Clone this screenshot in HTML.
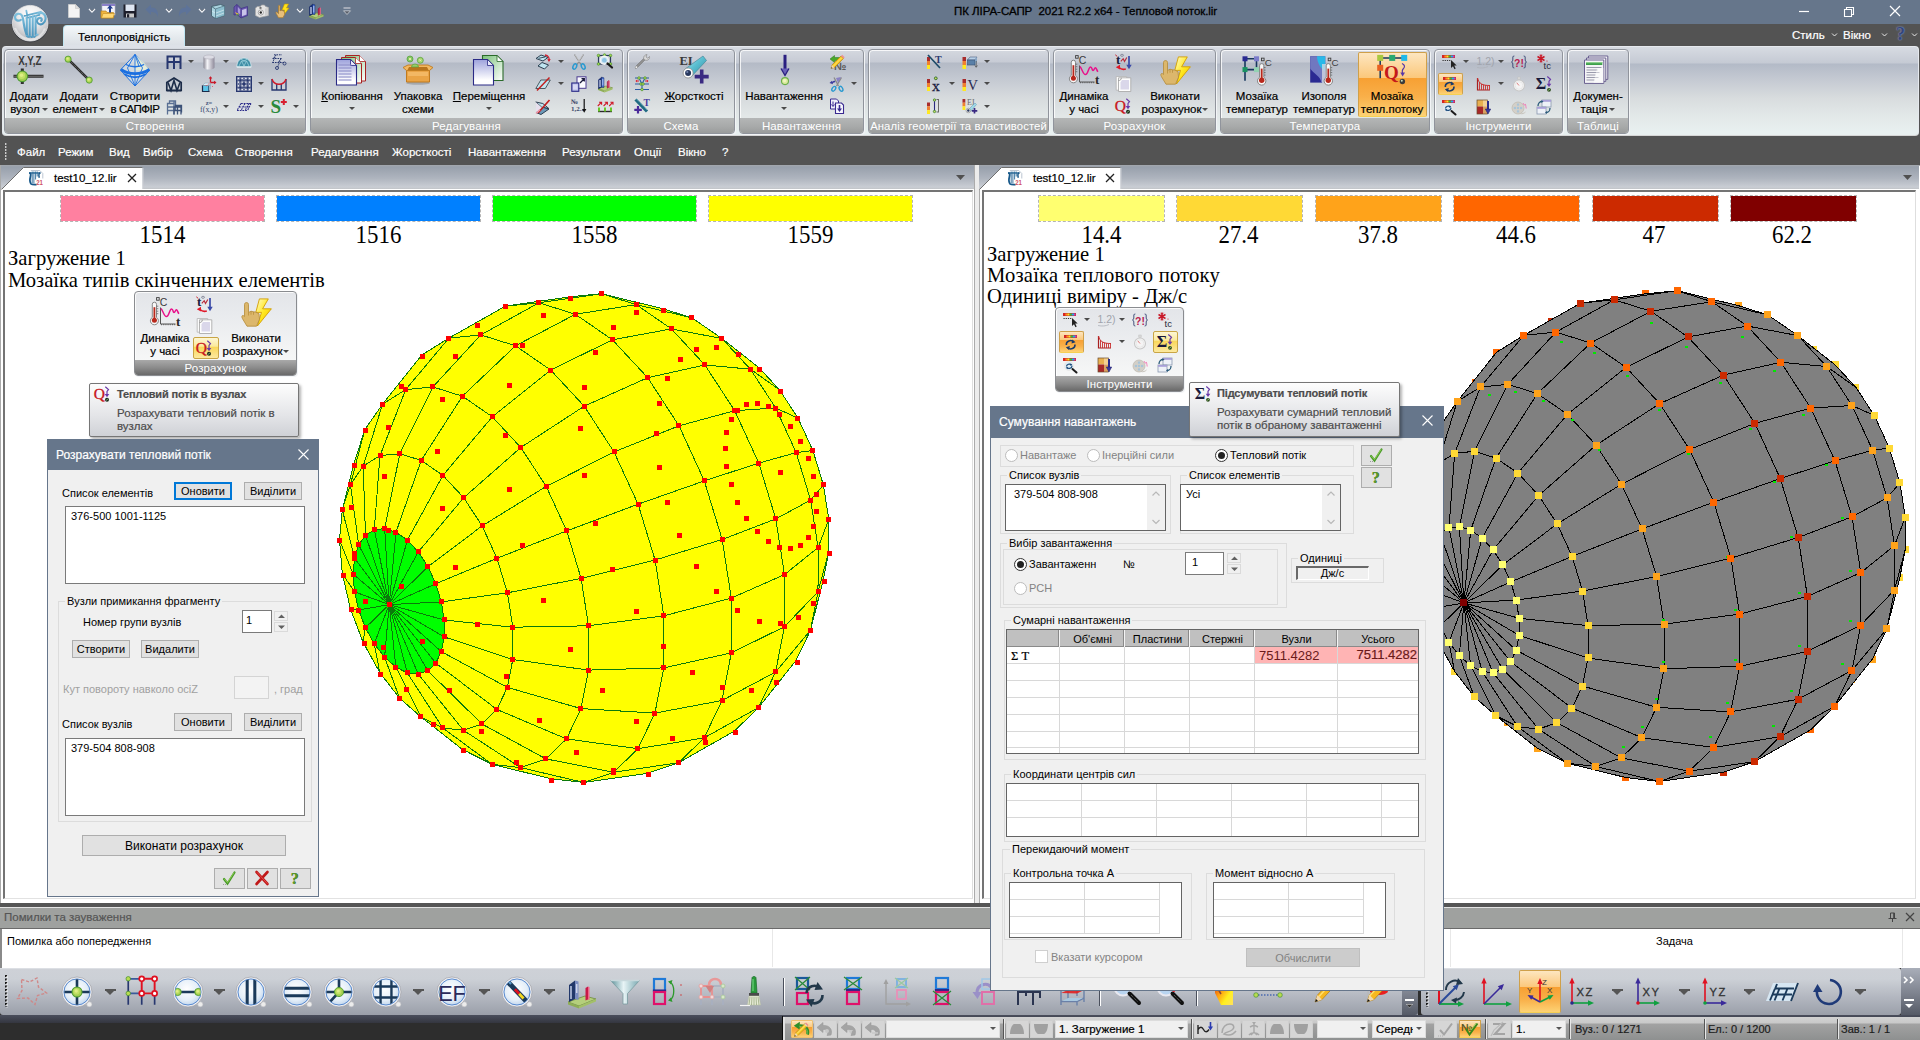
<!DOCTYPE html>
<html lang="uk">
<head>
<meta charset="utf-8">
<title>ПК ЛІРА-САПР 2021 R2.2 x64 - Тепловой поток.lir</title>
<style>
*{box-sizing:border-box;margin:0;padding:0}
html,body{width:1920px;height:1040px;overflow:hidden;background:#535353}
body{position:relative;-webkit-text-stroke:.2px currentColor;font-family:"Liberation Sans",sans-serif;font-size:12px;color:#000;line-height:1}
.abs{position:absolute}
svg{position:absolute;overflow:visible}
.t{position:absolute;white-space:nowrap}
/* ---------- title bar ---------- */
#titlebar{position:absolute;left:0;top:0;width:1920px;height:24px;background:#66768b}
#title{position:absolute;left:0;width:1920px;top:5px;text-align:center;font-size:12.5px;color:#000;padding-left:252px;letter-spacing:-.1px}
/* ---------- ribbon ---------- */
#rtab{position:absolute;left:63px;top:25px;width:122px;height:22px;border-radius:4px 4px 0 0;background:linear-gradient(#f4f8fa,#e3e8ec 60%,#d9dde4);border:1px solid #bfe6f2;border-bottom:none;text-align:center;font-size:12.5px;padding-top:5px}
#ribbon{position:absolute;left:2px;top:46px;width:1917px;height:90px;border-radius:4px;background:linear-gradient(#d7dbe2 0px,#c5cad4 16px,#b3bac7 17px,#c4c9d2 32px,#d8dcde 51px,#e3e9e9 70px,#e8f0f0 85px);border:1px solid #e6e9ee;border-bottom-color:#d6d6d6}
.grp{position:absolute;top:49px;height:85px;border-radius:4px;border:1px solid #90949c;box-shadow:1px 1px 0 #f2f4f6, inset 1px 1px 0 rgba(255,255,255,.8);background:linear-gradient(#d4d8df 0px,#c7cbd5 12px,#b4bac6 13px,#c3c8d1 28px,#d6dadd 47px,#e2e7e7 66px)}
.grp .lbl{position:absolute;left:0;right:0;bottom:0;height:15px;border-radius:0 0 3px 3px;background:linear-gradient(#b4b6b6,#a8aaaa 55%,#9a9c9c);color:#fff;font-size:12px;text-align:center;line-height:16px;-webkit-text-stroke:0;letter-spacing:.1px}
.rb{position:absolute;font-size:12.5px;text-align:center;line-height:13px;white-space:nowrap;letter-spacing:-.15px}
.dd{position:absolute;width:0;height:0;border-left:3.5px solid transparent;border-right:3.5px solid transparent;border-top:4px solid #555}
/* ---------- menu bar ---------- */
#menubar{position:absolute;left:0;top:137px;width:1920px;height:28px;background:#535353}
#menubar span{position:absolute;top:10px;color:#fff;font-size:12px;white-space:nowrap}
/* ---------- doc tabs ---------- */
.strip{position:absolute;top:165px;height:24px;background:linear-gradient(#a4a8ae 0,#98a0ac 2px,#aeb4be 55%,#c9cdd4 22px,#c2c4c8 24px)}
.dtab{position:absolute;top:168px;height:22px;background:#fff}
/* ---------- dialogs ---------- */
.dlg{position:absolute;background:#f0f0f0;border:1px solid #66768b}
.dlg .cap{position:absolute;left:0;top:0;right:0;background:#66768b;color:#fff;font-size:12px}
.gb{position:absolute;border:1px solid #dcdcdc}
.gb>i{position:absolute;top:-6px;font-style:normal;background:#f0f0f0;padding:0 2px;white-space:nowrap;font-size:11px}
.btn{position:absolute;background:#e1e1e1;border:1px solid #adadad;font-size:11px;text-align:center;white-space:nowrap}
.edit{position:absolute;background:#fff;border:1px solid #7a7a7a;font-size:11px}
.s11{font-size:11px;-webkit-text-stroke:0}
.gb>i,.btn,.edit{-webkit-text-stroke:0}
.tip{position:absolute;border:1px solid #767676;border-radius:2px;background:linear-gradient(#fdfdfd,#e4e5e8 60%,#cfd1d6);box-shadow:2px 2px 3px rgba(0,0,0,.3)}
</style>
</head>
<body>
<!-- ================= TITLE BAR ================= -->
<div id="titlebar"></div>
<div class="t" style="left:954px;top:6px;font-size:11.5px;color:#000;letter-spacing:-.05px;-webkit-text-stroke:.3px #000">ПК ЛІРА-САПР&nbsp; 2021 R2.2 x64 - Тепловой поток.lir</div>
<!-- window buttons -->
<svg style="left:1790px;top:0" width="130" height="23" viewBox="0 0 130 23">
 <path d="M9 11.5h10" stroke="#fff" stroke-width="1.2" fill="none"/>
 <path d="M54.5 9.5h7v7h-7z M56.5 9.5v-2h7v7h-2" stroke="#fff" stroke-width="1.1" fill="none"/>
 <path d="M100 6l10 10M110 6l-10 10" stroke="#fff" stroke-width="1.2" fill="none"/>
</svg>
<i class="ic" style="left:74px;top:11px"><svg width="16" height="16" viewBox="0 0 16 16"><path d="M2.5 1.500h7l4 4v9h-11z" fill="#f4f4f4" stroke="#d0d0d0" stroke-width=".8"/><path d="M9.500 1.500v4h4z" fill="#dcdcdc" stroke="#c4c4c4" stroke-width=".6"/></svg></i><i class="ic" style="left:108px;top:11px"><svg width="16" height="16" viewBox="0 0 16 16"><rect x="2" y="1" width="13" height="11" fill="#f2f2f8" stroke="#b8b8c8" stroke-width=".6"/><rect x="2" y="1" width="13" height="2" fill="#8a80c8"/><path d="M1 8h5l1 1.500h6.500v5.500h-12.500z" fill="#f2b740" stroke="#b8821c" stroke-width=".7"/><path d="M1.500 15l1.500-4.500h11.500l-1.500 4.500z" fill="#ffd873" stroke="#c08c22" stroke-width=".6"/><path d="M9 9.500v-4h-2l3-3.500l3 3.500h-2v4z" fill="#1f3c8c"/></svg></i><i class="ic" style="left:130px;top:11px"><svg width="16" height="16" viewBox="0 0 16 16"><path d="M1.500 1.500h13v13h-13z" fill="#1d1f2b"/><rect x="3.500" y="1.500" width="9" height="6.500" fill="#dfe6f2"/><rect x="4" y="10.500" width="8" height="4" fill="#c9c9c9"/><rect x="5" y="11.200" width="2.200" height="3.300" fill="#1d1f2b"/></svg></i><i class="ic" style="left:152px;top:11px"><svg width="16" height="16" viewBox="0 0 16 16"><path d="M1.500 6.500l5.500-5v3c5 0 7.500 3 7 9.500c-1-3.500-3-5-7-5v3z" fill="#5a72a0" opacity=".7"/></svg></i><i class="ic" style="left:185px;top:11px"><svg width="16" height="16" viewBox="0 0 16 16"><path d="M14.500 6.500l-5.500-5v3c-5 0-7.500 3-7 9.500c1-3.500 3-5 7-5v3z" fill="#5a72a0" opacity=".7"/></svg></i><i class="ic" style="left:218px;top:11px"><svg width="16" height="16" viewBox="0 0 16 16"><path d="M1.500 3.500l9-2l4 1.500v9.500l-9 3l-4-2.500z" fill="#a9d3e0" stroke="#3f5a68" stroke-width=".8"/><path d="M1.500 3.500l4 2.500l9-3M5.500 6v9.500" stroke="#3f5a68" stroke-width=".8" fill="none"/><path d="M5.500 6l9-3v9.500l-9 3z" fill="#7fb4c6" opacity=".7"/><path d="M2 8l3 2M6 10l8-3M6 13l8-3" stroke="#e6f4f8" stroke-width=".6"/></svg></i><i class="ic" style="left:241px;top:11px"><svg width="16" height="16" viewBox="0 0 16 16"><path d="M1 4l3-2.500l4 4l6.500-2v9l-6.500 2.500l-4-3.500l-3 .5z" fill="#6a58b0" stroke="#3c2e84" stroke-width=".7"/><path d="M8 5.500v9.500M4 1.500v10" stroke="#3c2e84" stroke-width=".7"/><path d="M9 7l4.500-1.400v6l-4.500 1.700z" fill="#c8c4e8"/><path d="M2 9l2 3l2-1z" fill="#f2c830"/><path d="M3.500 10.500l2.500 1.500l-1 .8z" fill="#2ea02e"/><path d="M4.800 4l2.400 2.400v5l-2.400-2.200z" fill="#a89ad8"/></svg></i><i class="ic" style="left:262px;top:11px"><svg width="16" height="16" viewBox="0 0 16 16"><path d="M1.500 5l2-1.500h3l1-1.500h3l1 1.500l3 1v8l-9 2l-4-2z" fill="#e4e4e4" stroke="#a8a8a8" stroke-width=".7"/><circle cx="6.800" cy="9.500" r="2.600" fill="#f6f6f6" stroke="#8a8a8a" stroke-width=".7"/><circle cx="6.800" cy="9.500" r="1.200" fill="#222"/><rect x="5.500" y="4.200" width="2" height="1.500" fill="#555"/><path d="M11 5.500l3-.5v7l-3 1z" fill="#cfcfcf"/></svg></i><i class="ic" style="left:283px;top:11px"><svg width="16" height="16" viewBox="0 0 16 16"><path d="M9.500 1h4l-2 4h2.500l-6 8l1.500-6h-2.500z" fill="#ffe11a" stroke="#c79a00" stroke-width=".6"/><path d="M3.500 3c0-1 1.500-1 1.500 0v5l1-.8l1 .3l1 .2l1.500 1v3l-1.500 3h-4.500l-2.500-4.500c-.5-1 .5-1.500 1.200-.8l1.300 1.300z" fill="#e8bf7a" stroke="#a8782c" stroke-width=".7"/></svg></i><i class="ic" style="left:316px;top:11px"><svg width="16" height="16" viewBox="0 0 16 16"><path d="M1 12.300l8-2.300l6.500 1.800l-8 3z" fill="#b5cf7c" stroke="#6e8c3c" stroke-width=".6"/><path d="M1 12.300v1.700l6.500 2.500v-1.700z" fill="#8fae55"/><path d="M7.500 14.800v1.700l8-3v-1.700z" fill="#a3c068"/><path d="M1.500 3.800l3.200-2.600v10l-3.200 1.600z" fill="#18307e" stroke="#10205a" stroke-width=".5"/><path d="M4.700 1.200l2.200 .6v9.800l-2.200-.4z" fill="#4a74dc" stroke="#10205a" stroke-width=".5"/><path d="M3 4v7" stroke="#fff" stroke-width="1"/><path d="M5.800 3v6.500" stroke="#cfe0ff" stroke-width=".8"/><path d="M10.200 5.800l1.500-1.300v7l-1.500 .8z" fill="#c81848" stroke="#8a1030" stroke-width=".4"/><path d="M11.700 4.500l1.100 .3v7l-1.100-.3z" fill="#f06488"/></svg></i><svg style="left:87.5px;top:8px" width="8" height="6" viewBox="0 0 8 6"><path d="M1 1l3 3l3-3" stroke="#eef0f4" stroke-width="1.300" fill="none"/><path d="M2.300 1.200l1.700 1.700l1.700-1.700" stroke="#555" stroke-width=".5" fill="none"/></svg><svg style="left:164.5px;top:8px" width="8" height="6" viewBox="0 0 8 6"><path d="M1 1l3 3l3-3" stroke="#eef0f4" stroke-width="1.300" fill="none"/><path d="M2.300 1.200l1.700 1.700l1.700-1.700" stroke="#555" stroke-width=".5" fill="none"/></svg><svg style="left:197.5px;top:8px" width="8" height="6" viewBox="0 0 8 6"><path d="M1 1l3 3l3-3" stroke="#eef0f4" stroke-width="1.300" fill="none"/><path d="M2.300 1.200l1.700 1.700l1.700-1.700" stroke="#555" stroke-width=".5" fill="none"/></svg><svg style="left:296px;top:8px" width="8" height="6" viewBox="0 0 8 6"><path d="M1 1l3 3l3-3" stroke="#eef0f4" stroke-width="1.300" fill="none"/><path d="M2.300 1.200l1.700 1.700l1.700-1.700" stroke="#555" stroke-width=".5" fill="none"/></svg><div class="abs" style="left:341px;top:6px;width:12px;height:10px"><svg width="12" height="10" viewBox="0 0 12 10"><path d="M2.500 2h7" stroke="#c4c8d0" stroke-width="1.300"/><path d="M2.500 4.800h7l-3.500 3.700z" fill="#5a5f6a" stroke="#c4c8d0" stroke-width=".9"/></svg></div>
<!-- app logo -->
<svg style="left:11px;top:4px" width="39" height="39" viewBox="0 0 39 39"><defs><radialGradient id="lg1" cx="50%" cy="28%" r="80%"><stop offset="0" stop-color="#ffffff"/><stop offset=".4" stop-color="#ececee"/><stop offset=".78" stop-color="#bfc0c3"/><stop offset="1" stop-color="#f0f0f0"/></radialGradient><linearGradient id="lg2" x1="0" y1="0" x2="0" y2="1"><stop offset="0" stop-color="#7ec0de"/><stop offset="1" stop-color="#4a94bc"/></linearGradient></defs><circle cx="19.300" cy="19.800" r="18.600" fill="#2c3038" opacity=".55"/><circle cx="19.200" cy="19.200" r="17.800" fill="url(#lg1)" stroke="#e8e8ea" stroke-width=".8"/><path d="M4 24c2 6 8 11 15 11.500s13-5 15-11" stroke="#fff" stroke-width="2.200" fill="none" opacity=".45"/><g fill="none" stroke="url(#lg2)" stroke-linecap="round" stroke-linejoin="round"><path d="M9.800 15.800c-2.200 1.800-5.800 .6-5.800-2.600c0-3.800 5-4.600 7-1.500c1.200 2 1.200 4.500 1.800 8c.8 5 2 9.500 3.700 12.300" stroke-width="2.200"/><path d="M15.300 6.500l1 5.500M13.500 11.800l16.500-4M15.500 14l13-3.200" stroke-width="1.700"/><path d="M15.800 14v17.500M18.700 13.200v19.300M21.700 12.500v19.800M24.600 12v18.700" stroke-width="2.100"/><path d="M27.500 9.400c4-1.600 7.400 1 7.100 5.400c-.3 4.200-4.500 6.900-7.400 4.700c-2.400-1.800-1.100-5.400 1.600-5.600c2-.1 2.700 2 1.400 3" stroke-width="2.100"/><path d="M27 13v16.500" stroke-width="1.800"/><path d="M15.500 31.800l2 1.200l1.500-.8l1.500 1l1.500-.8l1.500 .6l1.500-1.800l1.800-.8" stroke-width="1.600"/></g></svg>
<!-- right-side style/window -->
<div class="t" style="left:1792px;top:30px;font-size:11.5px;color:#fff">Стиль</div>
<div class="t" style="left:1843px;top:30px;font-size:11.5px;color:#fff">Вікно</div>
<svg style="left:1830px;top:31px" width="90" height="10" viewBox="0 0 90 10"><path d="M2 2.5l2.5 2.5l2.5-2.5M52 2.5l2.5 2.5l2.5-2.5M82 2.5l2.5 2.5l2.5-2.5" stroke="#e8e8e8" stroke-width="1" fill="none"/></svg>
<div class="t" style="left:1896px;top:25px;font-size:18px;font-weight:bold;color:#34467a;font-family:'Liberation Serif',serif;text-shadow:0 0 1px #9fb0e0,0 0 2px #7f90c0">?</div>
<!-- ribbon tab -->
<div id="rtab"><span style="font-size:11.5px;letter-spacing:-.02px">Теплопровідність</span></div>
<div id="ribbon"></div>
<div class="abs" style="left:64px;top:45px;width:120px;height:3px;background:#dde1e8"></div>
<!-- ================= RIBBON GROUPS ================= -->
<style>
.rb{position:absolute;top:90px;width:90px;margin-left:-45px;font-size:11.5px;line-height:12.5px;text-align:center;white-space:nowrap;letter-spacing:-.02px}
.rb u{text-decoration:underline;text-underline-offset:1px}
.da{display:inline-block;width:0;height:0;border-left:3px solid transparent;border-right:3px solid transparent;border-top:3.5px solid #4a4a4a;vertical-align:middle;margin-left:2px;position:relative;top:0px}
.db{position:absolute;width:0;height:0;border-left:3px solid transparent;border-right:3px solid transparent;border-top:3.5px solid #4a4a4a;margin-left:-3px}
.ic,.IC,.sic{font-style:normal}
.ic{position:absolute;display:block;width:16px;height:16px;margin:-8px 0 0 -8px}
.ic svg{left:0;top:0}
.IC{position:absolute;display:block;width:32px;height:32px;margin:-16px 0 0 -16px}
.IC svg{left:0;top:0}
.hl{position:absolute;border:1px solid #cfa04a;border-bottom-color:#f6cf52;border-radius:2px;background:linear-gradient(#fde6c0,#fbc87c 39%,#f7a033 40%,#f9b04a 70%,#fdd274 100%)}
.hl2{position:absolute;border:1px solid #c9a545;border-radius:2px;background:linear-gradient(#fdf6d4,#fbe99c 42%,#f9d658 44%,#fce9a0 100%)}
.fonly{display:none}
.flt .fonly{display:block}
.flt .grp{background:linear-gradient(#e3e5e9 0,#e9ebee 24px,#f1f2f3 50px,#f6f7f7 68px);border-color:#8a8c90}
.flt .grp .lbl{background:linear-gradient(#a9a9a9,#8c8c8c 50%,#696969)}
</style>




















<div class="grp" style="left:4px;width:302px"><div class="lbl"><span style="font-size:11.5px">Створення</span></div></div>
<i class="IC" style="left:29px;top:69px"><svg width="32" height="32" viewBox="0 0 32 32"><text transform="translate(16.800 11.500) scale(0.8 1)" text-anchor="middle" font-family="Liberation Sans" font-weight="bold" font-size="12.2" fill="#3a3a3a">X,Y,Z</text><path d="M.5 23.300h30M9.300 15.500v15.500" stroke="#2e2e2e" stroke-width="3"/><path d="M1 23.300h29" stroke="#8a8a8a" stroke-width=".7"/><circle cx="9.3" cy="23.3" r="5.3" fill="#a4cf52" stroke="#4d9c30" stroke-width="1.06"/><circle cx="8.77" cy="22.66" r="3.29" fill="#c8e468" opacity=".85"/><circle cx="8.51" cy="22.24" r="1.75" fill="#e2f08a" opacity=".9"/></svg></i>
<div class="rb" style="left:29px">Додати<br>вузол<b class="da"></b></div>
<i class="IC" style="left:79px;top:69px"><svg width="32" height="32" viewBox="0 0 32 32"><path d="M5.100 6.200l21.100 20.900" stroke="#2b2b2b" stroke-width="2.600"/><path d="M5.100 6.200l21.100 20.900" stroke="#9a9a9a" stroke-width=".7" stroke-dasharray="1 1"/><circle cx="5.1" cy="6.2" r="3.1" fill="#a4cf52" stroke="#4d9c30" stroke-width="0.80"/><circle cx="4.79" cy="5.83" r="1.92" fill="#c8e468" opacity=".85"/><circle cx="4.63" cy="5.58" r="1.02" fill="#e2f08a" opacity=".9"/><circle cx="26.2" cy="27.1" r="3.1" fill="#a4cf52" stroke="#4d9c30" stroke-width="0.80"/><circle cx="25.89" cy="26.73" r="1.92" fill="#c8e468" opacity=".85"/><circle cx="25.73" cy="26.48" r="1.02" fill="#e2f08a" opacity=".9"/></svg></i>
<div class="rb" style="left:79px">Додати<br>елемент<b class="da"></b></div>
<i class="IC" style="left:135px;top:69px"><svg width="32" height="34" viewBox="0 0 32 34"><path d="M16 1.500l14.800 15.500l-14.800 16l-14.600-16z" fill="#e4ecf0" fill-opacity=".55" stroke="#1b6fe0" stroke-width="1"/><path d="M16 1.500l9 8l5.800 7.500l-14.800 .5z" fill="#e8f0d8" fill-opacity=".8"/><path d="M16 1.500v31.500M16 1.500l-7.500 13.500l7.500 18M16 1.500l7.500 13.500l-7.500 18M16 1.500l4 12" stroke="#1b6fe0" stroke-width=".9" fill="none"/><path d="M7 11.500c5 3 13 3 18 0" stroke="#1b6fe0" stroke-width="1.300" fill="none"/><path d="M2 16.500c8 5.500 20 5.500 28.300 0" stroke="#1b6fe0" stroke-width="2.800" fill="none"/><path d="M5 21c7 4 15 4 22 0" stroke="#1b6fe0" stroke-width="2" fill="none"/></svg></i>
<div class="rb" style="left:135px">Створити<br><span style="letter-spacing:-.5px">в САПФІР</span></div>
<i class="ic" style="left:174px;top:62px"><svg width="16" height="16" viewBox="0 0 16 16"><path d="M1.500 15v-12.500h13v12.500M8 2.500v12.500M1.500 8h13" stroke="#27376f" stroke-width="2" fill="none"/></svg></i><b class="db" style="left:191px;top:60px"></b>
<i class="ic" style="left:174px;top:84px"><svg width="16" height="16" viewBox="0 0 16 16"><path d="M.8 14.500v-8l7.200-4.500l7.200 4.500v8z" fill="none" stroke="#1c2c48" stroke-width="1.700"/><path d="M2 6.500l3 8l3-10l3 10l3-8" fill="none" stroke="#1c2c48" stroke-width="1.600"/><path d="M.8 14.500h14.400" stroke="#1c2c48" stroke-width="1.800"/></svg></i>
<i class="ic" style="left:174px;top:107px"><svg width="16" height="16" viewBox="0 0 16 16"><path d="M1.500 15.500v-11h6.500v11M1.500 8h6.500M1.500 11.500h6.500M3.500 4.500v-2.500h6v9.500M8 2v3" stroke="#5a7094" stroke-width="1.300" fill="none"/><path d="M8 15.500v-7.500h7v7.500M8 11.500h7M11.500 8v7.500M9.500 8v-1.500h6v7" stroke="#3c5278" stroke-width="1.300" fill="none"/></svg></i>
<i class="ic" style="left:209px;top:62px"><svg width="16" height="16" viewBox="0 0 16 16"><defs><linearGradient id="cyl" x1="0" y1="0" x2="1" y2="0"><stop offset="0" stop-color="#8a8894"/><stop offset=".35" stop-color="#f4f4f8"/><stop offset="1" stop-color="#8e8a9a"/></linearGradient></defs><path d="M2.500 3v10.500a5.500 2 0 0 0 11 0v-10.500z" fill="url(#cyl)"/><ellipse cx="8" cy="3" rx="5.500" ry="2" fill="#dcdce4" stroke="#aaa8b4" stroke-width=".5"/></svg></i><b class="db" style="left:226px;top:60px"></b>
<i class="ic" style="left:209px;top:84px"><svg width="16" height="16" viewBox="0 0 16 16"><path d="M1.500 9.500h6.500v6h-6.500z" fill="#5cc4e8" stroke="#1a2a4a" stroke-width="1.200"/><path d="M1.500 9.500l2.500-2.500h6l-2 2.500z" fill="#d8eef8" stroke="#8898a8" stroke-width=".5"/><path d="M8 9.500l2-2.500v5.500l-2 3z" fill="#a0b8c8"/><path d="M9.500 6.500v-5.500M9.500 6.500h5" stroke="#c81828" stroke-width="1.300"/><path d="M7.700 2.500l1.800-2.300l1.800 2.300zM13 4.700l2.500 1.800l-2.500 1.800z" fill="#c81828"/><path d="M9.500 6.500l-5 4M11 11l1.500-1.500" stroke="#e04858" stroke-width=".9" stroke-dasharray="1.200 1"/></svg></i><b class="db" style="left:226px;top:82px"></b>
<i class="ic" style="left:209px;top:106px"><svg width="16" height="16" viewBox="0 0 16 16"><text x="8" y="6.500" text-anchor="middle" font-family="Liberation Serif" font-weight="bold" font-size="6.500" fill="#4a5a80">z=</text><text transform="translate(8 13.500) scale(0.88 1)" text-anchor="middle" font-family="Liberation Serif" font-size="9" fill="#3a4a70">f(x,y)</text></svg></i><b class="db" style="left:226px;top:105px"></b>
<i class="ic" style="left:244px;top:62px"><svg width="16" height="16" viewBox="0 0 16 16"><path d="M.8 13c0-12 14.400-12 14.400 0z" fill="#3f8ea6" stroke="#d8e8ee" stroke-width=".8"/><path d="M3 12l2.500-5l2.500 5l2.500-5l2.500 5M5.500 7h5M4 4.500l4 2.500l4-2.500" stroke="#a8d8e4" stroke-width=".7" fill="none"/><path d="M.8 13h14.400" stroke="#e8f0f4" stroke-width="1.200"/></svg></i>
<i class="ic" style="left:244px;top:84px"><svg width="16" height="16" viewBox="0 0 16 16"><rect x=".5" y=".5" width="15" height="15" fill="#dfe2ea" stroke="#27376f" stroke-width="1"/><path d="M.5 4.300h15M.5 8h15M.5 11.700h15M4.300 .5v15M8 .5v15M11.700 .5v15" stroke="#27376f" stroke-width=".9"/><circle cx="2.4" cy="2.4" r="1.300" fill="#e8eaf0" stroke="#27376f" stroke-width=".7"/><circle cx="2.4" cy="6.15" r="1.300" fill="#e8eaf0" stroke="#27376f" stroke-width=".7"/><circle cx="2.4" cy="9.85" r="1.300" fill="#e8eaf0" stroke="#27376f" stroke-width=".7"/><circle cx="2.4" cy="13.6" r="1.300" fill="#e8eaf0" stroke="#27376f" stroke-width=".7"/><circle cx="6.15" cy="2.4" r="1.300" fill="#e8eaf0" stroke="#27376f" stroke-width=".7"/><circle cx="6.15" cy="6.15" r="1.300" fill="#e8eaf0" stroke="#27376f" stroke-width=".7"/><circle cx="6.15" cy="9.85" r="1.300" fill="#e8eaf0" stroke="#27376f" stroke-width=".7"/><circle cx="6.15" cy="13.6" r="1.300" fill="#e8eaf0" stroke="#27376f" stroke-width=".7"/><circle cx="9.85" cy="2.4" r="1.300" fill="#e8eaf0" stroke="#27376f" stroke-width=".7"/><circle cx="9.85" cy="6.15" r="1.300" fill="#e8eaf0" stroke="#27376f" stroke-width=".7"/><circle cx="9.85" cy="9.85" r="1.300" fill="#e8eaf0" stroke="#27376f" stroke-width=".7"/><circle cx="9.85" cy="13.6" r="1.300" fill="#e8eaf0" stroke="#27376f" stroke-width=".7"/><circle cx="13.6" cy="2.4" r="1.300" fill="#e8eaf0" stroke="#27376f" stroke-width=".7"/><circle cx="13.6" cy="6.15" r="1.300" fill="#e8eaf0" stroke="#27376f" stroke-width=".7"/><circle cx="13.6" cy="9.85" r="1.300" fill="#e8eaf0" stroke="#27376f" stroke-width=".7"/><circle cx="13.6" cy="13.6" r="1.300" fill="#e8eaf0" stroke="#27376f" stroke-width=".7"/><circle cx="8" cy="8" r="1.400" fill="#27376f"/><circle cx="4.300" cy="11.700" r="1.100" fill="#27376f"/><circle cx="11.700" cy="4.300" r="1.100" fill="#27376f"/><circle cx="11.700" cy="11.700" r="1.100" fill="#27376f"/><circle cx="4.300" cy="4.300" r="1.100" fill="#27376f"/></svg></i><b class="db" style="left:261px;top:82px"></b>
<i class="ic" style="left:244px;top:106px"><svg width="16" height="16" viewBox="0 0 16 16"><path d="M5 5.500h10M3 9h10.500M1 12.500h10.500M5 5.500l-4 7M9 5.500l-4 7M13 5.500l-4 7M15 5.500l-3.500 7" stroke="#2a2a8a" stroke-width="1.100" stroke-dasharray="1.800 .9" fill="none"/></svg></i><b class="db" style="left:261px;top:105px"></b>
<i class="ic" style="left:279px;top:62px"><svg width="16" height="16" viewBox="0 0 16 16"><path d="M3 .8h8M1.500 4.500h9M1.500 8.500h12M5 .8l-3.500 8M10 4.500l-3.500 9" stroke="#27376f" stroke-width="1" stroke-dasharray="1.600 .9" fill="none"/><circle cx="13.500" cy="9.500" r="1.500" fill="none" stroke="#27376f" stroke-width=".9"/><circle cx="6" cy="14" r="1.500" fill="none" stroke="#27376f" stroke-width=".9"/><path d="M4 2.800l-1.500 1M9 6.500l-1.500 1" stroke="#27376f" stroke-width="1"/></svg></i>
<i class="ic" style="left:279px;top:84px"><svg width="16" height="16" viewBox="0 0 16 16"><path d="M1 3v11h14v-11M5.700 8v6M10.300 8v6" stroke="#27376f" stroke-width="1.300" fill="none"/><path d="M1 3c2 7 12 7 14 0" stroke="#d01828" stroke-width="1.400" fill="none"/></svg></i>
<i class="ic" style="left:279px;top:106px"><svg width="16" height="16" viewBox="0 0 16 16"><text x="-.5" y="15" font-family="Liberation Serif" font-weight="bold" font-size="19" fill="#2a8a3a">S</text><path d="M12.800 1v6M9.800 4h6" stroke="#d82030" stroke-width="2"/></svg></i><b class="db" style="left:296px;top:105px"></b>

<div class="grp" style="left:310px;width:313px"><div class="lbl"><span style="font-size:11.5px">Редагування</span></div></div>
<i class="IC" style="left:352px;top:70px"><svg width="32" height="32" viewBox="0 0 32 32"><defs><linearGradient id="pgG" x1="0" y1="0" x2="1" y2="1"><stop offset="0" stop-color="#7ac27a"/><stop offset="1" stop-color="#fff"/></linearGradient><linearGradient id="pgB" x1="0" y1="0" x2="0" y2="1"><stop offset="0" stop-color="#9da2dc"/><stop offset=".8" stop-color="#fff"/></linearGradient></defs><path d="M9.500 1.500h14l6 6v19.500h-20z" fill="url(#pgG)" stroke="#a82222" stroke-width="1"/><path d="M23.500 1.500v6h6" fill="#fff" stroke="#a82222" stroke-width=".8"/><path d="M5.500 3.500h14l6 6v19.500h-20z" fill="url(#pgG)" stroke="#a82222" stroke-width="1"/><path d="M19.500 3.500v6h6" fill="#fff" stroke="#a82222" stroke-width=".8"/><path d="M.5 5.500h14l6 6v19.500h-20z" fill="url(#pgB)" stroke="#2a2a86" stroke-width="1.100"/><path d="M14.500 5.500v6h6z" fill="#e8e8f8" stroke="#2a2a86" stroke-width=".8"/><path d="M2.500 11h13" stroke="#8d8fc8" stroke-width="1.100"/><path d="M2.500 14h13" stroke="#8d8fc8" stroke-width="1.100"/><path d="M2.500 17h13" stroke="#8d8fc8" stroke-width="1.100"/><path d="M2.500 20h13" stroke="#8d8fc8" stroke-width="1.100"/><path d="M2.500 23h13" stroke="#8d8fc8" stroke-width="1.100"/><path d="M2.500 26h13" stroke="#8d8fc8" stroke-width="1.100"/></svg></i>
<div class="rb" style="left:352px"><u>К</u>опіювання</div><b class="db" style="left:352px;top:107px"></b>
<i class="IC" style="left:418px;top:70px"><svg width="32" height="32" viewBox="0 0 32 32"><ellipse cx="16" cy="29" rx="12" ry="1.800" fill="#000" opacity=".18"/><path d="M4.500 16.500h23v11.500h-23z" fill="#eaa446" stroke="#c07a1e" stroke-width="1"/><path d="M6 18h20v4h-20z" fill="#f6c070" opacity=".7"/><path d="M4.500 16.500l-3.500-3l5-2.500h20l5 2.500l-3.500 3z" fill="#f3b860" stroke="#c07a1e" stroke-width=".9"/><path d="M7 13h18l1.500 3h-21z" fill="#b8741c"/><circle cx="8" cy="5" r="3" fill="#86c866" stroke="#5aa23e" stroke-width=".8"/><circle cx="18.300" cy="6.300" r="3" fill="#a4d470" stroke="#5aa23e" stroke-width=".8"/><path d="M9.500 13a3.500 3 0 0 1 7 0z" fill="#96cc6a" stroke="#5aa23e" stroke-width=".7"/><path d="M7 4l2 2M9 4l-2 2M17.300 5.300l2 2M19.300 5.300l-2 2" stroke="#e6f0a0" stroke-width=".9"/></svg></i>
<div class="rb" style="left:418px">Упаковка<br>схеми</div>
<i class="IC" style="left:489px;top:70px"><svg width="32" height="32" viewBox="0 0 32 32"><path d="M9.500 1.500h14.500l6 6v19h-20.500z" fill="url(#pgG)" stroke="#2a6a2a" stroke-width="1.100"/><path d="M24 1.500v6h6z" fill="#fff" stroke="#2a6a2a" stroke-width=".8"/><path d="M.5 5.500h14l6 6v19.500h-20z" fill="url(#pgB)" stroke="#2a2a86" stroke-width="1.100"/><path d="M14.500 5.500v6h6z" fill="#e8e8f8" stroke="#2a2a86" stroke-width=".8"/></svg></i>
<div class="rb" style="left:489px"><u>П</u>ереміщення</div><b class="db" style="left:489px;top:107px"></b>
<i class="ic" style="left:543px;top:62px"><svg width="16" height="16" viewBox="0 0 16 16"><path d="M1 4.500l5-3.500l7 2.500l-5 3.500z" fill="#bfe4f0" stroke="#2c3e50" stroke-width="1"/><path d="M3 12l4-3.500l6.500 2.500l-4 4z" fill="#bfe4f0" stroke="#2c3e50" stroke-width="1"/><path d="M3.500 4.300l6.500-1.300" stroke="#2c3e50" stroke-width=".9"/><path d="M10 1c3.500 .5 4.500 3 4 5.500" stroke="#d02030" stroke-width="1.300" fill="none"/><path d="M12.200 5.200l1.800 2.800l1.700-3z" fill="#d02030"/></svg></i><b class="db" style="left:561px;top:60px"></b>
<i class="ic" style="left:543px;top:84px"><svg width="16" height="16" viewBox="0 0 16 16"><path d="M.8 12.500l5-8.500h9.500l-5 8.500z" fill="#bfe4f0" stroke="#4a5a62" stroke-width="1"/><path d="M2 14.500l12.500-13" stroke="#c42020" stroke-width="1.500"/></svg></i><b class="db" style="left:561px;top:82px"></b>
<i class="ic" style="left:543px;top:107px"><svg width="16" height="16" viewBox="0 0 16 16"><path d="M.8 3l7 1.500l6 5l-7-1.200z" fill="#bfe4f0" stroke="#2c3e50" stroke-width="1"/><path d="M1 13.500l5 2l8-5.500l-5.500-1.500z" fill="#6a9ab8" stroke="#2c3e50" stroke-width="1"/><path d="M.8 3v10.500l6-5z" fill="#e8e0f0" opacity=".8"/><path d="M3 14l11.500-13" stroke="#c42020" stroke-width="1.700"/><path d="M1 14.500l4-4" stroke="#f0a0b0" stroke-width="1.600"/></svg></i>
<i class="ic" style="left:579px;top:62px"><svg width="16" height="16" viewBox="0 0 16 16"><path d="M3.500 .5l6.500 10M12.500 .5l-6.500 10" stroke="#8a8a8a" stroke-width="1.300"/><path d="M4 .8l5 7.500M12 .8l-5 7.500" stroke="#e8e8e8" stroke-width=".5"/><ellipse cx="3.800" cy="12.500" rx="1.700" ry="2.800" transform="rotate(25 3.800 12.500)" fill="none" stroke="#2a9ad0" stroke-width="1.500"/><ellipse cx="12.200" cy="12.500" rx="1.700" ry="2.800" transform="rotate(-25 12.200 12.500)" fill="none" stroke="#2a9ad0" stroke-width="1.500"/></svg></i>
<i class="ic" style="left:579px;top:84px"><svg width="16" height="16" viewBox="0 0 16 16"><rect x="6" y=".8" width="9" height="11.500" fill="#fbfbff" stroke="#4a3a90" stroke-width="1"/><path d="M9 7l4-4M10.500 2.700h2.800v2.800" stroke="#1a1a3a" stroke-width="1.300" fill="none"/><rect x=".8" y="7" width="7" height="8.300" fill="#b8bce8" stroke="#2a2a86" stroke-width="1.100"/><rect x="2" y="8.500" width="4.500" height="5" fill="#d8daf4"/></svg></i>
<i class="ic" style="left:579px;top:106px"><svg width="16" height="16" viewBox="0 0 16 16"><text x="0" y="6" font-family="Liberation Serif" font-weight="bold" font-size="7" fill="#3a4668">№</text><text x="0" y="12.500" font-family="Liberation Serif" font-weight="bold" font-size="7" fill="#3a4668">1,2..</text><path d="M13.200 1v12" stroke="#111" stroke-width="1.200"/><path d="M11 11l2.200 3.800l2.200-3.800z" fill="#111"/></svg></i>
<i class="ic" style="left:605px;top:62px"><svg width="16" height="16" viewBox="0 0 16 16"><rect x="1.500" y="1.500" width="12" height="8.500" fill="none" stroke="#2a3a5a" stroke-width="1.200"/><circle cx="1.5" cy="1.5" r="1.300" fill="#a8d850" stroke="#3a8a2a" stroke-width=".6"/><circle cx="7.5" cy="1" r="1.300" fill="#a8d850" stroke="#3a8a2a" stroke-width=".6"/><circle cx="13.5" cy="1.5" r="1.300" fill="#a8d850" stroke="#3a8a2a" stroke-width=".6"/><circle cx="1.5" cy="10" r="1.300" fill="#a8d850" stroke="#3a8a2a" stroke-width=".6"/><circle cx="13.5" cy="10" r="1.300" fill="#a8d850" stroke="#3a8a2a" stroke-width=".6"/><circle cx="7.300" cy="6.300" r="4" fill="#cfe6f4" stroke="#f4f4f4" stroke-width="1.400"/><circle cx="7.300" cy="6.300" r="2.300" fill="#8ec4e4"/><path d="M10.500 9.500l4.500 4" stroke="#1a1a1a" stroke-width="2.200" stroke-linecap="round"/></svg></i>
<i class="ic" style="left:605px;top:84px"><svg width="16" height="16" viewBox="0 0 16 16"><path d="M1 12.300l8-2.300l6.500 1.800l-8 3z" fill="#b5cf7c" stroke="#6e8c3c" stroke-width=".6"/><path d="M1 12.300v1.700l6.500 2.500v-1.700z" fill="#8fae55"/><path d="M7.500 14.800v1.700l8-3v-1.700z" fill="#a3c068"/><path d="M1.500 3.800l3.200-2.600v10l-3.200 1.600z" fill="#18307e" stroke="#10205a" stroke-width=".5"/><path d="M4.700 1.200l2.200 .6v9.800l-2.200-.4z" fill="#4a74dc" stroke="#10205a" stroke-width=".5"/><path d="M3 4v7" stroke="#fff" stroke-width="1"/><path d="M5.800 3v6.500" stroke="#cfe0ff" stroke-width=".8"/><path d="M10.200 5.800l1.500-1.300v7l-1.500 .8z" fill="#c81848" stroke="#8a1030" stroke-width=".4"/><path d="M11.700 4.500l1.100 .3v7l-1.100-.3z" fill="#f06488"/></svg></i>
<i class="ic" style="left:605px;top:106px"><svg width="16" height="16" viewBox="0 0 16 16"><path d="M1 13.500h14" stroke="#2a2a2a" stroke-width="1.400"/><rect x="1" y="9.500" width="2" height="4" fill="#6ac82a"/><rect x="7" y="9.500" width="2" height="4" fill="#6ac82a"/><rect x="13" y="9.500" width="2" height="4" fill="#6ac82a"/><path d="M0.8 8l3.300-3.300M2.0 4.200h2.600v2.600" stroke="#d01828" stroke-width="1.100" fill="none"/><path d="M6.6 8l3.300-3.300M7.8 4.200h2.600v2.600" stroke="#d01828" stroke-width="1.100" fill="none"/><path d="M12.2 8l3.300-3.300M13.399999999999999 4.200h2.600v2.600" stroke="#d01828" stroke-width="1.100" fill="none"/></svg></i>

<div class="grp" style="left:627px;width:108px"><div class="lbl"><span style="font-size:11.5px">Схема</span></div></div>
<i class="ic" style="left:642px;top:62px"><svg width="16" height="16" viewBox="0 0 16 16"><path d="M2 13.500l8.500-8.500" stroke="#6a6a6a" stroke-width="2.300" stroke-linecap="round"/><path d="M2.500 13l8-8" stroke="#c8c8c8" stroke-width=".8"/><circle cx="2.300" cy="13.300" r="1" fill="#eee"/><path d="M10 5.500c-1-2 0-4.500 3-5l-1 2.500l1.800 1.200l1.700-1.700c.5 3-2.500 5-5.500 3z" fill="#d8d8d8" stroke="#8a8a8a" stroke-width=".7"/></svg></i>
<i class="ic" style="left:642px;top:84px"><svg width="16" height="16" viewBox="0 0 16 16"><path d="M1 2h14M1 8h14M1 13.500h14M5 2l3 6l3-6M8 8v5.500" stroke="#2a5aa8" stroke-width="1.100" fill="none"/><circle cx="5" cy="2" r="1.3" fill="#b8dc50" stroke="#3a8a2a" stroke-width=".6"/><circle cx="11" cy="2" r="1.3" fill="#b8dc50" stroke="#3a8a2a" stroke-width=".6"/><circle cx="7" cy="8" r="1.3" fill="#b8dc50" stroke="#3a8a2a" stroke-width=".6"/><circle cx="9" cy="8" r="1.3" fill="#b8dc50" stroke="#3a8a2a" stroke-width=".6"/><circle cx="8" cy="13.5" r="1.3" fill="#b8dc50" stroke="#3a8a2a" stroke-width=".6"/><path d="M1.500 5l2-1.800v3.600zM5 5l-2-1.800v3.600zM11 5l2-1.800v3.600zM14.500 5l-2-1.800v3.600z" fill="#e01020"/></svg></i>
<i class="ic" style="left:642px;top:106px"><svg width="16" height="16" viewBox="0 0 16 16"><path d="M1.500 1.500l11.500 12" stroke="#1e6a82" stroke-width="3"/><path d="M2.500 1l11 11.500" stroke="#9ad0e0" stroke-width=".8" stroke-dasharray=".8 1"/><path d="M4 8v7.500M.3 11.800h7.500" stroke="#4a2a9a" stroke-width="2.200"/><text x="9.500" y="8" font-family="Liberation Serif" font-weight="bold" font-size="9.500" fill="#4a3aa0">T</text></svg></i>
<i class="IC" style="left:695px;top:71px"><svg width="32" height="32" viewBox="0 0 32 32"><defs><linearGradient id="tube" x1="0" y1="0" x2="1" y2="1"><stop offset="0" stop-color="#d8f2f6"/><stop offset=".45" stop-color="#5cc0d2"/><stop offset="1" stop-color="#2a8aa0"/></linearGradient></defs><text x="0.500" y="10.200" font-family="Liberation Serif" font-weight="bold" font-size="12.500" fill="#3a3a3a">EI</text><path d="M5.500 14.500l18.500-13.500l3.500 4.500l-15.500 16.500z" fill="url(#tube)" stroke="#3a7f92" stroke-width=".6"/><circle cx="9.100" cy="18" r="5" fill="#fff" stroke="#8a8a8a" stroke-width=".8"/><circle cx="9.100" cy="18" r="3" fill="#28385e"/><circle cx="8.300" cy="17" r="1.100" fill="#7486b0"/><path d="M22.700 14.500v14M15.700 21.600h14" stroke="#3a2a82" stroke-width="3.600"/></svg></i>
<div class="rb" style="left:694px"><u>Ж</u>орсткості</div>

<div class="grp" style="left:739px;width:125px"><div class="lbl"><span style="font-size:11.5px">Навантаження</span></div></div>
<i class="IC" style="left:785px;top:70px"><svg width="32" height="32" viewBox="0 0 32 32"><path d="M16 .8v17" stroke="#2a1f80" stroke-width="3"/><path d="M12 14.500l4 7l4-7" stroke="#2a1f80" stroke-width="1.300" fill="#6a60b8"/><circle cx="16" cy="27.100" r="3.500" fill="#dcea9e" stroke="#6aae4a" stroke-width="1.100"/><circle cx="15.600" cy="26.600" r="1.600" fill="#eef6c0"/></svg></i>
<div class="rb" style="left:784px">Навантаження</div><b class="db" style="left:784px;top:107px"></b>
<i class="ic" style="left:837px;top:62px"><svg width="16" height="16" viewBox="0 0 16 16"><text x="5" y="15.500" font-family="Liberation Sans" font-size="11" fill="#5a5a5a" font-weight="bold">№</text><path d="M1 5l4.500-3.500v2h6v3h-6v2z" fill="#4aa82a" stroke="#2a7a1a" stroke-width=".5"/><path d="M2 14.500l1-3.500l9-9l2.500 2.500l-9 9z" fill="#f8c820" stroke="#a87a10" stroke-width=".6"/><path d="M12 2l1.200-1.200l2.500 2.500l-1.200 1.200z" fill="#f09090"/><path d="M2 14.500l1-3.500l2.500 2.500z" fill="#f4d8b0"/><path d="M2 14.500l.5-1.500l1 1z" fill="#333"/><path d="M4.500 12l8-8" stroke="#fff0a0" stroke-width=".7"/></svg></i>
<i class="ic" style="left:837px;top:84px"><svg width="16" height="16" viewBox="0 0 16 16"><path d="M5 1.500l4.500 8.500M12.500 1.500l-5 8.500" stroke="#8a8a8a" stroke-width="1.300"/><path d="M7 2l5-1l-3 6z" fill="#7a70c0" opacity=".8"/><ellipse cx="4.800" cy="12.800" rx="1.600" ry="2.600" transform="rotate(35 4.800 12.800)" fill="none" stroke="#2a9ad0" stroke-width="1.400"/><ellipse cx="12" cy="12.800" rx="1.600" ry="2.600" transform="rotate(-30 12 12.800)" fill="none" stroke="#2a9ad0" stroke-width="1.400"/><path d="M5.500 4.500l-2.500 1.200v-1l-2.500 2.200l3.500 1.300l-.3-1.200l2.800-1z" fill="#3a3aa0"/></svg></i><b class="db" style="left:854px;top:82px"></b>
<i class="ic" style="left:837px;top:106px"><svg width="16" height="16" viewBox="0 0 16 16"><path d="M1.500 1h6l2 2v8h-8z" fill="#f0f0fa" stroke="#3a2a90" stroke-width="1"/><path d="M6.500 5h6l2 2v8.500h-8z" fill="#f8f8ff" stroke="#3a2a90" stroke-width="1.100"/><path d="M10.500 7v5" stroke="#3a2a90" stroke-width="1.600"/><path d="M8 10.500l2.500 3.500l2.500-3.500z" fill="#3a2a90"/><path d="M4 3.500v4M2.500 6.500l1.500 2l1.500-2" stroke="#3a2a90" stroke-width="1" fill="none"/></svg></i>

<div class="grp" style="left:868px;width:181px"><div class="lbl"><span style="font-size:11.3px">Аналіз геометрії та властивостей</span></div></div>
<i class="ic" style="left:934px;top:62px"><svg width="16" height="16" viewBox="0 0 16 16"><rect x="1" y="3" width="3" height="4.00" fill="#a82c2c"/><rect x="1" y="7.00" width="3" height="4.00" fill="#f08030"/><rect x="1" y="11.00" width="3" height="4.00" fill="#ffe820"/><path d="M2 1l12 13" stroke="#1c4a68" stroke-width="1.700"/><text x="9" y="8.500" font-family="Liberation Serif" font-weight="bold" font-size="10" fill="#2a3a70">T</text></svg></i>
<i class="ic" style="left:934px;top:84px"><svg width="16" height="16" viewBox="0 0 16 16"><rect x="1" y="3" width="3" height="4.00" fill="#a82c2c"/><rect x="1" y="7.00" width="3" height="4.00" fill="#f08030"/><rect x="1" y="11.00" width="3" height="4.00" fill="#ffe820"/><text x="6" y="15" font-family="Liberation Serif" font-size="15.500" fill="#1a1a40" stroke="#1a1a40" stroke-width=".3">x</text><circle cx="9.800" cy="2.300" r="1.400" fill="#c8dc60" stroke="#2a6a2a" stroke-width=".9"/></svg></i><b class="db" style="left:952px;top:82px"></b>
<i class="ic" style="left:934px;top:106px"><svg width="16" height="16" viewBox="0 0 16 16"><rect x="1" y="4.5" width="3" height="3.83" fill="#a82c2c"/><rect x="1" y="8.33" width="3" height="3.83" fill="#f08030"/><rect x="1" y="12.17" width="3" height="3.83" fill="#ffe820"/><path d="M8.500 2v11" stroke="#2a2a80" stroke-width="1.100"/><path d="M12.500 1.500v12.500M10.500 1.500h2.500M10.500 14h2.500" stroke="#6a6a6a" stroke-width="1" fill="none"/><circle cx="8.500" cy="2" r="1.200" fill="#c8dc60" stroke="#2a7a2a" stroke-width=".7"/><circle cx="8.500" cy="13.500" r="1.200" fill="#c8dc60" stroke="#2a7a2a" stroke-width=".7"/></svg></i>
<i class="ic" style="left:970px;top:62px"><svg width="16" height="16" viewBox="0 0 16 16"><rect x="0.5" y="3" width="3.5" height="4.00" fill="#a82c2c"/><rect x="0.5" y="7.00" width="3.5" height="4.00" fill="#f08030"/><rect x="0.5" y="11.00" width="3.5" height="4.00" fill="#ffe820"/><path d="M5.500 6l2.500-3h7l-2 3z" fill="#b8d0e8" stroke="#4a6080" stroke-width=".6"/><rect x="5.500" y="6" width="7.500" height="5" fill="#5a80a8" stroke="#3a5070" stroke-width=".6"/><path d="M13 6l2-3v5l-2 3z" fill="#88a8c8"/><path d="M14.200 7v6M13 11.500l1.200 1.800l1.200-1.800" stroke="#555" stroke-width=".8" fill="none"/></svg></i><b class="db" style="left:987px;top:60px"></b>
<i class="ic" style="left:970px;top:84px"><svg width="16" height="16" viewBox="0 0 16 16"><rect x="0.5" y="3" width="3.5" height="4.00" fill="#a82c2c"/><rect x="0.5" y="7.00" width="3.5" height="4.00" fill="#f08030"/><rect x="0.5" y="11.00" width="3.5" height="4.00" fill="#ffe820"/><text x="5.500" y="14" font-family="Liberation Serif" font-size="14.500" fill="#2a2a50">V</text></svg></i><b class="db" style="left:987px;top:82px"></b>
<i class="ic" style="left:970px;top:106px"><svg width="16" height="16" viewBox="0 0 16 16"><rect x="0.5" y="1" width="2.8" height="3.67" fill="#a82c2c"/><rect x="0.5" y="4.67" width="2.8" height="3.67" fill="#f08030"/><rect x="0.5" y="8.33" width="2.8" height="3.67" fill="#ffe820"/><text x="5" y="7" font-family="Liberation Serif" font-size="8" fill="#6a6a6a">EI</text><path d="M6 12l7-7l1.500 1.500l-6 7z" fill="#a0d8e8" stroke="#5a9ab0" stroke-width=".5"/><circle cx="6.300" cy="12.500" r="2.300" fill="#e8e8e8" stroke="#8a8a8a" stroke-width=".6"/><circle cx="6.300" cy="12.500" r="1.200" fill="#28385e"/><path d="M12.500 10v5.500M9.800 12.800h5.500" stroke="#3a2a82" stroke-width="1.700"/></svg></i><b class="db" style="left:987px;top:105px"></b>

<div class="grp" style="left:1053px;width:163px"><div class="lbl"><span style="font-size:11.5px">Розрахунок</span></div></div>
<i class="IC" style="left:1084px;top:70px"><svg width="32" height="32" viewBox="0 0 32 32"><path d="M3.3000000000000003 8.3a2.1 2.1 0 0 1 4.2 0v13.1a4.0 4.0 0 1 1 -4.2 0z" fill="#f8f8f8" stroke="#7a7a7a" stroke-width=".9"/><circle cx="5.4" cy="24.2" r="2.5" fill="#b8281c"/><rect x="4.5" y="11.2" width="1.800" height="12.0" fill="#b8281c"/><path d="M7.7 10.2h1.600M7.7 12.7h1.600M7.7 15.2h1.600M7.7 17.7h1.600" stroke="#555" stroke-width=".7"/><text x="10.8" y="9.8" font-family="Liberation Sans" font-size="10.5" fill="#3c3c3c">C</text><rect x="7.6" y="1.61" width="2.600" height="2.600" fill="none" stroke="#3c3c3c" stroke-width=".9"/><path d="M11.500 11.500v16.500h15" stroke="#555" stroke-width="1" fill="none"/><path d="M12 28.700h15" stroke="#555" stroke-width="1" stroke-dasharray="1 1.200"/><path d="M12 12.500c2 2 3 8 5.500 8s3-7.500 5-7.500s1.200 3.500 2.500 3.500s1.300-2.800 2.400-2.800s1.200 2.800 2.600 4" stroke="#e8108a" stroke-width="1.500" fill="none"/><text x="27" y="29.500" font-family="Liberation Serif" font-weight="bold" font-size="13" fill="#2a2a2a">t</text></svg></i>
<div class="rb" style="left:1084px">Динаміка<br>у часі</div>
<i class="ic" style="left:1123px;top:62px"><svg width="16" height="16" viewBox="0 0 16 16"><text x="1" y="9.700" font-family="Liberation Serif" font-weight="bold" font-size="13" fill="#1c2340">t</text><ellipse cx="7" cy="1.300" rx="1.500" ry="1" fill="none" stroke="#7a7e90" stroke-width=".8"/><path d="M.3 .8l1.800 1.500" stroke="#c82030" stroke-width="1"/><path d="M5.800 7.300l2.400-2.600l1.300 2.800l2.300-4" stroke="#b83040" stroke-width="1.200" fill="none"/><path d="M14 2v10" stroke="#3a4aa8" stroke-width="1.700"/><path d="M11.300 10.800l2.700 4.400l2.700-4.400z" fill="#3a4aa8"/><path d="M10.800 15c-2.500 .8-5 .2-6.800-1.500" stroke="#e01828" stroke-width="1.600" fill="none"/><path d="M.8 13.300l4.200-2.600v4.800z" fill="#e01828"/></svg></i>
<i class="ic" style="left:1123px;top:84px"><svg width="16" height="16" viewBox="0 0 16 16"><path d="M1.200 .5h10.500v13.700h-10.500z" fill="#fbfbfb" stroke="#b4b4b4" stroke-width=".8"/><path d="M3.500 1.800h12.300v13.700h-12.300z" fill="#fdfdfd" stroke="#ababab" stroke-width=".9"/><path d="M3.500 4.500c2 0 2.800-1 2.800-2.700" fill="none" stroke="#8a8a8a" stroke-width=".8"/><path d="M7 4h7v9.500h-8.500v-7z" fill="#d4d0e6" opacity=".85"/></svg></i>
<div class="hl2 fonly" style="left:1112px;top:95px;width:26px;height:22px"></div>
<i class="ic" style="left:1123px;top:106px"><svg width="16" height="16" viewBox="0 0 16 16"><text x="-.3" y="12.600" font-family="Liberation Serif" font-size="15.500" fill="#c8181c" stroke="#c8181c" stroke-width=".35">Q</text><path d="M11.300 .7l3.200 2.800l-1.500 2v3" stroke="#6a3aa8" stroke-width="1.200" fill="none"/><path d="M10.700 8l2.300 3.200l2.300-3.200z" fill="#6a3aa8"/><circle cx="13" cy="13.800" r="2" fill="#1a2a1a"/><path d="M12.200 14.300l1.600-1.200" stroke="#9ad890" stroke-width=".9"/></svg></i>
<i class="IC" style="left:1175px;top:69px"><svg width="32" height="32" viewBox="0 0 32 32"><defs><linearGradient id="bolt" x1="0" y1="0" x2="1" y2="1"><stop offset="0" stop-color="#fffbd0"/><stop offset=".5" stop-color="#ffe81e"/><stop offset="1" stop-color="#f0b800"/></linearGradient></defs><path d="M19.400 3.900h8.900l-5.700 9.900h8.800l-14 17.200l4.100-13.600h-5.700z" fill="url(#bolt)" stroke="#d29e00" stroke-width=".9"/><path d="M4.500 9.500c0-2.600 4-2.600 4 0v8l2.500-1.300l2.500.6l2.300.3l3.200 1.600l.5 5.500l-3 7h-9.500l-4.500-7.500c-1.600-2.800.2-4 1.500-2.700l.5 .5z" fill="#dcb76c" stroke="#b48a38" stroke-width=".8"/><path d="M8.500 17.500v3M11 16.200v3.500M13.500 16.800v3" stroke="#b48a38" stroke-width=".7"/></svg></i>
<div class="rb" style="left:1175px">Виконати<br>розрахунок<b class="da" style="margin-left:1px"></b></div>

<div class="grp" style="left:1220px;width:210px"><div class="lbl"><span style="font-size:11.5px">Температура</span></div></div>
<i class="IC" style="left:1257px;top:70px"><svg width="32" height="32" viewBox="0 0 32 32"><path d="M4 4.800v22M4 4.800h11.500v10.800h-11.500" stroke="#17375e" stroke-width="1.600" fill="none"/><rect x="1.5" y="2.3" width="5" height="5" fill="#2a2a92"/><rect x="13.0" y="2.3" width="5" height="5" fill="#7c7cca"/><rect x="1.5" y="13.1" width="5" height="5" fill="#1a9262"/><rect x="13.0" y="13.1" width="5" height="5" fill="#92d2b2"/><path d="M18.599999999999998 11.7a2.1 2.1 0 0 1 4.2 0v11.600000000000003a4.2 4.2 0 1 1 -4.2 0z" fill="#f8f8f8" stroke="#7a7a7a" stroke-width=".9"/><circle cx="20.7" cy="26.3" r="2.7" fill="#b8281c"/><rect x="19.8" y="14.6" width="1.800" height="10.700000000000003" fill="#b8281c"/><path d="M23.0 13.6h1.600M23.0 16.1h1.600M23.0 18.6h1.600M23.0 21.1h1.600" stroke="#555" stroke-width=".7"/><text x="23.7" y="11.8" font-family="Liberation Sans" font-size="9.8" fill="#3c3c3c">C</text><rect x="20.5" y="4.16" width="2.600" height="2.600" fill="none" stroke="#3c3c3c" stroke-width=".9"/></svg></i>
<div class="rb" style="left:1257px">Мозаїка<br>температур</div>
<i class="IC" style="left:1324px;top:70px"><svg width="32" height="32" viewBox="0 0 32 32"><rect x="2.200" y="2.300" width="15" height="26.300" fill="#2a2a92"/><path d="M2.200 2.300h15v26.300h-4c0-6-8-9-11-14z" fill="#7078c0"/><path d="M9 2.300h8.200v15c-4-2-8-8-8.200-15z" fill="#28b8e8"/><rect x="14" y="10" width="4" height="19" fill="#d8dce4" opacity=".75"/><path d="M18.2 11.7a2.1 2.1 0 0 1 4.2 0v11.600000000000003a4.2 4.2 0 1 1 -4.2 0z" fill="#f8f8f8" stroke="#7a7a7a" stroke-width=".9"/><circle cx="20.3" cy="26.3" r="2.7" fill="#b8281c"/><rect x="19.400000000000002" y="14.6" width="1.800" height="10.700000000000003" fill="#b8281c"/><path d="M22.6 13.6h1.600M22.6 16.1h1.600M22.6 18.6h1.600M22.6 21.1h1.600" stroke="#555" stroke-width=".7"/><text x="23.4" y="11.8" font-family="Liberation Sans" font-size="9.8" fill="#3c3c3c">C</text><rect x="20.2" y="4.16" width="2.600" height="2.600" fill="none" stroke="#3c3c3c" stroke-width=".9"/></svg></i>
<div class="rb" style="left:1324px">Изополя<br>температур</div>
<div class="hl" style="left:1358px;top:52px;width:69px;height:65px"></div>
<i class="IC" style="left:1392px;top:70px"><svg width="32" height="32" viewBox="0 0 32 32"><path d="M4.200 3.900h24M4.200 3.900v20.300" stroke="#17375e" stroke-width="1.500" fill="none"/><rect x="1.2000000000000002" y="0.8999999999999999" width="6" height="6" fill="#a8c840"/><rect x="13.2" y="0.8999999999999999" width="6" height="6" fill="#2aa870"/><rect x="25.2" y="0.8999999999999999" width="6" height="6" fill="#20b8e8"/><rect x="1.2000000000000002" y="10.8" width="6" height="6" fill="#e86020"/><text x="8" y="25.200" font-family="Liberation Serif" font-weight="bold" font-size="19" fill="#c41a1a">Q</text><path d="M26 9.500c3 1.500 3 3.500 1.500 5s-1.500 3.500 -.5 5.500" stroke="#5838a8" stroke-width="1.200" fill="none"/><path d="M24.300 18.500l2.300 4l2.400-4z" fill="#5838a8"/><circle cx="26.400" cy="27.500" r="2.700" fill="#3c3c3c"/><circle cx="25.800" cy="26.800" r="1" fill="#c8e0c0"/></svg></i>
<div class="rb" style="left:1392px">Мозаїка<br>тепл.потоку</div>

<div class="grp" style="left:1434px;width:129px"><div class="lbl"><span style="font-size:11.5px">Інструменти</span></div></div>
<i class="ic" style="left:1449px;top:62px"><svg width="16" height="16" viewBox="0 0 16 16"><rect x="1" y="1" width="13" height="3" fill="#c82a2a"/><rect x="3.200" y="1.500" width="2.200" height="2" fill="#ff9020"/><rect x="5.400" y="1.500" width="2.200" height="2" fill="#ffe820"/><rect x="7.600" y="1.500" width="2.200" height="2" fill="#30c830"/><rect x="9.800" y="1.500" width="2.200" height="2" fill="#20a8f0"/><rect x="12" y="1.500" width="1.500" height="2" fill="#c040c0"/><rect x="1.500" y="1.500" width="1.700" height="2" fill="#e02020"/><path d="M1.500 6.500h8" stroke="#333" stroke-width="1.100" stroke-dasharray="1.200 1"/><path d="M10 6v8l2-1.800l1.500 3l1.200-.6l-1.500-3h2.500z" fill="#222"/></svg></i><b class="db" style="left:1466px;top:60px"></b>
<div class="hl" style="left:1438px;top:73px;width:25px;height:22px"></div>
<i class="ic" style="left:1450px;top:84px"><svg width="16" height="16" viewBox="0 0 16 16"><rect x="1" y="1" width="13" height="3" fill="#c82a2a"/><rect x="3.200" y="1.500" width="2.200" height="2" fill="#ff9020"/><rect x="5.400" y="1.500" width="2.200" height="2" fill="#ffe820"/><rect x="7.600" y="1.500" width="2.200" height="2" fill="#30c830"/><rect x="9.800" y="1.500" width="2.200" height="2" fill="#20a8f0"/><rect x="12" y="1.500" width="1.500" height="2" fill="#c040c0"/><rect x="1.500" y="1.500" width="1.700" height="2" fill="#e02020"/><path d="M3.300 11a4.300 4 0 0 1 7.500-3" stroke="#1a3a6a" stroke-width="1.500" fill="none"/><path d="M9.300 5.500l3.200 2.800l-4 1.200z" fill="#1a3a6a"/><path d="M12 10.500a4.300 4 0 0 1-7.500 3" stroke="#1a3a6a" stroke-width="1.500" fill="none"/><path d="M6 16l-3.200-2.800l4-1.200z" fill="#1a3a6a"/></svg></i>
<i class="ic" style="left:1449px;top:107px"><svg width="16" height="16" viewBox="0 0 16 16"><rect x="1" y="1" width="13" height="3" fill="#c82a2a"/><rect x="3.200" y="1.500" width="2.200" height="2" fill="#ff9020"/><rect x="5.400" y="1.500" width="2.200" height="2" fill="#ffe820"/><rect x="7.600" y="1.500" width="2.200" height="2" fill="#30c830"/><rect x="9.800" y="1.500" width="2.200" height="2" fill="#20a8f0"/><rect x="12" y="1.500" width="1.500" height="2" fill="#c040c0"/><rect x="1.500" y="1.500" width="1.700" height="2" fill="#e02020"/><circle cx="7" cy="9" r="4.300" fill="#d8ecf8" fill-opacity=".8" stroke="#e8e8e8" stroke-width="1.200"/><path d="M4.500 9.500a3 2.500 0 0 1 5-1.800M10 9a3 2.500 0 0 1-5 1.800" stroke="#1a4a7a" stroke-width="1.200" fill="none"/><path d="M8.800 6.500l1.800 1.800l-2.400.4zM5.500 12.200l-1.800-1.800l2.400-.4z" fill="#1a4a7a"/><path d="M10.500 12l4 3.500" stroke="#1a1a1a" stroke-width="2" stroke-linecap="round"/></svg></i>
<i class="ic" style="left:1484px;top:62px"><svg width="16" height="16" viewBox="0 0 16 16"><text x=".5" y="11" font-family="Liberation Sans" font-size="10.500" fill="#a0a4ac">1.2)</text><path d="M1 13.500c4 1 8 .5 11-1" stroke="#aeb2ba" stroke-width=".8" fill="none"/></svg></i><b class="db" style="left:1501px;top:60px"></b>
<i class="ic" style="left:1484px;top:84px"><svg width="16" height="16" viewBox="0 0 16 16"><path d="M1.500 2v12h12.500" stroke="#a82020" stroke-width="1.200" fill="none"/><path d="M1.500 2c1.500 6 5 7.500 12.500 7.500" stroke="#c83030" stroke-width="1" fill="none"/><path d="M3.5 6.2V14" stroke="#c83030" stroke-width=".9"/><path d="M5.5 7.8V14" stroke="#c83030" stroke-width=".9"/><path d="M7.5 8.6V14" stroke="#c83030" stroke-width=".9"/><path d="M9.5 9.1V14" stroke="#c83030" stroke-width=".9"/><path d="M11.5 9.4V14" stroke="#c83030" stroke-width=".9"/><path d="M13.5 9.5V14" stroke="#c83030" stroke-width=".9"/></svg></i><b class="db" style="left:1501px;top:82px"></b>
<i class="ic" style="left:1484px;top:107px"><svg width="16" height="16" viewBox="0 0 16 16"><rect x="1" y="1" width="6" height="6.500" fill="#e8b050"/><rect x="7" y="1" width="4.500" height="6.500" fill="#f4d090"/><rect x="1" y="7.500" width="6" height="7.500" fill="#a82828"/><rect x="7" y="7.500" width="4.500" height="7.500" fill="#d8a060"/><rect x="1" y="1" width="10.500" height="14" fill="none" stroke="#6a4a2a" stroke-width=".7"/><path d="M12 2v9" stroke="#2a2a8a" stroke-width="2"/><path d="M9.300 10l2.700 5l2.700-5z" fill="#3a3a9a" stroke="#1a1a6a" stroke-width=".5"/></svg></i>
<i class="ic" style="left:1519px;top:62px"><svg width="16" height="16" viewBox="0 0 16 16"><text transform="translate(8 12.500) scale(0.9 1)" text-anchor="middle" font-family="Liberation Sans" font-weight="bold" font-size="11.500" fill="#b82050">?!</text><path d="M3.300 2c-1.500 0-1.500 1-1.500 2.500s0 3-1.200 3.500c1.200 .5 1.200 2 1.200 3.500s0 2.500 1.500 2.500M12.700 2c1.500 0 1.500 1 1.500 2.500s0 3 1.200 3.500c-1.200 .5-1.200 2-1.200 3.500s0 2.500-1.500 2.500" stroke="#2a3a6a" stroke-width="1" fill="none"/></svg></i>
<i class="ic" style="left:1519px;top:84px"><svg width="16" height="16" viewBox="0 0 16 16"><circle cx="8" cy="9.500" r="5.500" fill="#f4f4f4" stroke="#c8c8c8" stroke-width="1.100"/><path d="M8 9.500l-2.500-3" stroke="#e08080" stroke-width="1"/><rect x="6.800" y="1" width="2.400" height="2.500" fill="#d8d8d8" stroke="#c0c0c0" stroke-width=".5"/><circle cx="8" cy="9.500" r="3.800" fill="none" stroke="#e4e4e4" stroke-width=".8"/></svg></i>
<i class="ic" style="left:1519px;top:107px"><svg width="16" height="16" viewBox="0 0 16 16"><circle cx="7" cy="9" r="6" fill="#d4d0c8" stroke="#c0bcb4" stroke-width=".8"/><rect x="5.9" y="4.5" width="2.200" height="2.200" fill="#a8c4d8"/><rect x="2.8" y="7.9" width="2.200" height="2.200" fill="#a8c4d8"/><rect x="9" y="7.9" width="2.200" height="2.200" fill="#a8c4d8"/><rect x="5.9" y="7.9" width="2.200" height="2.200" fill="#a8c4d8"/><rect x="5.9" y="11.3" width="2.200" height="2.200" fill="#a8c4d8"/><path d="M12 4c1 2 1.500 3 2 1.500s.8 1.500 1.200 4" stroke="#f070b0" stroke-width=".9" fill="none"/><path d="M9 14.500c2 .5 4 0 5.500-1.500" stroke="#c8c4bc" stroke-width="1" fill="none"/></svg></i>
<i class="ic" style="left:1544px;top:62px"><svg width="16" height="16" viewBox="0 0 16 16"><path d="M5 .5v8M1.500 2.500l7 4M8.500 2.500l-7 4" stroke="#c81828" stroke-width="1.500"/><path d="M3.500 .8l1.500 1.500l1.500-1.500M3.500 8.200l1.500-1.500l1.500 1.500" stroke="#c81828" stroke-width=".9" fill="none"/><text x="7.500" y="15" font-family="Liberation Sans" font-size="9.500" fill="#2a2a3a">tc</text><circle cx="11" cy="7" r=".6" fill="#c81828"/></svg></i>
<div class="hl2 fonly" style="left:1532px;top:73px;width:25px;height:22px"></div>
<i class="ic" style="left:1544px;top:84px"><svg width="16" height="16" viewBox="0 0 16 16"><text x="-.3" y="12.800" font-family="Liberation Serif" font-weight="bold" font-size="16" fill="#1a1a3a">Σ</text><path d="M11.300 .5l3.200 2.800l-1.500 2v3" stroke="#6a3aa8" stroke-width="1.200" fill="none"/><path d="M10.700 7.800l2.300 3.200l2.300-3.200z" fill="#6a3aa8"/><circle cx="13" cy="13.800" r="1.900" fill="#2a4a1a"/><path d="M12.300 14.300l1.500-1.100" stroke="#a8e090" stroke-width=".9"/></svg></i>
<i class="ic" style="left:1544px;top:107px"><svg width="16" height="16" viewBox="0 0 16 16"><rect x="6" y="1" width="9" height="7" fill="#eef2f8" stroke="#8a98b0" stroke-width=".8"/><rect x="6" y="1" width="9" height="1.800" fill="#a8a0d8"/><rect x="1" y="8" width="9" height="7" fill="#eef2f8" stroke="#8a98b0" stroke-width=".8"/><rect x="1" y="8" width="9" height="1.800" fill="#a8a0d8"/><path d="M2 7c0-3 2-4.500 4-4.500" stroke="#2a5a7a" stroke-width="1.300" fill="none"/><path d="M5.500 1l2 1.500l-2 1.500z" fill="#2a5a7a"/><path d="M14 9c0 3-2 4.500-3.500 4.500" stroke="#2a5a7a" stroke-width="1.300" fill="none"/><path d="M11 12l-2 1.500l2 1.500z" fill="#2a5a7a"/></svg></i>

<div class="grp" style="left:1567px;width:62px"><div class="lbl"><span style="font-size:11.5px">Таблиці</span></div></div>
<i class="IC" style="left:1595px;top:70px"><svg width="32" height="32" viewBox="0 0 32 32"><path d="M9.5 2h19.300v23.400h-19.300z" fill="#f4f4f6" stroke="#6a6090" stroke-width="1"/><path d="M7.5 4h19.300v23.400h-19.300z" fill="#f4f4f6" stroke="#6a6090" stroke-width="1"/><path d="M5.5 6h19.300v23.400h-19.300z" fill="#f4f4f6" stroke="#6a6090" stroke-width="1"/><rect x="7" y="8" width="16.300" height="3" fill="#3da04a"/><rect x="7" y="8" width="16.300" height="1.200" fill="#8ed08e"/><path d="M7.500 13.5h15" stroke="#9a9aac" stroke-width="1"/><path d="M7.500 16h11" stroke="#9a9aac" stroke-width="1"/><path d="M7.500 18.5h13" stroke="#9a9aac" stroke-width="1"/><path d="M7.500 21h9" stroke="#9a9aac" stroke-width="1"/><path d="M7.500 23.5h12" stroke="#9a9aac" stroke-width="1"/><path d="M7.500 26h8" stroke="#9a9aac" stroke-width="1"/><path d="M18 14l6.500 0v15h-10z" fill="#fff" opacity=".45"/></svg></i>
<div class="rb" style="left:1598px">Докумен-<br>тація<b class="da"></b></div>

<!-- ================= MENU BAR ================= -->
<div id="menubar">
<svg style="left:4px;top:6px" width="4" height="19" viewBox="0 0 4 19"><path d="M1 1h2M1 4h2M1 7h2M1 10h2M1 13h2M1 16h2" stroke="#f4f4f4" stroke-width="1.6" stroke-dasharray="1.4 .6"/></svg>
<span style="left:17px;font-size:11.5px">Файл</span>
<span style="left:58px;font-size:11.5px">Режим</span>
<span style="left:109px;font-size:11.5px">Вид</span>
<span style="left:143px;font-size:11.5px">Вибір</span>
<span style="left:188px;font-size:11.5px">Схема</span>
<span style="left:235px;font-size:11.5px">Створення</span>
<span style="left:311px;font-size:11.5px">Редагування</span>
<span style="left:392px;font-size:11.5px">Жорсткості</span>
<span style="left:468px;font-size:11.5px">Навантаження</span>
<span style="left:562px;font-size:11.5px">Результати</span>
<span style="left:634px;font-size:11.5px">Опції</span>
<span style="left:678px;font-size:11.5px">Вікно</span>
<span style="left:722px;font-size:11.5px">?</span>
</div>
<!-- ================= WORK AREA ================= -->
<div class="abs" style="left:0;top:165px;width:1920px;height:742px;background:#fff"></div>
<div class="abs" style="left:0;top:165px;width:1920px;height:1px;background:#a8abb0"></div>
<div class="abs" style="left:0;top:165px;width:1px;height:738px;background:#aaa"></div>
<!-- left tab strip -->
<div class="strip" style="left:1px;width:974px"></div>
<svg style="left:1px;top:166px" width="145" height="24" viewBox="0 0 145 24"><path d="M0.5 23.5L22.5 1.5H141.5V23.5z" fill="#fff"/><path d="M0.5 23.5L22.5 1.5H141.5" stroke="#6f6f6f" stroke-width="1" fill="none"/><path d="M142 2V23" stroke="#c9ccd2" stroke-width="1"/></svg>
<i class="ic" style="left:36px;top:178px"><svg width="16" height="16" viewBox="0 0 16 16"><path d="M2.800 .5h9l3 3v5" stroke="#b4c0cc" stroke-width=".9" fill="none"/><path d="M1.200 2.800c1.500 .3 1.800 1.500 1.300 3.500c-1 4-.8 6 .5 7.500c1 1 3 1 5.500 .8" stroke="#17588a" stroke-width="1.800" fill="none"/><path d="M1 3h11.500" stroke="#17588a" stroke-width="1.300"/><path d="M4.200 1.500v12M5.900 1.500v12M7.600 1.500v8M9.200 1.500v5" stroke="#2a6a98" stroke-width=".9"/><path d="M12.300 2.800c-1.800 .5-1.800 2-1 5" stroke="#17588a" stroke-width="1.500" fill="none"/><text transform="translate(8.200 14.600) scale(0.85 1)" font-family="Liberation Sans" font-weight="bold" font-size="7.200" fill="#d05262">21</text></svg></i>
<div class="t" style="left:54px;top:173px;font-size:11.5px">test10_12.lir</div>
<svg style="left:127px;top:173px" width="10" height="10" viewBox="0 0 10 10"><path d="M1 1l8 8M9 1l-8 8" stroke="#222" stroke-width="1.3"/></svg>
<svg style="left:956px;top:175px" width="10" height="6" viewBox="0 0 10 6"><path d="M0 0h9l-4.5 5z" fill="#505050"/></svg>
<!-- splitter -->
<div class="abs" style="left:974px;top:165px;width:6px;height:738px;background:#ececec;border-left:1px solid #ababab;border-right:1px solid #ababab"></div>
<!-- right tab strip -->
<div class="strip" style="left:979px;width:940px"></div>
<svg style="left:979px;top:166px" width="145" height="24" viewBox="0 0 145 24"><path d="M0.5 23.5L22.5 1.5H141.5V23.5z" fill="#fff"/><path d="M0.5 23.5L22.5 1.5H141.5" stroke="#6f6f6f" stroke-width="1" fill="none"/><path d="M142 2V23" stroke="#c9ccd2" stroke-width="1"/></svg>
<i class="ic" style="left:1015px;top:178px"><svg width="16" height="16" viewBox="0 0 16 16"><path d="M2.800 .5h9l3 3v5" stroke="#b4c0cc" stroke-width=".9" fill="none"/><path d="M1.200 2.800c1.500 .3 1.800 1.500 1.300 3.500c-1 4-.8 6 .5 7.500c1 1 3 1 5.500 .8" stroke="#17588a" stroke-width="1.800" fill="none"/><path d="M1 3h11.500" stroke="#17588a" stroke-width="1.300"/><path d="M4.200 1.500v12M5.900 1.500v12M7.600 1.500v8M9.200 1.500v5" stroke="#2a6a98" stroke-width=".9"/><path d="M12.300 2.800c-1.800 .5-1.800 2-1 5" stroke="#17588a" stroke-width="1.500" fill="none"/><text transform="translate(8.200 14.600) scale(0.85 1)" font-family="Liberation Sans" font-weight="bold" font-size="7.200" fill="#d05262">21</text></svg></i>
<div class="t" style="left:1033px;top:173px;font-size:11.5px">test10_12.lir</div>
<svg style="left:1105px;top:173px" width="10" height="10" viewBox="0 0 10 10"><path d="M1 1l8 8M9 1l-8 8" stroke="#222" stroke-width="1.3"/></svg>
<svg style="left:1903px;top:175px" width="10" height="6" viewBox="0 0 10 6"><path d="M0 0h9l-4.5 5z" fill="#505050"/></svg>
<!-- viewport frames -->
<div class="abs" id="vpL" style="left:3px;top:190px;width:970px;height:709px;border:2px solid #747474;border-right:1px solid #dedede;border-bottom:1px solid #e2e2e2;background:#fff;overflow:hidden">
<svg style="left:-5px;top:-192px" width="975" height="905" viewBox="0 0 975 905" shape-rendering="crispEdges"><path fill="#ffff00" stroke="#0b7a0b" stroke-width="1" stroke-linejoin="round" d="M542.1 598.6L611.9 567.9L594.3 521.5L521.4 544.1zM521.4 544.1L594.3 521.5L583.3 473.7L508.5 487.9zM611.9 567.9L679 534.3L666.2 500.6L594.3 521.5zM594.3 521.5L666.2 500.6L658.2 465.8L583.3 473.7zM569.3 648L635 609.9L611.9 567.9L542.1 598.6zM635 609.9L695.8 564.8L679 534.3L611.9 567.9zM508.5 487.9L583.3 473.7L579.6 427.5L504.1 433.5zM583.3 473.7L658.2 465.8L655.5 432.2L579.6 427.5zM476.5 623.4L542.1 598.6L521.4 544.1L454.7 566zM454.7 566L521.4 544.1L508.5 487.9L441.1 506.9zM662.1 645L715.5 590.3L695.8 564.8L635 609.9zM601.2 689.2L662.1 645L635 609.9L569.3 648zM505.1 675.3L569.3 648L542.1 598.6L476.5 623.4zM679 534.3L736.8 501L730.1 483.3L666.2 500.6zM666.2 500.6L730.1 483.3L725.9 465L658.2 465.8zM695.8 564.8L745.7 517.1L736.8 501L679 534.3zM579.6 427.5L655.5 432.2L658.3 401.9L583.4 385.7zM441.1 506.9L508.5 487.9L504.1 433.5L436.5 449.8zM658.2 465.8L725.9 465L724.5 447.4L655.5 432.2zM504.1 433.5L579.6 427.5L583.4 385.7L508.6 384.4zM715.5 590.3L756 530.5L745.7 517.1L695.8 564.8zM691.6 670.9L736.9 609.1L715.5 590.3L662.1 645zM538.6 718.7L601.2 689.2L569.3 648L505.1 675.3zM655.5 432.2L724.5 447.4L725.9 431.4L658.3 401.9zM635.8 719.7L691.6 670.9L662.1 645L601.2 689.2zM736.9 609.1L767.3 540.3L756 530.5L715.5 590.3zM421.4 639.8L476.5 623.4L454.7 566L400.7 585.3zM583.4 385.7L658.3 401.9L666.3 376.7L594.4 351.1zM400.7 585.3L454.7 566L441.1 506.9L387.8 529zM436.5 449.8L504.1 433.5L508.6 384.4L441.2 398.2zM658.3 401.9L725.9 431.4L730.2 418.2L666.3 376.7zM736.8 501L779.8 471.4L730.1 483.3zM448.6 689.2L505.1 675.3L476.5 623.4L421.4 639.8zM730.1 483.3L779.8 471.4L725.9 465zM745.7 517.1L779.8 471.4L736.8 501zM725.9 465L779.8 471.4L724.5 447.4zM508.6 384.4L583.4 385.7L594.4 351.1L521.6 343.7zM756 530.5L779.8 471.4L745.7 517.1zM721.6 686L758.7 620L736.9 609.1L691.6 670.9zM758.7 620L778.7 546.1L767.3 540.3L736.9 609.1zM724.5 447.4L779.8 471.4L725.9 431.4zM387.8 529L441.1 506.9L436.5 449.8L383.4 474.7zM575 750.7L635.8 719.7L601.2 689.2L538.6 718.7zM767.3 540.3L779.8 471.4L756 530.5zM725.9 431.4L779.8 471.4L730.2 418.2zM666.3 376.7L730.2 418.2L736.9 408.5L679.1 358.3zM480.5 730.4L538.6 718.7L505.1 675.3L448.6 689.2zM778.7 546.1L779.8 471.4L767.3 540.3zM671 737.4L721.6 686L691.6 670.9L635.8 719.7zM594.4 351.1L666.3 376.7L679.1 358.3L612.1 325.7zM730.2 418.2L779.8 471.4L736.9 408.5zM779.4 622.4L789.6 547.4L778.7 546.1L758.7 620zM789.6 547.4L779.8 471.4L778.7 546.1zM441.2 398.2L508.6 384.4L521.6 343.7L454.9 355.4zM383.4 474.7L436.5 449.8L441.2 398.2L387.9 425.6zM736.9 408.5L779.8 471.4L745.8 403zM750.1 689.3L779.4 622.4L758.7 620L721.6 686zM799.3 544.1L779.8 471.4L789.6 547.4zM679.1 358.3L736.9 408.5L745.8 403L696 347.8zM521.6 343.7L594.4 351.1L612.1 325.7L542.4 313.9zM745.8 403L779.8 471.4L756.1 401.9zM382.4 646.2L421.4 639.8L400.7 585.3L364.7 599.8zM364.7 599.8L400.7 585.3L387.8 529L353.7 552zM807.2 536.4L779.8 471.4L799.3 544.1zM612 769.3L671 737.4L635.8 719.7L575 750.7zM515.1 760.9L575 750.7L538.6 718.7L480.5 730.4zM797.8 616.2L799.3 544.1L789.6 547.4L779.4 622.4zM756.1 401.9L779.8 471.4L767.4 405.5zM405.5 688.3L448.6 689.2L421.4 639.8L382.4 646.2zM612.1 325.7L679.1 358.3L696 347.8L635.3 311.2zM812.7 524.8L779.8 471.4L807.2 536.4zM696 347.8L745.8 403L756.1 401.9L715.7 345.8zM704.6 741.3L750.1 689.3L721.6 686L671 737.4zM353.7 552L387.8 529L383.4 474.7L350 505.8zM767.4 405.5L779.8 471.4L778.8 413.4zM815.6 510.1L779.8 471.4L812.7 524.8zM387.9 425.6L441.2 398.2L454.9 355.4L400.9 384.9zM778.8 413.4L779.8 471.4L789.7 425.1zM454.9 355.4L521.6 343.7L542.4 313.9L476.8 324zM812.8 601.6L807.2 536.4L799.3 544.1L797.8 616.2zM432.6 723.3L480.5 730.4L448.6 689.2L405.5 688.3zM775.5 680.6L797.8 616.2L779.4 622.4L750.1 689.3zM815.6 493.2L779.8 471.4L815.6 510.1zM789.7 425.1L779.8 471.4L799.4 439.9zM812.7 475.1L779.8 471.4L815.6 493.2zM799.4 439.9L779.8 471.4L807.2 457zM807.2 457L779.8 471.4L812.7 475.1zM715.7 345.8L756.1 401.9L767.4 405.5L737.1 352.6zM542.4 313.9L612.1 325.7L635.3 311.2L569.6 296.9zM350 505.8L383.4 474.7L387.9 425.6L353.8 464.1zM550.4 778.6L612 769.3L575 750.7L515.1 760.9zM635.3 311.2L696 347.8L715.7 345.8L662.4 308.6zM823.3 579.6L812.7 524.8L807.2 536.4L812.8 601.6zM647.3 773.4L704.6 741.3L671 737.4L612 769.3zM462.1 749.2L515.1 760.9L480.5 730.4L432.6 723.3zM737.1 352.6L767.4 405.5L778.8 413.4L758.9 367.6zM734.4 731.1L775.5 680.6L750.1 689.3L704.6 741.3zM796 660.5L812.8 601.6L797.8 616.2L775.5 680.6zM828.8 551.6L815.6 510.1L812.7 524.8L823.3 579.6zM400.9 384.9L454.9 355.4L476.8 324L421.7 355.1zM363 642.1L382.4 646.2L364.7 599.8L350.3 608.4zM350.3 608.4L364.7 599.8L353.7 552L342.3 573.7zM353.8 464.1L387.9 425.6L400.9 384.9L364.9 429.4zM758.9 367.6L778.8 413.4L789.7 425.1L779.6 389.9zM476.8 324L542.4 313.9L569.6 296.9L505.4 306.1zM379.8 672.6L405.5 688.3L382.4 646.2L363 642.1zM662.4 308.6L715.7 345.8L737.1 352.6L691.9 317.8zM828.8 519.4L815.6 493.2L815.6 510.1L828.8 551.6zM342.3 573.7L353.7 552L350 505.8L339.5 540.1zM569.6 296.9L635.3 311.2L662.4 308.6L601.5 293.7zM779.6 389.9L789.7 425.1L799.4 439.9L798 418.1zM583.9 782.5L647.3 773.4L612 769.3L550.4 778.6zM823.4 485L812.7 475.1L815.6 493.2L828.8 519.4zM399.5 698.1L432.6 723.3L405.5 688.3L379.8 672.6zM492 764.3L550.4 778.6L515.1 760.9L462.1 749.2zM798 418.1L799.4 439.9L807.2 457L812.9 450.5zM812.9 450.5L807.2 457L812.7 475.1L823.4 485zM810.5 630.3L823.3 579.6L812.8 601.6L796 660.5zM678.7 762.7L734.4 731.1L704.6 741.3L647.3 773.4zM339.5 540.1L350 505.8L353.8 464.1L342.3 509.7zM758.6 707.5L796 660.5L775.5 680.6L734.4 731.1zM691.9 317.8L737.1 352.6L758.9 367.6L721.9 338.5zM364.9 429.4L400.9 384.9L421.7 355.1L382.6 404.1zM421 716.9L462.1 749.2L432.6 723.3L399.5 698.1zM421.7 355.1L476.8 324L505.4 306.1L448.9 338.1z"/><path fill="#ffff00" stroke="#0b7a0b" stroke-width="1" stroke-linejoin="round" d="M505.4 306.1L569.6 296.9L601.5 293.7L538.9 302.8zM818 591.8L828.8 551.6L823.3 579.6L810.5 630.3zM601.5 293.7L662.4 308.6L691.9 317.8L636.2 304.6zM342.3 509.7L353.8 464.1L364.9 429.4L350.4 484.6zM520.6 767.6L583.9 782.5L550.4 778.6L492 764.3zM721.9 338.5L758.9 367.6L779.6 389.9L750.4 369.2zM613.7 772.3L678.7 762.7L647.3 773.4L583.9 782.5zM442.7 727.9L492 764.3L462.1 749.2L421 716.9zM365.4 627.8L363 642.1L350.3 608.4L358.7 610zM358.7 610L350.3 608.4L342.3 573.7L354.5 591.8zM775.6 672L810.5 630.3L796 660.5L758.6 707.5zM818.1 547.5L828.8 519.4L828.8 551.6L818 591.8zM374.2 643.8L379.8 672.6L363 642.1L365.4 627.8zM704.1 737.9L758.6 707.5L734.4 731.1L678.7 762.7zM354.5 591.8L342.3 573.7L339.5 540.1L353.1 574.1zM382.6 404.1L421.7 355.1L448.9 338.1L405.7 389.6zM750.4 369.2L779.6 389.9L798 418.1L775.7 408zM384.6 657.2L399.5 698.1L379.8 672.6L374.2 643.8zM350.4 484.6L364.9 429.4L382.6 404.1L363.2 466.1zM810.6 500.1L823.4 485L828.8 519.4L818.1 547.5zM448.9 338.1L505.4 306.1L538.9 302.8L480.8 334.9zM353.1 574.1L339.5 540.1L342.3 509.7L354.5 558.2zM636.2 304.6L691.9 317.8L721.9 338.5L671.4 328.9zM775.7 408L798 418.1L812.9 450.5L796.2 452.6zM796.2 452.6L812.9 450.5L823.4 485L810.6 500.1zM538.9 302.8L601.5 293.7L636.2 304.6L575.4 314.3zM395.9 667.1L421 716.9L399.5 698.1L384.6 657.2zM463.5 730.3L520.6 767.6L492 764.3L442.7 727.9zM545.9 758.9L613.7 772.3L583.9 782.5L520.6 767.6zM354.5 558.2L342.3 509.7L350.4 484.6L358.7 544.9zM784.4 626.7L818 591.8L810.5 630.3L775.6 672zM637.9 748.7L704.1 737.9L678.7 762.7L613.7 772.3zM407.3 672.9L442.7 727.9L421 716.9L395.9 667.1zM363.2 466.1L382.6 404.1L405.7 389.6L380 455.6zM722 700.5L775.6 672L758.6 707.5L704.1 737.9zM671.4 328.9L721.9 338.5L750.4 369.2L704.9 365zM405.7 389.6L448.9 338.1L480.8 334.9L432.9 386.9zM358.7 544.9L350.4 484.6L363.2 466.1L365.5 535.3zM481.9 724L545.9 758.9L520.6 767.6L463.5 730.3zM784.5 574.6L818.1 547.5L818 591.8L784.4 626.7zM418.2 674.1L463.5 730.3L442.7 727.9L407.3 672.9zM480.8 334.9L538.9 302.8L575.4 314.3L515.5 345.8zM575.4 314.3L636.2 304.6L671.4 328.9L612.4 339.8zM704.9 365L750.4 369.2L775.7 408L734.7 410.7zM566.5 738.9L637.9 748.7L613.7 772.3L545.9 758.9zM365.5 535.3L363.2 466.1L380 455.6L374.3 529.7zM380 455.6L405.7 389.6L432.9 386.9L399.8 453.7zM775.8 518.9L810.6 500.1L818.1 547.5L784.5 574.6zM427.9 670.8L481.9 724L463.5 730.3L418.2 674.1zM731.3 652.9L784.4 626.7L775.6 672L722 700.5zM654.9 713.1L722 700.5L704.1 737.9L637.9 748.7zM734.7 410.7L775.7 408L796.2 452.6L758.8 463.1zM758.8 463.1L796.2 452.6L810.6 500.1L775.8 518.9zM432.9 386.9L480.8 334.9L515.5 345.8L462.4 396.2zM374.3 529.7L380 455.6L399.8 453.7L384.7 528.7zM496.8 709.4L566.5 738.9L545.9 758.9L481.9 724zM612.4 339.8L671.4 328.9L704.9 365L647.7 377.7zM515.5 345.8L575.4 314.3L612.4 339.8L550.7 370.1zM435.8 663.1L496.8 709.4L481.9 724L427.9 670.8zM399.8 453.7L432.9 386.9L462.4 396.2L421.2 460.4zM581 708.6L654.9 713.1L637.9 748.7L566.5 738.9zM731.3 598.1L784.5 574.6L784.4 626.7L731.3 652.9zM384.7 528.7L399.8 453.7L421.2 460.4L396 532.2zM663.8 667.9L731.3 652.9L722 700.5L654.9 713.1zM647.7 377.7L704.9 365L734.7 410.7L679 425.8zM441.3 651.6L507.4 687.4L496.8 709.4L435.8 663.1zM507.4 687.4L581 708.6L566.5 738.9L496.8 709.4zM462.4 396.2L515.5 345.8L550.7 370.1L492.3 416.8zM722.2 539.5L775.8 518.9L784.5 574.6L731.3 598.1zM396 532.2L421.2 460.4L442.9 475.4L407.4 540.1zM550.7 370.1L612.4 339.8L647.7 377.7L584.2 406.2zM679 425.8L734.7 410.7L758.8 463.1L704.3 480.9zM421.2 460.4L462.4 396.2L492.3 416.8L442.9 475.4zM704.3 480.9L758.8 463.1L775.8 518.9L722.2 539.5zM444.2 636.9L512.8 659.5L507.4 687.4L441.3 651.6zM588.5 670.1L663.8 667.9L654.9 713.1L581 708.6zM407.4 540.1L442.9 475.4L463.7 497.7L418.3 551.9zM663.8 615.8L731.3 598.1L731.3 652.9L663.8 667.9zM512.8 659.5L588.5 670.1L581 708.6L507.4 687.4zM444.2 620L512.8 627.2L512.8 659.5L444.2 636.9zM492.3 416.8L550.7 370.1L584.2 406.2L520.8 447.5zM418.3 551.9L463.7 497.7L482.1 525.9L428 566.7zM584.2 406.2L647.7 377.7L679 425.8L614 451.9zM442.9 475.4L492.3 416.8L520.8 447.5L463.7 497.7zM441.3 601.9L507.4 592.8L512.8 627.2L444.2 620zM428 566.7L482.1 525.9L497 558.3L435.8 583.7zM435.8 583.7L497 558.3L507.4 592.8L441.3 601.9zM655.1 560L722.2 539.5L731.3 598.1L663.8 615.8zM588.5 625.8L663.8 615.8L663.8 667.9L588.5 670.1zM512.8 627.2L588.5 625.8L588.5 670.1L512.8 659.5zM614 451.9L679 425.8L704.3 480.9L638.1 504.2zM638.1 504.2L704.3 480.9L722.2 539.5L655.1 560zM463.7 497.7L520.8 447.5L546.2 486.4L482.1 525.9zM520.8 447.5L584.2 406.2L614 451.9L546.2 486.4zM507.4 592.8L581.1 578.4L588.5 625.8L512.8 627.2zM581.1 578.4L655.1 560L663.8 615.8L588.5 625.8zM482.1 525.9L546.2 486.4L566.7 530.9L497 558.3zM497 558.3L566.7 530.9L581.1 578.4L507.4 592.8zM546.2 486.4L614 451.9L638.1 504.2L566.7 530.9zM566.7 530.9L638.1 504.2L655.1 560L581.1 578.4z"/><path fill="#00ff00" stroke="#0b7a0b" stroke-width="1" stroke-linejoin="round" d="M389.2 604.6L365.4 627.8L358.7 610zM389.2 604.6L358.7 610L354.5 591.8zM389.2 604.6L374.2 643.8L365.4 627.8zM389.2 604.6L354.5 591.8L353.1 574.1zM389.2 604.6L384.6 657.2L374.2 643.8zM389.2 604.6L353.1 574.1L354.5 558.2zM389.2 604.6L395.9 667.1L384.6 657.2zM389.2 604.6L354.5 558.2L358.7 544.9zM389.2 604.6L407.3 672.9L395.9 667.1zM389.2 604.6L358.7 544.9L365.5 535.3zM389.2 604.6L418.2 674.1L407.3 672.9zM389.2 604.6L365.5 535.3L374.3 529.7zM389.2 604.6L427.9 670.8L418.2 674.1zM389.2 604.6L374.3 529.7L384.7 528.7zM389.2 604.6L435.8 663.1L427.9 670.8zM389.2 604.6L384.7 528.7L396 532.2zM389.2 604.6L441.3 651.6L435.8 663.1zM389.2 604.6L396 532.2L407.4 540.1zM389.2 604.6L444.2 636.9L441.3 651.6zM389.2 604.6L407.4 540.1L418.3 551.9zM389.2 604.6L444.2 620L444.2 636.9zM389.2 604.6L418.3 551.9L428 566.7zM389.2 604.6L441.3 601.9L444.2 620zM389.2 604.6L428 566.7L435.8 583.7zM389.2 604.6L435.8 583.7L441.3 601.9z"/><path fill="#ff0000" d="M387 602h5v5h-5zM372 527h5v5h-5zM382 526h5v5h-5zM393 530h5v5h-5zM405 538h5v5h-5zM416 549h5v5h-5zM425 564h5v5h-5zM433 581h5v5h-5zM439 599h5v5h-5zM442 617h5v5h-5zM442 634h5v5h-5zM439 649h5v5h-5zM433 661h5v5h-5zM425 668h5v5h-5zM416 672h5v5h-5zM405 670h5v5h-5zM393 665h5v5h-5zM382 655h5v5h-5zM372 641h5v5h-5zM363 625h5v5h-5zM356 608h5v5h-5zM352 589h5v5h-5zM351 572h5v5h-5zM352 556h5v5h-5zM356 542h5v5h-5zM363 533h5v5h-5zM378 453h5v5h-5zM397 451h5v5h-5zM419 458h5v5h-5zM440 473h5v5h-5zM461 495h5v5h-5zM480 523h5v5h-5zM494 556h5v5h-5zM505 590h5v5h-5zM510 625h5v5h-5zM510 657h5v5h-5zM505 685h5v5h-5zM494 707h5v5h-5zM479 721h5v5h-5zM461 728h5v5h-5zM440 725h5v5h-5zM418 714h5v5h-5zM397 696h5v5h-5zM378 672h5v5h-5zM362 641h5v5h-5zM349 607h5v5h-5zM341 573h5v5h-5zM337 538h5v5h-5zM340 507h5v5h-5zM348 482h5v5h-5zM361 464h5v5h-5zM403 387h5v5h-5zM430 384h5v5h-5zM460 394h5v5h-5zM490 414h5v5h-5zM518 445h5v5h-5zM544 484h5v5h-5zM564 528h5v5h-5zM579 576h5v5h-5zM586 623h5v5h-5zM586 668h5v5h-5zM578 706h5v5h-5zM564 736h5v5h-5zM543 756h5v5h-5zM518 765h5v5h-5zM490 762h5v5h-5zM461 748h5v5h-5zM431 722h5v5h-5zM404 687h5v5h-5zM381 645h5v5h-5zM363 599h5v5h-5zM352 551h5v5h-5zM349 505h5v5h-5zM352 463h5v5h-5zM363 428h5v5h-5zM380 402h5v5h-5zM446 336h5v5h-5zM478 332h5v5h-5zM513 343h5v5h-5zM548 368h5v5h-5zM582 404h5v5h-5zM612 449h5v5h-5zM636 502h5v5h-5zM653 558h5v5h-5zM661 613h5v5h-5zM661 665h5v5h-5zM652 711h5v5h-5zM635 746h5v5h-5zM611 770h5v5h-5zM581 780h5v5h-5zM549 778h5v5h-5zM514 760h5v5h-5zM479 729h5v5h-5zM447 688h5v5h-5zM420 639h5v5h-5zM399 584h5v5h-5zM386 528h5v5h-5zM382 474h5v5h-5zM386 425h5v5h-5zM399 384h5v5h-5zM420 354h5v5h-5zM503 304h5v5h-5zM536 300h5v5h-5zM573 312h5v5h-5zM610 337h5v5h-5zM645 375h5v5h-5zM676 423h5v5h-5zM702 478h5v5h-5zM720 537h5v5h-5zM729 596h5v5h-5zM729 650h5v5h-5zM720 698h5v5h-5zM702 735h5v5h-5zM676 760h5v5h-5zM646 772h5v5h-5zM611 768h5v5h-5zM574 750h5v5h-5zM537 718h5v5h-5zM504 674h5v5h-5zM475 622h5v5h-5zM453 565h5v5h-5zM440 506h5v5h-5zM435 449h5v5h-5zM440 397h5v5h-5zM453 354h5v5h-5zM475 323h5v5h-5zM568 296h5v5h-5zM599 291h5v5h-5zM634 302h5v5h-5zM669 326h5v5h-5zM702 362h5v5h-5zM732 408h5v5h-5zM756 461h5v5h-5zM773 516h5v5h-5zM782 572h5v5h-5zM782 624h5v5h-5zM773 669h5v5h-5zM756 705h5v5h-5zM733 730h5v5h-5zM703 740h5v5h-5zM670 736h5v5h-5zM634 719h5v5h-5zM600 688h5v5h-5zM568 647h5v5h-5zM541 598h5v5h-5zM520 543h5v5h-5zM507 487h5v5h-5zM503 433h5v5h-5zM507 383h5v5h-5zM520 343h5v5h-5zM541 313h5v5h-5zM634 310h5v5h-5zM661 308h5v5h-5zM689 315h5v5h-5zM719 336h5v5h-5zM748 367h5v5h-5zM773 406h5v5h-5zM794 450h5v5h-5zM808 498h5v5h-5zM816 545h5v5h-5zM816 589h5v5h-5zM808 628h5v5h-5zM795 660h5v5h-5zM774 680h5v5h-5zM749 688h5v5h-5zM720 685h5v5h-5zM690 670h5v5h-5zM661 644h5v5h-5zM634 609h5v5h-5zM610 567h5v5h-5zM593 521h5v5h-5zM582 473h5v5h-5zM578 426h5v5h-5zM582 385h5v5h-5zM593 350h5v5h-5zM611 325h5v5h-5zM694 347h5v5h-5zM714 345h5v5h-5zM736 352h5v5h-5zM757 367h5v5h-5zM778 389h5v5h-5zM795 416h5v5h-5zM810 448h5v5h-5zM821 482h5v5h-5zM826 517h5v5h-5zM827 551h5v5h-5zM822 579h5v5h-5zM811 601h5v5h-5zM796 615h5v5h-5zM778 621h5v5h-5zM757 619h5v5h-5zM735 608h5v5h-5zM714 589h5v5h-5zM694 564h5v5h-5zM677 533h5v5h-5zM665 500h5v5h-5zM657 465h5v5h-5zM654 431h5v5h-5zM657 401h5v5h-5zM665 376h5v5h-5zM678 357h5v5h-5zM744 402h5v5h-5zM755 401h5v5h-5zM766 404h5v5h-5zM777 412h5v5h-5zM788 424h5v5h-5zM798 439h5v5h-5zM806 456h5v5h-5zM811 474h5v5h-5zM814 492h5v5h-5zM814 509h5v5h-5zM811 524h5v5h-5zM806 535h5v5h-5zM798 543h5v5h-5zM788 546h5v5h-5zM777 545h5v5h-5zM766 539h5v5h-5zM755 529h5v5h-5zM744 516h5v5h-5zM735 500h5v5h-5zM729 482h5v5h-5zM724 464h5v5h-5zM723 446h5v5h-5zM724 430h5v5h-5zM729 417h5v5h-5zM735 408h5v5h-5zM778 470h5v5h-5z"/></svg>
</div>
<div class="abs" id="vpR" style="left:982px;top:190px;width:934px;height:709px;border:2px solid #747474;border-right:1px solid #dedede;border-bottom:1px solid #e2e2e2;background:#fff;overflow:hidden">
<svg style="left:-984px;top:-192px" width="1920" height="905" viewBox="0 0 1920 905" shape-rendering="crispEdges"><path fill="#ffd935" d="M1451 668h7v7h-7zM1434 637h7v7h-7zM1421 603h7v7h-7zM1413 568h7v7h-7zM1788 340h7v7h-7zM1810 346h7v7h-7zM1832 361h7v7h-7zM1852 384h7v7h-7zM1902 546h7v7h-7zM1896 574h7v7h-7zM1886 596h7v7h-7z"/><path fill="#ffa31a" d="M1534 745h7v7h-7zM1504 719h7v7h-7zM1477 683h7v7h-7zM1425 547h7v7h-7zM1421 500h7v7h-7zM1425 458h7v7h-7zM1436 423h7v7h-7zM1707 305h7v7h-7zM1735 302h7v7h-7zM1869 656h7v7h-7zM1848 676h7v7h-7z"/><path fill="#ff6600" d="M1622 774h7v7h-7zM1587 756h7v7h-7zM1472 379h7v7h-7zM1493 349h7v7h-7zM1642 290h7v7h-7zM1807 726h7v7h-7zM1777 737h7v7h-7z"/><path fill="#cc2a00" d="M1720 769h7v7h-7zM1684 765h7v7h-7zM1548 318h7v7h-7z"/><path fill="#ffff70" d="M1852 407h7v7h-7zM1863 419h7v7h-7zM1872 434h7v7h-7zM1880 451h7v7h-7zM1886 469h7v7h-7zM1889 488h7v7h-7zM1889 505h7v7h-7z"/><path fill="#808080" stroke="#000" stroke-width="1" stroke-linejoin="round" d="M1617.5 596.8L1687.5 566L1669.8 519.4L1596.7 542.1zM1596.7 542.1L1669.8 519.4L1658.8 471.4L1583.7 485.7zM1687.5 566L1754.9 532.2L1742 498.4L1669.8 519.4zM1669.8 519.4L1742 498.4L1734 463.5L1658.8 471.4zM1644.7 646.5L1710.7 608.2L1687.5 566L1617.5 596.8zM1710.7 608.2L1771.7 562.9L1754.9 532.2L1687.5 566zM1583.7 485.7L1658.8 471.4L1655 425L1579.3 431.1zM1658.8 471.4L1734 463.5L1731.3 429.8L1655 425zM1551.6 621.7L1617.5 596.8L1596.7 542.1L1529.7 564.1zM1529.7 564.1L1596.7 542.1L1583.7 485.7L1516 504.8zM1738 643.4L1791.5 588.5L1771.7 562.9L1710.7 608.2zM1676.8 687.9L1738 643.4L1710.7 608.2L1644.7 646.5zM1580.2 673.9L1644.7 646.5L1617.5 596.8L1551.6 621.7zM1754.9 532.2L1813 498.8L1806.2 481.1L1742 498.4zM1742 498.4L1806.2 481.1L1802 462.7L1734 463.5zM1771.7 562.9L1821.8 515L1813 498.8L1754.9 532.2zM1655 425L1731.3 429.8L1734.1 399.4L1658.9 383.1zM1516 504.8L1583.7 485.7L1579.3 431.1L1511.4 447.4zM1734 463.5L1802 462.7L1800.6 445L1731.3 429.8zM1579.3 431.1L1655 425L1658.9 383.1L1583.8 381.8zM1791.5 588.5L1832.2 528.4L1821.8 515L1771.7 562.9zM1767.5 669.4L1813 607.4L1791.5 588.5L1738 643.4zM1613.9 717.4L1676.8 687.9L1644.7 646.5L1580.2 673.9zM1731.3 429.8L1800.6 445L1802 429L1734.1 399.4zM1711.5 718.4L1767.5 669.4L1738 643.4L1676.8 687.9zM1813 607.4L1843.5 538.3L1832.2 528.4L1791.5 588.5zM1496.3 638.2L1551.6 621.7L1529.7 564.1L1475.5 583.4zM1658.9 383.1L1734.1 399.4L1742.1 374.1L1670 348.3zM1475.5 583.4L1529.7 564.1L1516 504.8L1462.5 527zM1511.4 447.4L1579.3 431.1L1583.8 381.8L1516.1 395.6zM1734.1 399.4L1802 429L1806.3 415.7L1742.1 374.1zM1813 498.8L1856.1 469.1L1806.2 481.1zM1523.5 687.8L1580.2 673.9L1551.6 621.7L1496.3 638.2zM1806.2 481.1L1856.1 469.1L1802 462.7zM1821.8 515L1856.1 469.1L1813 498.8zM1802 462.7L1856.1 469.1L1800.6 445zM1583.8 381.8L1658.9 383.1L1670 348.3L1596.8 340.9zM1832.2 528.4L1856.1 469.1L1821.8 515zM1797.6 684.6L1834.9 618.4L1813 607.4L1767.5 669.4zM1834.9 618.4L1855 544.1L1843.5 538.3L1813 607.4zM1800.6 445L1856.1 469.1L1802 429zM1462.5 527L1516 504.8L1511.4 447.4L1458.1 472.4zM1650.5 749.5L1711.5 718.4L1676.8 687.9L1613.9 717.4zM1843.5 538.3L1856.1 469.1L1832.2 528.4zM1802 429L1856.1 469.1L1806.3 415.7zM1742.1 374.1L1806.3 415.7L1813 406L1755 355.6zM1555.6 729.2L1613.9 717.4L1580.2 673.9L1523.5 687.8zM1855 544.1L1856.1 469.1L1843.5 538.3zM1746.9 736.2L1797.6 684.6L1767.5 669.4L1711.5 718.4zM1670 348.3L1742.1 374.1L1755 355.6L1687.7 322.9zM1806.3 415.7L1856.1 469.1L1813 406zM1855.7 620.8L1866 545.4L1855 544.1L1834.9 618.4zM1866 545.4L1856.1 469.1L1855 544.1zM1516.1 395.6L1583.8 381.8L1596.8 340.9L1529.9 352.6zM1458.1 472.4L1511.4 447.4L1516.1 395.6L1462.6 423.2zM1813 406L1856.1 469.1L1821.9 400.4zM1826.3 687.9L1855.7 620.8L1834.9 618.4L1797.6 684.6zM1875.7 542.1L1856.1 469.1L1866 545.4zM1755 355.6L1813 406L1821.9 400.4L1771.9 345zM1596.8 340.9L1670 348.3L1687.7 322.9L1617.7 311zM1821.9 400.4L1856.1 469.1L1832.3 399.4zM1457 644.7L1496.3 638.2L1475.5 583.4L1439.4 598.1zM1439.4 598.1L1475.5 583.4L1462.5 527L1428.3 550.1zM1883.6 534.4L1856.1 469.1L1875.7 542.1zM1687.7 768.2L1746.9 736.2L1711.5 718.4L1650.5 749.5zM1590.4 759.8L1650.5 749.5L1613.9 717.4L1555.6 729.2zM1874.2 614.5L1875.7 542.1L1866 545.4L1855.7 620.8zM1832.3 399.4L1856.1 469.1L1843.6 402.9zM1480.2 686.9L1523.5 687.8L1496.3 638.2L1457 644.7zM1687.7 322.9L1755 355.6L1771.9 345L1711 308.3zM1889.1 522.8L1856.1 469.1L1883.6 534.4zM1771.9 345L1821.9 400.4L1832.3 399.4L1791.7 343.1zM1780.6 740.1L1826.3 687.9L1797.6 684.6L1746.9 736.2zM1428.3 550.1L1462.5 527L1458.1 472.4L1424.6 503.7zM1843.6 402.9L1856.1 469.1L1855.1 410.9zM1892 508L1856.1 469.1L1889.1 522.8zM1462.6 423.2L1516.1 395.6L1529.9 352.6L1475.7 382.3zM1855.1 410.9L1856.1 469.1L1866.1 422.6zM1529.9 352.6L1596.8 340.9L1617.7 311L1551.8 321.2zM1889.2 599.8L1883.6 534.4L1875.7 542.1L1874.2 614.5zM1507.5 722.1L1555.6 729.2L1523.5 687.8L1480.2 686.9zM1851.7 679.2L1874.2 614.5L1855.7 620.8L1826.3 687.9zM1892 491L1856.1 469.1L1892 508zM1866.1 422.6L1856.1 469.1L1875.8 437.5zM1889.2 472.8L1856.1 469.1L1892 491zM1875.8 437.5L1856.1 469.1L1883.6 454.6zM1883.6 454.6L1856.1 469.1L1889.2 472.8zM1791.7 343.1L1832.3 399.4L1843.6 402.9L1813.2 349.8zM1617.7 311L1687.7 322.9L1711 308.3L1645 293.9zM1424.6 503.7L1458.1 472.4L1462.6 423.2L1428.4 461.8zM1625.7 777.5L1687.7 768.2L1650.5 749.5L1590.4 759.8zM1711 308.3L1771.9 345L1791.7 343.1L1738.2 305.6zM1899.8 577.8L1889.1 522.8L1883.6 534.4L1889.2 599.8zM1723.1 772.3L1780.6 740.1L1746.9 736.2L1687.7 768.2zM1537.1 748.1L1590.4 759.8L1555.6 729.2L1507.5 722.1zM1813.2 349.8L1843.6 402.9L1855.1 410.9L1835.1 364.9zM1810.5 729.9L1851.7 679.2L1826.3 687.9L1780.6 740.1zM1872.4 659L1889.2 599.8L1874.2 614.5L1851.7 679.2zM1905.2 549.7L1892 508L1889.1 522.8L1899.8 577.8zM1475.7 382.3L1529.9 352.6L1551.8 321.2L1496.5 352.3zM1437.6 640.5L1457 644.7L1439.4 598.1L1424.8 606.7zM1424.8 606.7L1439.4 598.1L1428.3 550.1L1416.8 571.8zM1428.4 461.8L1462.6 423.2L1475.7 382.3L1439.5 427zM1835.1 364.9L1855.1 410.9L1866.1 422.6L1855.9 387.3zM1551.8 321.2L1617.7 311L1645 293.9L1580.5 303.2zM1454.5 671.2L1480.2 686.9L1457 644.7L1437.6 640.5zM1738.2 305.6L1791.7 343.1L1813.2 349.8L1767.8 314.9zM1905.3 517.3L1892 491L1892 508L1905.2 549.7zM1416.8 571.8L1428.3 550.1L1424.6 503.7L1414.1 538.1zM1645 293.9L1711 308.3L1738.2 305.6L1677.1 290.7zM1855.9 387.3L1866.1 422.6L1875.8 437.5L1874.4 415.6zM1659.4 781.5L1723.1 772.3L1687.7 768.2L1625.7 777.5zM1899.9 482.8L1889.2 472.8L1892 491L1905.3 517.3zM1474.3 696.8L1507.5 722.1L1480.2 686.9L1454.5 671.2zM1567.1 763.2L1625.7 777.5L1590.4 759.8L1537.1 748.1zM1874.4 415.6L1875.8 437.5L1883.6 454.6L1889.3 448.1zM1889.3 448.1L1883.6 454.6L1889.2 472.8L1899.9 482.8zM1886.9 628.7L1899.8 577.8L1889.2 599.8L1872.4 659zM1754.6 761.6L1810.5 729.9L1780.6 740.1L1723.1 772.3zM1414.1 538.1L1424.6 503.7L1428.4 461.8L1416.8 507.6zM1834.8 706.2L1872.4 659L1851.7 679.2L1810.5 729.9zM1767.8 314.9L1813.2 349.8L1835.1 364.9L1797.9 335.6zM1439.5 427L1475.7 382.3L1496.5 352.3L1457.2 401.5zM1495.8 715.6L1537.1 748.1L1507.5 722.1L1474.3 696.8zM1496.5 352.3L1551.8 321.2L1580.5 303.2L1523.8 335.3z"/><path fill="#808080" stroke="#000" stroke-width="1" stroke-linejoin="round" d="M1580.5 303.2L1645 293.9L1677.1 290.7L1614.3 299.8zM1894.5 590L1905.2 549.7L1899.8 577.8L1886.9 628.7zM1677.1 290.7L1738.2 305.6L1767.8 314.9L1711.9 301.7zM1416.8 507.6L1428.4 461.8L1439.5 427L1424.9 482.3zM1595.8 766.5L1659.4 781.5L1625.7 777.5L1567.1 763.2zM1797.9 335.6L1835.1 364.9L1855.9 387.3L1826.6 366.5zM1689.3 771.2L1754.6 761.6L1723.1 772.3L1659.4 781.5zM1517.6 726.6L1567.1 763.2L1537.1 748.1L1495.8 715.6zM1440 626.1L1437.6 640.5L1424.8 606.7L1433.3 608.3zM1433.3 608.3L1424.8 606.7L1416.8 571.8L1429 590zM1851.9 670.5L1886.9 628.7L1872.4 659L1834.8 706.2zM1894.5 545.5L1905.3 517.3L1905.2 549.7L1894.5 590zM1448.9 642.2L1454.5 671.2L1437.6 640.5L1440 626.1zM1780.1 736.7L1834.8 706.2L1810.5 729.9L1754.6 761.6zM1429 590L1416.8 571.8L1414.1 538.1L1427.6 572.3zM1457.2 401.5L1496.5 352.3L1523.8 335.3L1480.5 387zM1826.6 366.5L1855.9 387.3L1874.4 415.6L1852 405.5zM1459.3 655.7L1474.3 696.8L1454.5 671.2L1448.9 642.2zM1424.9 482.3L1439.5 427L1457.2 401.5L1437.8 463.9zM1887.1 497.9L1899.9 482.8L1905.3 517.3L1894.5 545.5zM1523.8 335.3L1580.5 303.2L1614.3 299.8L1555.9 332.1zM1427.6 572.3L1414.1 538.1L1416.8 507.6L1429.1 556.3zM1711.9 301.7L1767.8 314.9L1797.9 335.6L1747.2 326zM1852 405.5L1874.4 415.6L1889.3 448.1L1872.6 450.2zM1872.6 450.2L1889.3 448.1L1899.9 482.8L1887.1 497.9zM1614.3 299.8L1677.1 290.7L1711.9 301.7L1650.9 311.3zM1470.6 665.6L1495.8 715.6L1474.3 696.8L1459.3 655.7zM1538.5 729.1L1595.8 766.5L1567.1 763.2L1517.6 726.6zM1621.3 757.9L1689.3 771.2L1659.4 781.5L1595.8 766.5zM1429.1 556.3L1416.8 507.6L1424.9 482.3L1433.3 543zM1860.8 625.1L1894.5 590L1886.9 628.7L1851.9 670.5zM1713.6 747.5L1780.1 736.7L1754.6 761.6L1689.3 771.2zM1482.1 671.4L1517.6 726.6L1495.8 715.6L1470.6 665.6zM1437.8 463.9L1457.2 401.5L1480.5 387L1454.7 453.3zM1798.1 699.2L1851.9 670.5L1834.8 706.2L1780.1 736.7zM1747.2 326L1797.9 335.6L1826.6 366.5L1780.9 362.3zM1480.5 387L1523.8 335.3L1555.9 332.1L1507.8 384.3zM1433.3 543L1424.9 482.3L1437.8 463.9L1440.1 533.2zM1463.9 602.9L1440 626.1L1433.3 608.3zM1463.9 602.9L1433.3 608.3L1429 590zM1463.9 602.9L1448.9 642.2L1440 626.1zM1463.9 602.9L1429 590L1427.6 572.3zM1463.9 602.9L1459.3 655.7L1448.9 642.2zM1557 722.7L1621.3 757.9L1595.8 766.5L1538.5 729.1zM1860.8 572.7L1894.5 545.5L1894.5 590L1860.8 625.1zM1493 672.7L1538.5 729.1L1517.6 726.6L1482.1 671.4zM1555.9 332.1L1614.3 299.8L1650.9 311.3L1590.7 343zM1463.9 602.9L1427.6 572.3L1429.1 556.3zM1650.9 311.3L1711.9 301.7L1747.2 326L1688 337zM1463.9 602.9L1470.6 665.6L1459.3 655.7zM1463.9 602.9L1429.1 556.3L1433.3 543zM1780.9 362.3L1826.6 366.5L1852 405.5L1810.8 408.1zM1641.9 737.7L1713.6 747.5L1689.3 771.2L1621.3 757.9zM1440.1 533.2L1437.8 463.9L1454.7 453.3L1449 527.7zM1463.9 602.9L1482.1 671.4L1470.6 665.6zM1454.7 453.3L1480.5 387L1507.8 384.3L1474.5 451.3zM1852 516.8L1887.1 497.9L1894.5 545.5L1860.8 572.7zM1463.9 602.9L1433.3 543L1440.1 533.2zM1502.8 669.4L1557 722.7L1538.5 729.1L1493 672.7zM1807.4 651.4L1860.8 625.1L1851.9 670.5L1798.1 699.2zM1730.7 711.9L1798.1 699.2L1780.1 736.7L1713.6 747.5zM1463.9 602.9L1493 672.7L1482.1 671.4zM1810.8 408.1L1852 405.5L1872.6 450.2L1835 460.8zM1835 460.8L1872.6 450.2L1887.1 497.9L1852 516.8zM1463.9 602.9L1440.1 533.2L1449 527.7zM1507.8 384.3L1555.9 332.1L1590.7 343L1537.4 393.6zM1449 527.7L1454.7 453.3L1474.5 451.3L1459.4 526.7zM1463.9 602.9L1502.8 669.4L1493 672.7zM1572 708.1L1641.9 737.7L1621.3 757.9L1557 722.7zM1463.9 602.9L1449 527.7L1459.4 526.7zM1688 337L1747.2 326L1780.9 362.3L1723.4 375.1zM1590.7 343L1650.9 311.3L1688 337L1626.1 367.4zM1463.9 602.9L1510.6 661.7L1502.8 669.4zM1510.6 661.7L1572 708.1L1557 722.7L1502.8 669.4zM1463.9 602.9L1459.4 526.7L1470.7 530.2zM1474.5 451.3L1507.8 384.3L1537.4 393.6L1496 458.1zM1656.5 707.3L1730.7 711.9L1713.6 747.5L1641.9 737.7zM1463.9 602.9L1516.2 650.1L1510.6 661.7zM1807.4 596.4L1860.8 572.7L1860.8 625.1L1807.4 651.4zM1459.4 526.7L1474.5 451.3L1496 458.1L1470.7 530.2zM1463.9 602.9L1470.7 530.2L1482.2 538.1zM1463.9 602.9L1519.1 635.3L1516.2 650.1zM1739.6 666.4L1807.4 651.4L1798.1 699.2L1730.7 711.9zM1723.4 375.1L1780.9 362.3L1810.8 408.1L1754.9 423.3zM1463.9 602.9L1482.2 538.1L1493.1 549.9zM1516.2 650.1L1582.5 686L1572 708.1L1510.6 661.7zM1582.5 686L1656.5 707.3L1641.9 737.7L1572 708.1zM1463.9 602.9L1519.1 618.3L1519.1 635.3zM1537.4 393.6L1590.7 343L1626.1 367.4L1567.4 414.3zM1463.9 602.9L1493.1 549.9L1502.8 564.8zM1463.9 602.9L1516.2 600.1L1519.1 618.3zM1463.9 602.9L1502.8 564.8L1510.7 581.9zM1798.2 537.5L1852 516.8L1860.8 572.7L1807.4 596.4zM1463.9 602.9L1510.7 581.9L1516.2 600.1zM1470.7 530.2L1496 458.1L1517.9 473.1L1482.2 538.1zM1626.1 367.4L1688 337L1723.4 375.1L1659.7 403.6zM1754.9 423.3L1810.8 408.1L1835 460.8L1780.3 478.6zM1496 458.1L1537.4 393.6L1567.4 414.3L1517.9 473.1zM1780.3 478.6L1835 460.8L1852 516.8L1798.2 537.5zM1519.1 635.3L1588 658L1582.5 686L1516.2 650.1zM1664 668.7L1739.6 666.4L1730.7 711.9L1656.5 707.3zM1482.2 538.1L1517.9 473.1L1538.7 495.5L1493.1 549.9zM1739.6 614.1L1807.4 596.4L1807.4 651.4L1739.6 666.4zM1588 658L1664 668.7L1656.5 707.3L1582.5 686zM1519.1 618.3L1588 625.6L1588 658L1519.1 635.3zM1567.4 414.3L1626.1 367.4L1659.7 403.6L1596.1 445.1zM1493.1 549.9L1538.7 495.5L1557.1 523.9L1502.8 564.8zM1659.7 403.6L1723.4 375.1L1754.9 423.3L1689.6 449.5zM1517.9 473.1L1567.4 414.3L1596.1 445.1L1538.7 495.5zM1516.2 600.1L1582.6 591L1588 625.6L1519.1 618.3zM1502.8 564.8L1557.1 523.9L1572.1 556.4L1510.7 581.9zM1510.7 581.9L1572.1 556.4L1582.6 591L1516.2 600.1zM1730.9 558.1L1798.2 537.5L1807.4 596.4L1739.6 614.1zM1664 624.2L1739.6 614.1L1739.6 666.4L1664 668.7zM1588 625.6L1664 624.2L1664 668.7L1588 658zM1689.6 449.5L1754.9 423.3L1780.3 478.6L1713.8 502.1zM1713.8 502.1L1780.3 478.6L1798.2 537.5L1730.9 558.1zM1538.7 495.5L1596.1 445.1L1621.5 484.2L1557.1 523.9zM1596.1 445.1L1659.7 403.6L1689.6 449.5L1621.5 484.2zM1582.6 591L1656.6 576.6L1664 624.2L1588 625.6zM1656.6 576.6L1730.9 558.1L1739.6 614.1L1664 624.2zM1557.1 523.9L1621.5 484.2L1642.1 528.9L1572.1 556.4zM1572.1 556.4L1642.1 528.9L1656.6 576.6L1582.6 591zM1621.5 484.2L1689.6 449.5L1713.8 502.1L1642.1 528.9zM1642.1 528.9L1713.8 502.1L1730.9 558.1L1656.6 576.6z"/><path fill="#00e800" d="M1488 394h3v2h-3zM1514 391h3v2h-3zM1542 400h3v2h-3zM1571 419h3v2h-3zM1598 449h3v2h-3zM1622 486h3v2h-3zM1642 528h3v2h-3zM1655 574h3v2h-3zM1662 619h3v2h-3zM1662 661h3v2h-3zM1655 698h3v2h-3zM1641 726h3v2h-3zM1622 746h3v2h-3zM1560 341h3v2h-3zM1593 352h3v2h-3zM1626 375h3v2h-3zM1658 409h3v2h-3zM1687 453h3v2h-3zM1710 503h3v2h-3zM1726 556h3v2h-3zM1734 609h3v2h-3zM1734 659h3v2h-3zM1726 702h3v2h-3zM1709 736h3v2h-3zM1650 322h3v2h-3zM1685 346h3v2h-3zM1719 382h3v2h-3zM1749 428h3v2h-3zM1773 481h3v2h-3zM1790 536h3v2h-3zM1798 592h3v2h-3zM1798 645h3v2h-3zM1790 690h3v2h-3zM1772 725h3v2h-3zM1741 336h3v2h-3zM1773 370h3v2h-3zM1802 414h3v2h-3zM1825 464h3v2h-3zM1841 517h3v2h-3zM1849 570h3v2h-3zM1849 620h3v2h-3zM1841 663h3v2h-3z"/><path fill="#800000" d="M1460 599h7v7h-7z"/><path fill="#ffff70" d="M1445 524h7v7h-7zM1456 523h7v7h-7zM1467 527h7v7h-7zM1479 535h7v7h-7zM1490 546h7v7h-7zM1499 561h7v7h-7zM1507 578h7v7h-7zM1513 597h7v7h-7zM1516 615h7v7h-7zM1516 632h7v7h-7zM1513 647h7v7h-7zM1507 658h7v7h-7zM1499 666h7v7h-7zM1490 669h7v7h-7zM1479 668h7v7h-7zM1467 662h7v7h-7zM1456 652h7v7h-7zM1445 639h7v7h-7zM1437 623h7v7h-7zM1430 605h7v7h-7zM1426 586h7v7h-7zM1424 569h7v7h-7zM1426 553h7v7h-7zM1430 539h7v7h-7zM1437 530h7v7h-7z"/><path fill="#ffd935" d="M1451 450h7v7h-7zM1471 448h7v7h-7zM1493 455h7v7h-7zM1514 470h7v7h-7zM1535 492h7v7h-7zM1554 520h7v7h-7zM1569 553h7v7h-7zM1579 588h7v7h-7zM1585 622h7v7h-7zM1585 654h7v7h-7zM1579 683h7v7h-7zM1568 705h7v7h-7zM1553 719h7v7h-7zM1535 726h7v7h-7zM1514 723h7v7h-7zM1492 712h7v7h-7zM1471 693h7v7h-7zM1411 535h7v7h-7zM1413 504h7v7h-7zM1421 479h7v7h-7zM1434 460h7v7h-7zM1871 412h7v7h-7zM1886 445h7v7h-7zM1896 479h7v7h-7zM1902 514h7v7h-7z"/><path fill="#ffa31a" d="M1477 383h7v7h-7zM1504 381h7v7h-7zM1534 390h7v7h-7zM1564 411h7v7h-7zM1593 442h7v7h-7zM1618 481h7v7h-7zM1639 525h7v7h-7zM1653 573h7v7h-7zM1661 621h7v7h-7zM1660 665h7v7h-7zM1653 704h7v7h-7zM1638 734h7v7h-7zM1618 754h7v7h-7zM1592 763h7v7h-7zM1564 760h7v7h-7zM1454 398h7v7h-7zM1764 311h7v7h-7zM1794 332h7v7h-7zM1823 363h7v7h-7zM1848 402h7v7h-7zM1869 447h7v7h-7zM1884 494h7v7h-7zM1891 542h7v7h-7zM1891 587h7v7h-7zM1883 625h7v7h-7z"/><path fill="#ff6600" d="M1520 332h7v7h-7zM1552 329h7v7h-7zM1587 340h7v7h-7zM1623 364h7v7h-7zM1656 400h7v7h-7zM1686 446h7v7h-7zM1710 499h7v7h-7zM1727 555h7v7h-7zM1736 611h7v7h-7zM1736 663h7v7h-7zM1727 708h7v7h-7zM1710 744h7v7h-7zM1686 768h7v7h-7zM1656 778h7v7h-7zM1674 287h7v7h-7zM1708 298h7v7h-7zM1744 323h7v7h-7zM1777 359h7v7h-7zM1807 405h7v7h-7zM1832 457h7v7h-7zM1849 513h7v7h-7zM1857 569h7v7h-7zM1857 622h7v7h-7zM1848 667h7v7h-7zM1831 703h7v7h-7z"/><path fill="#cc2a00" d="M1577 300h7v7h-7zM1611 296h7v7h-7zM1647 308h7v7h-7zM1685 333h7v7h-7zM1720 372h7v7h-7zM1751 420h7v7h-7zM1777 475h7v7h-7zM1795 534h7v7h-7zM1804 593h7v7h-7zM1804 648h7v7h-7zM1795 696h7v7h-7zM1777 733h7v7h-7zM1751 758h7v7h-7z"/></svg>
</div>
<!-- legends (page coords) -->
<style>
.lg{position:absolute;top:195px;height:27px;border:1px dashed #b4b4b4}
.lg b{display:block;width:100%;height:100%}
.ln{position:absolute;top:222.5px;width:120px;margin-left:-60px;text-align:center;font-family:"Liberation Serif",serif;font-size:22.9px;line-height:24px;transform:scaleY(1.08);transform-origin:50% 20%;-webkit-text-stroke:0}
.vt{position:absolute;font-family:"Liberation Serif",serif;font-size:20.6px;line-height:22px;white-space:nowrap;-webkit-text-stroke:0}
</style>
<div class="lg" style="left:60px;width:205px"><b style="background:#ff80a0"></b></div>
<div class="lg" style="left:276px;width:205px"><b style="background:#0080ff"></b></div>
<div class="lg" style="left:492px;width:205px"><b style="background:#00ff00"></b></div>
<div class="lg" style="left:708px;width:205px"><b style="background:#ffff00"></b></div>
<div class="ln" style="left:162.5px">1514</div>
<div class="ln" style="left:378.5px">1516</div>
<div class="ln" style="left:594.5px">1558</div>
<div class="ln" style="left:810.5px">1559</div>
<div class="vt" style="left:8px;top:247px">Загружение 1</div>
<div class="vt" style="left:8px;top:269px">Мозаїка типів скінченних елементів</div>

<div class="lg" style="left:1037.5px;width:127px"><b style="background:#ffff70"></b></div>
<div class="lg" style="left:1176px;width:127px"><b style="background:#ffd935"></b></div>
<div class="lg" style="left:1314.5px;width:127px"><b style="background:#ffa31a"></b></div>
<div class="lg" style="left:1453px;width:127px"><b style="background:#ff6600"></b></div>
<div class="lg" style="left:1591.5px;width:127px"><b style="background:#cc2a00"></b></div>
<div class="lg" style="left:1730px;width:127px"><b style="background:#800000"></b></div>
<div class="ln" style="left:1101.5px">14.4</div>
<div class="ln" style="left:1238.5px">27.4</div>
<div class="ln" style="left:1378px">37.8</div>
<div class="ln" style="left:1516px">44.6</div>
<div class="ln" style="left:1654px">47</div>
<div class="ln" style="left:1792px">62.2</div>
<div class="vt" style="left:987px;top:243px">Загружение 1</div>
<div class="vt" style="left:987px;top:264px;letter-spacing:.2px">Мозаїка теплового потоку</div>
<div class="vt" style="left:987px;top:285px">Одиниці виміру - Дж/с</div>

<!-- floating ribbon panels inside viewports -->
<div class="abs flt" style="left:-919px;top:242px;width:0;height:0">
<div class="grp" style="left:1053px;width:163px"><div class="lbl"><span style="font-size:11.5px">Розрахунок</span></div></div>
<i class="IC" style="left:1084px;top:70px"><svg width="32" height="32" viewBox="0 0 32 32"><path d="M3.3000000000000003 8.3a2.1 2.1 0 0 1 4.2 0v13.1a4.0 4.0 0 1 1 -4.2 0z" fill="#f8f8f8" stroke="#7a7a7a" stroke-width=".9"/><circle cx="5.4" cy="24.2" r="2.5" fill="#b8281c"/><rect x="4.5" y="11.2" width="1.800" height="12.0" fill="#b8281c"/><path d="M7.7 10.2h1.600M7.7 12.7h1.600M7.7 15.2h1.600M7.7 17.7h1.600" stroke="#555" stroke-width=".7"/><text x="10.8" y="9.8" font-family="Liberation Sans" font-size="10.5" fill="#3c3c3c">C</text><rect x="7.6" y="1.61" width="2.600" height="2.600" fill="none" stroke="#3c3c3c" stroke-width=".9"/><path d="M11.500 11.500v16.500h15" stroke="#555" stroke-width="1" fill="none"/><path d="M12 28.700h15" stroke="#555" stroke-width="1" stroke-dasharray="1 1.200"/><path d="M12 12.500c2 2 3 8 5.500 8s3-7.500 5-7.500s1.200 3.500 2.500 3.500s1.300-2.800 2.400-2.800s1.200 2.800 2.600 4" stroke="#e8108a" stroke-width="1.500" fill="none"/><text x="27" y="29.500" font-family="Liberation Serif" font-weight="bold" font-size="13" fill="#2a2a2a">t</text></svg></i>
<div class="rb" style="left:1084px">Динаміка<br>у часі</div>
<i class="ic" style="left:1123px;top:62px"><svg width="16" height="16" viewBox="0 0 16 16"><text x="1" y="9.700" font-family="Liberation Serif" font-weight="bold" font-size="13" fill="#1c2340">t</text><ellipse cx="7" cy="1.300" rx="1.500" ry="1" fill="none" stroke="#7a7e90" stroke-width=".8"/><path d="M.3 .8l1.800 1.500" stroke="#c82030" stroke-width="1"/><path d="M5.800 7.300l2.400-2.600l1.300 2.800l2.300-4" stroke="#b83040" stroke-width="1.200" fill="none"/><path d="M14 2v10" stroke="#3a4aa8" stroke-width="1.700"/><path d="M11.300 10.800l2.700 4.400l2.700-4.400z" fill="#3a4aa8"/><path d="M10.800 15c-2.500 .8-5 .2-6.800-1.500" stroke="#e01828" stroke-width="1.600" fill="none"/><path d="M.8 13.300l4.200-2.600v4.800z" fill="#e01828"/></svg></i>
<i class="ic" style="left:1123px;top:84px"><svg width="16" height="16" viewBox="0 0 16 16"><path d="M1.200 .5h10.500v13.700h-10.500z" fill="#fbfbfb" stroke="#b4b4b4" stroke-width=".8"/><path d="M3.500 1.800h12.300v13.700h-12.300z" fill="#fdfdfd" stroke="#ababab" stroke-width=".9"/><path d="M3.500 4.500c2 0 2.800-1 2.800-2.700" fill="none" stroke="#8a8a8a" stroke-width=".8"/><path d="M7 4h7v9.500h-8.500v-7z" fill="#d4d0e6" opacity=".85"/></svg></i>
<div class="hl2 fonly" style="left:1112px;top:95px;width:26px;height:22px"></div>
<i class="ic" style="left:1123px;top:106px"><svg width="16" height="16" viewBox="0 0 16 16"><text x="-.3" y="12.600" font-family="Liberation Serif" font-size="15.500" fill="#c8181c" stroke="#c8181c" stroke-width=".35">Q</text><path d="M11.300 .7l3.200 2.800l-1.500 2v3" stroke="#6a3aa8" stroke-width="1.200" fill="none"/><path d="M10.700 8l2.300 3.200l2.300-3.200z" fill="#6a3aa8"/><circle cx="13" cy="13.800" r="2" fill="#1a2a1a"/><path d="M12.200 14.300l1.600-1.200" stroke="#9ad890" stroke-width=".9"/></svg></i>
<i class="IC" style="left:1175px;top:69px"><svg width="32" height="32" viewBox="0 0 32 32"><defs><linearGradient id="bolt" x1="0" y1="0" x2="1" y2="1"><stop offset="0" stop-color="#fffbd0"/><stop offset=".5" stop-color="#ffe81e"/><stop offset="1" stop-color="#f0b800"/></linearGradient></defs><path d="M19.400 3.900h8.900l-5.700 9.900h8.800l-14 17.200l4.100-13.600h-5.700z" fill="url(#bolt)" stroke="#d29e00" stroke-width=".9"/><path d="M4.500 9.500c0-2.600 4-2.600 4 0v8l2.500-1.300l2.500.6l2.300.3l3.200 1.600l.5 5.500l-3 7h-9.500l-4.500-7.500c-1.600-2.800.2-4 1.500-2.700l.5 .5z" fill="#dcb76c" stroke="#b48a38" stroke-width=".8"/><path d="M8.500 17.500v3M11 16.200v3.500M13.500 16.800v3" stroke="#b48a38" stroke-width=".7"/></svg></i>
<div class="rb" style="left:1175px">Виконати<br>розрахунок<b class="da" style="margin-left:1px"></b></div>
</div>
<div class="abs flt" style="left:-379px;top:258px;width:0;height:0">
<div class="grp" style="left:1434px;width:129px"><div class="lbl"><span style="font-size:11.5px">Інструменти</span></div></div>
<i class="ic" style="left:1449px;top:62px"><svg width="16" height="16" viewBox="0 0 16 16"><rect x="1" y="1" width="13" height="3" fill="#c82a2a"/><rect x="3.200" y="1.500" width="2.200" height="2" fill="#ff9020"/><rect x="5.400" y="1.500" width="2.200" height="2" fill="#ffe820"/><rect x="7.600" y="1.500" width="2.200" height="2" fill="#30c830"/><rect x="9.800" y="1.500" width="2.200" height="2" fill="#20a8f0"/><rect x="12" y="1.500" width="1.500" height="2" fill="#c040c0"/><rect x="1.500" y="1.500" width="1.700" height="2" fill="#e02020"/><path d="M1.500 6.500h8" stroke="#333" stroke-width="1.100" stroke-dasharray="1.200 1"/><path d="M10 6v8l2-1.800l1.500 3l1.200-.6l-1.500-3h2.500z" fill="#222"/></svg></i><b class="db" style="left:1466px;top:60px"></b>
<div class="hl" style="left:1438px;top:73px;width:25px;height:22px"></div>
<i class="ic" style="left:1450px;top:84px"><svg width="16" height="16" viewBox="0 0 16 16"><rect x="1" y="1" width="13" height="3" fill="#c82a2a"/><rect x="3.200" y="1.500" width="2.200" height="2" fill="#ff9020"/><rect x="5.400" y="1.500" width="2.200" height="2" fill="#ffe820"/><rect x="7.600" y="1.500" width="2.200" height="2" fill="#30c830"/><rect x="9.800" y="1.500" width="2.200" height="2" fill="#20a8f0"/><rect x="12" y="1.500" width="1.500" height="2" fill="#c040c0"/><rect x="1.500" y="1.500" width="1.700" height="2" fill="#e02020"/><path d="M3.300 11a4.300 4 0 0 1 7.500-3" stroke="#1a3a6a" stroke-width="1.500" fill="none"/><path d="M9.300 5.500l3.200 2.800l-4 1.200z" fill="#1a3a6a"/><path d="M12 10.500a4.300 4 0 0 1-7.500 3" stroke="#1a3a6a" stroke-width="1.500" fill="none"/><path d="M6 16l-3.200-2.800l4-1.200z" fill="#1a3a6a"/></svg></i>
<i class="ic" style="left:1449px;top:107px"><svg width="16" height="16" viewBox="0 0 16 16"><rect x="1" y="1" width="13" height="3" fill="#c82a2a"/><rect x="3.200" y="1.500" width="2.200" height="2" fill="#ff9020"/><rect x="5.400" y="1.500" width="2.200" height="2" fill="#ffe820"/><rect x="7.600" y="1.500" width="2.200" height="2" fill="#30c830"/><rect x="9.800" y="1.500" width="2.200" height="2" fill="#20a8f0"/><rect x="12" y="1.500" width="1.500" height="2" fill="#c040c0"/><rect x="1.500" y="1.500" width="1.700" height="2" fill="#e02020"/><circle cx="7" cy="9" r="4.300" fill="#d8ecf8" fill-opacity=".8" stroke="#e8e8e8" stroke-width="1.200"/><path d="M4.500 9.500a3 2.500 0 0 1 5-1.800M10 9a3 2.500 0 0 1-5 1.800" stroke="#1a4a7a" stroke-width="1.200" fill="none"/><path d="M8.800 6.500l1.800 1.800l-2.400.4zM5.500 12.200l-1.800-1.800l2.400-.4z" fill="#1a4a7a"/><path d="M10.500 12l4 3.500" stroke="#1a1a1a" stroke-width="2" stroke-linecap="round"/></svg></i>
<i class="ic" style="left:1484px;top:62px"><svg width="16" height="16" viewBox="0 0 16 16"><text x=".5" y="11" font-family="Liberation Sans" font-size="10.500" fill="#a0a4ac">1.2)</text><path d="M1 13.500c4 1 8 .5 11-1" stroke="#aeb2ba" stroke-width=".8" fill="none"/></svg></i><b class="db" style="left:1501px;top:60px"></b>
<i class="ic" style="left:1484px;top:84px"><svg width="16" height="16" viewBox="0 0 16 16"><path d="M1.500 2v12h12.500" stroke="#a82020" stroke-width="1.200" fill="none"/><path d="M1.500 2c1.500 6 5 7.500 12.500 7.500" stroke="#c83030" stroke-width="1" fill="none"/><path d="M3.5 6.2V14" stroke="#c83030" stroke-width=".9"/><path d="M5.5 7.8V14" stroke="#c83030" stroke-width=".9"/><path d="M7.5 8.6V14" stroke="#c83030" stroke-width=".9"/><path d="M9.5 9.1V14" stroke="#c83030" stroke-width=".9"/><path d="M11.5 9.4V14" stroke="#c83030" stroke-width=".9"/><path d="M13.5 9.5V14" stroke="#c83030" stroke-width=".9"/></svg></i><b class="db" style="left:1501px;top:82px"></b>
<i class="ic" style="left:1484px;top:107px"><svg width="16" height="16" viewBox="0 0 16 16"><rect x="1" y="1" width="6" height="6.500" fill="#e8b050"/><rect x="7" y="1" width="4.500" height="6.500" fill="#f4d090"/><rect x="1" y="7.500" width="6" height="7.500" fill="#a82828"/><rect x="7" y="7.500" width="4.500" height="7.500" fill="#d8a060"/><rect x="1" y="1" width="10.500" height="14" fill="none" stroke="#6a4a2a" stroke-width=".7"/><path d="M12 2v9" stroke="#2a2a8a" stroke-width="2"/><path d="M9.300 10l2.700 5l2.700-5z" fill="#3a3a9a" stroke="#1a1a6a" stroke-width=".5"/></svg></i>
<i class="ic" style="left:1519px;top:62px"><svg width="16" height="16" viewBox="0 0 16 16"><text transform="translate(8 12.500) scale(0.9 1)" text-anchor="middle" font-family="Liberation Sans" font-weight="bold" font-size="11.500" fill="#b82050">?!</text><path d="M3.300 2c-1.500 0-1.500 1-1.500 2.500s0 3-1.200 3.500c1.200 .5 1.200 2 1.200 3.500s0 2.500 1.500 2.500M12.700 2c1.500 0 1.500 1 1.500 2.500s0 3 1.200 3.500c-1.200 .5-1.200 2-1.200 3.500s0 2.500-1.500 2.500" stroke="#2a3a6a" stroke-width="1" fill="none"/></svg></i>
<i class="ic" style="left:1519px;top:84px"><svg width="16" height="16" viewBox="0 0 16 16"><circle cx="8" cy="9.500" r="5.500" fill="#f4f4f4" stroke="#c8c8c8" stroke-width="1.100"/><path d="M8 9.500l-2.500-3" stroke="#e08080" stroke-width="1"/><rect x="6.800" y="1" width="2.400" height="2.500" fill="#d8d8d8" stroke="#c0c0c0" stroke-width=".5"/><circle cx="8" cy="9.500" r="3.800" fill="none" stroke="#e4e4e4" stroke-width=".8"/></svg></i>
<i class="ic" style="left:1519px;top:107px"><svg width="16" height="16" viewBox="0 0 16 16"><circle cx="7" cy="9" r="6" fill="#d4d0c8" stroke="#c0bcb4" stroke-width=".8"/><rect x="5.9" y="4.5" width="2.200" height="2.200" fill="#a8c4d8"/><rect x="2.8" y="7.9" width="2.200" height="2.200" fill="#a8c4d8"/><rect x="9" y="7.9" width="2.200" height="2.200" fill="#a8c4d8"/><rect x="5.9" y="7.9" width="2.200" height="2.200" fill="#a8c4d8"/><rect x="5.9" y="11.3" width="2.200" height="2.200" fill="#a8c4d8"/><path d="M12 4c1 2 1.500 3 2 1.500s.8 1.500 1.200 4" stroke="#f070b0" stroke-width=".9" fill="none"/><path d="M9 14.500c2 .5 4 0 5.500-1.500" stroke="#c8c4bc" stroke-width="1" fill="none"/></svg></i>
<i class="ic" style="left:1544px;top:62px"><svg width="16" height="16" viewBox="0 0 16 16"><path d="M5 .5v8M1.500 2.500l7 4M8.500 2.500l-7 4" stroke="#c81828" stroke-width="1.500"/><path d="M3.500 .8l1.500 1.500l1.500-1.500M3.500 8.200l1.500-1.500l1.500 1.500" stroke="#c81828" stroke-width=".9" fill="none"/><text x="7.500" y="15" font-family="Liberation Sans" font-size="9.500" fill="#2a2a3a">tc</text><circle cx="11" cy="7" r=".6" fill="#c81828"/></svg></i>
<div class="hl2 fonly" style="left:1532px;top:73px;width:25px;height:22px"></div>
<i class="ic" style="left:1544px;top:84px"><svg width="16" height="16" viewBox="0 0 16 16"><text x="-.3" y="12.800" font-family="Liberation Serif" font-weight="bold" font-size="16" fill="#1a1a3a">Σ</text><path d="M11.300 .5l3.200 2.800l-1.500 2v3" stroke="#6a3aa8" stroke-width="1.200" fill="none"/><path d="M10.700 7.800l2.300 3.200l2.300-3.200z" fill="#6a3aa8"/><circle cx="13" cy="13.800" r="1.900" fill="#2a4a1a"/><path d="M12.300 14.300l1.500-1.100" stroke="#a8e090" stroke-width=".9"/></svg></i>
<i class="ic" style="left:1544px;top:107px"><svg width="16" height="16" viewBox="0 0 16 16"><rect x="6" y="1" width="9" height="7" fill="#eef2f8" stroke="#8a98b0" stroke-width=".8"/><rect x="6" y="1" width="9" height="1.800" fill="#a8a0d8"/><rect x="1" y="8" width="9" height="7" fill="#eef2f8" stroke="#8a98b0" stroke-width=".8"/><rect x="1" y="8" width="9" height="1.800" fill="#a8a0d8"/><path d="M2 7c0-3 2-4.500 4-4.500" stroke="#2a5a7a" stroke-width="1.300" fill="none"/><path d="M5.500 1l2 1.500l-2 1.500z" fill="#2a5a7a"/><path d="M14 9c0 3-2 4.500-3.500 4.500" stroke="#2a5a7a" stroke-width="1.300" fill="none"/><path d="M11 12l-2 1.500l2 1.500z" fill="#2a5a7a"/></svg></i>
</div>
<!-- ================= MESSAGES PANEL ================= -->
<div class="abs" style="left:0;top:903px;width:1920px;height:4px;background:#555"></div>
<div class="abs" style="left:0;top:907px;width:1920px;height:22px;background:#9fa19f;border-top:1px solid #e4e4e4;border-bottom:1px solid #6a6a6a"></div>
<div class="t" style="left:4px;top:912px;font-size:11.5px;color:#555">Помилки та зауваження</div>
<svg style="left:1888px;top:912px" width="28" height="10" viewBox="0 0 28 10"><path d="M2.500 1h4v5.500M2.500 1v5.500M5.700 1v5.500M.5 6.500h8M4.500 7v3" stroke="#444" stroke-width="1" fill="none"/><path d="M18 1l8 8M26 1l-8 8" stroke="#444" stroke-width="1.200"/></svg>
<div class="abs" style="left:0;top:929px;width:1920px;height:39px;background:#fff;border-left:2px solid #8a8a8a"></div>
<div class="abs" style="left:772px;top:929px;width:1px;height:38px;background:#e8e8e8"></div>
<div class="abs" style="left:1450px;top:929px;width:1px;height:38px;background:#e8e8e8"></div>
<div class="abs" style="left:1902px;top:929px;width:1px;height:38px;background:#e8e8e8"></div>
<div class="t s11" style="left:7px;top:936px">Помилка або попередження</div>
<div class="t s11" style="left:1656px;top:936px">Задача</div>
<!-- ================= BOTTOM TOOLBARS ================= -->
<div class="abs" style="left:0;top:968px;width:1920px;height:72px;background:#2d2d2d"></div>
<div class="abs" style="left:0;top:1015px;width:1920px;height:8px;background:linear-gradient(#4a4e5c,#343640)"></div>
<style>
.tb{position:absolute;top:968px;height:47px;background:linear-gradient(#ced1d7 0,#ccd0d6 10px,#b3b7c0 28px,#999ea8 47px);border-top:1px solid #dcdfe4}
.td{position:absolute;top:991px;width:0;height:0;border-left:4px solid transparent;border-right:4px solid transparent;border-top:4.5px solid #555;margin-left:-4px}
.td:before{content:"";position:absolute;left:-5.5px;top:-6.5px;width:11px;height:2px;background:#555}
.tsep{position:absolute;top:978px;width:1px;height:28px;background:#4a4f5c;box-shadow:1px 0 0 #fff}
</style>
<div class="tb" style="left:0;width:1418px;border-radius:0 0 0 3px"></div>
<svg style="left:4px;top:975px" width="4" height="32" viewBox="0 0 4 32"><path d="M2 0v32" stroke="#1a1a1a" stroke-width="2" stroke-dasharray="2 1.5"/><path d="M3 1v32" stroke="#fff" stroke-width="1" stroke-dasharray="2 1.5"/></svg>
<i class="IC" style="left:32px;top:992px"><svg width="32" height="32" viewBox="0 0 32 32"><path d="M5.500 3.500l8 2.500l7.500-4l1.500 9l8 6l-9 2.500l-2.500 9l-7-6.500l-10.500 .5l4.500-8z" fill="none" stroke="#cf8888" stroke-width="1.400" stroke-dasharray="3 1.800"/></svg></i>
<i class="IC" style="left:77px;top:992px"><svg width="32" height="32" viewBox="1.300 1.300 29.400 29.400"><defs><radialGradient id="lens" cx="45%" cy="40%" r="60%"><stop offset="0" stop-color="#ffffff"/><stop offset=".7" stop-color="#e4eef8"/><stop offset="1" stop-color="#c4d8ee"/></radialGradient></defs><circle cx="27.300" cy="27.300" r="2.300" fill="#ececec" stroke="#c4c4c8" stroke-width=".5"/><circle cx="16" cy="16" r="13.800" fill="#f2f2f4" stroke="#a2a2a8" stroke-width=".7"/><circle cx="16" cy="16" r="12" fill="url(#lens)" stroke="#3f78c8" stroke-width=".8"/><clipPath id="lc"><circle cx="16" cy="16" r="11.600"/></clipPath><g clip-path="url(#lc)"><path d="M16 2v28M2 16h28" stroke="#1b3a5a" stroke-width="2.400"/><circle cx="16" cy="16" r="4.6" fill="#a4cf52" stroke="#4d9c30" stroke-width="0.92"/><circle cx="15.54" cy="15.45" r="2.85" fill="#c8e468" opacity=".85"/><circle cx="15.31" cy="15.08" r="1.52" fill="#e2f08a" opacity=".9"/></g></svg></i><b class="td" style="left:110px"></b>
<i class="IC" style="left:142px;top:992px"><svg width="32" height="32" viewBox="1.500 1.500 28.500 28.500"><path d="M3.500 4v23M15.500 17v10M27 17v10" stroke="#27376f" stroke-width="1.500"/><path d="M3.500 4h12M3.500 17h12" stroke="#3a5a9a" stroke-width="1.500"/><path d="M15.500 4h11.500v13h-11.500z" fill="none" stroke="#e01020" stroke-width="1.700"/><circle cx="3.5" cy="4" r="2" fill="#b8dc50" stroke="#3a8a2a" stroke-width=".6"/><circle cx="3.5" cy="17" r="2" fill="#b8dc50" stroke="#3a8a2a" stroke-width=".6"/><circle cx="15.5" cy="4" r="2.200" fill="#fff" stroke="#e01020" stroke-width="1.500"/><circle cx="27" cy="4" r="2.200" fill="#fff" stroke="#e01020" stroke-width="1.500"/><circle cx="15.5" cy="17" r="2.200" fill="#fff" stroke="#e01020" stroke-width="1.500"/><circle cx="27" cy="17" r="2.200" fill="#fff" stroke="#e01020" stroke-width="1.500"/></svg></i>
<i class="IC" style="left:188px;top:992px"><svg width="32" height="32" viewBox="1.300 1.300 29.400 29.400"><circle cx="27.300" cy="27.300" r="2.300" fill="#ececec" stroke="#c4c4c8" stroke-width=".5"/><circle cx="16" cy="16" r="13.800" fill="#f2f2f4" stroke="#a2a2a8" stroke-width=".7"/><circle cx="16" cy="16" r="12" fill="url(#lens)" stroke="#3f78c8" stroke-width=".8"/><clipPath id="lc"><circle cx="16" cy="16" r="11.600"/></clipPath><g clip-path="url(#lc)"><path d="M6 16h20" stroke="#1b3a5a" stroke-width="2.400"/><circle cx="6.5" cy="16" r="3.3" fill="#a4cf52" stroke="#4d9c30" stroke-width="0.80"/><circle cx="6.17" cy="15.60" r="2.05" fill="#c8e468" opacity=".85"/><circle cx="6.00" cy="15.34" r="1.09" fill="#e2f08a" opacity=".9"/><circle cx="25.5" cy="16" r="3.3" fill="#a4cf52" stroke="#4d9c30" stroke-width="0.80"/><circle cx="25.17" cy="15.60" r="2.05" fill="#c8e468" opacity=".85"/><circle cx="25.00" cy="15.34" r="1.09" fill="#e2f08a" opacity=".9"/></g></svg></i><b class="td" style="left:219px"></b>
<i class="IC" style="left:251px;top:992px"><svg width="32" height="32" viewBox="1.300 1.300 29.400 29.400"><circle cx="27.300" cy="27.300" r="2.300" fill="#ececec" stroke="#c4c4c8" stroke-width=".5"/><circle cx="16" cy="16" r="13.800" fill="#f2f2f4" stroke="#a2a2a8" stroke-width=".7"/><circle cx="16" cy="16" r="12" fill="url(#lens)" stroke="#3f78c8" stroke-width=".8"/><clipPath id="lc"><circle cx="16" cy="16" r="11.600"/></clipPath><g clip-path="url(#lc)"><path d="M12.500 2v28M19.500 2v28" stroke="#1b3a5a" stroke-width="2.800"/></g></svg></i>
<i class="IC" style="left:297px;top:992px"><svg width="32" height="32" viewBox="1.300 1.300 29.400 29.400"><circle cx="27.300" cy="27.300" r="2.300" fill="#ececec" stroke="#c4c4c8" stroke-width=".5"/><circle cx="16" cy="16" r="13.800" fill="#f2f2f4" stroke="#a2a2a8" stroke-width=".7"/><circle cx="16" cy="16" r="12" fill="url(#lens)" stroke="#3f78c8" stroke-width=".8"/><clipPath id="lc"><circle cx="16" cy="16" r="11.600"/></clipPath><g clip-path="url(#lc)"><path d="M2 12.500h28M2 19.500h28" stroke="#1b3a5a" stroke-width="2.800"/></g></svg></i>
<i class="IC" style="left:339px;top:992px"><svg width="32" height="32" viewBox="1.300 1.300 29.400 29.400"><circle cx="27.300" cy="27.300" r="2.300" fill="#ececec" stroke="#c4c4c8" stroke-width=".5"/><circle cx="16" cy="16" r="13.800" fill="#f2f2f4" stroke="#a2a2a8" stroke-width=".7"/><circle cx="16" cy="16" r="12" fill="url(#lens)" stroke="#3f78c8" stroke-width=".8"/><clipPath id="lc"><circle cx="16" cy="16" r="11.600"/></clipPath><g clip-path="url(#lc)"><path d="M16 16v-14M16 16h14M16 16l-10 11M16 16h-13" stroke="#1b3a5a" stroke-width="2.400"/><circle cx="16" cy="16" r="4.2" fill="#a4cf52" stroke="#4d9c30" stroke-width="0.84"/><circle cx="15.58" cy="15.50" r="2.60" fill="#c8e468" opacity=".85"/><circle cx="15.37" cy="15.16" r="1.39" fill="#e2f08a" opacity=".9"/></g></svg></i>
<i class="IC" style="left:386px;top:992px"><svg width="32" height="32" viewBox="1.300 1.300 29.400 29.400"><circle cx="27.300" cy="27.300" r="2.300" fill="#ececec" stroke="#c4c4c8" stroke-width=".5"/><circle cx="16" cy="16" r="13.800" fill="#f2f2f4" stroke="#a2a2a8" stroke-width=".7"/><circle cx="16" cy="16" r="12" fill="url(#lens)" stroke="#3f78c8" stroke-width=".8"/><clipPath id="lc"><circle cx="16" cy="16" r="11.600"/></clipPath><g clip-path="url(#lc)"><path d="M11 2v28M21 2v28M2 11h28M2 21h28" stroke="#1b3a5a" stroke-width="2.200"/></g></svg></i><b class="td" style="left:418px"></b>
<i class="IC" style="left:452px;top:992px"><svg width="32" height="32" viewBox="1.300 1.300 29.400 29.400"><circle cx="27.300" cy="27.300" r="2.300" fill="#ececec" stroke="#c4c4c8" stroke-width=".5"/><circle cx="16" cy="16" r="13.800" fill="#f2f2f4" stroke="#a2a2a8" stroke-width=".7"/><circle cx="16" cy="16" r="12" fill="url(#lens)" stroke="#3f78c8" stroke-width=".8"/><clipPath id="lc"><circle cx="16" cy="16" r="11.600"/></clipPath><g clip-path="url(#lc)"></g><text transform="translate(16 24) scale(0.95 1)" text-anchor="middle" font-family="Liberation Sans" font-size="21" fill="#2a2a5a">EF</text></svg></i><b class="td" style="left:484px"></b>
<i class="IC" style="left:517px;top:992px"><svg width="32" height="32" viewBox="1.300 1.300 29.400 29.400"><circle cx="27.300" cy="27.300" r="2.300" fill="#ececec" stroke="#c4c4c8" stroke-width=".5"/><circle cx="16" cy="16" r="13.800" fill="#f2f2f4" stroke="#a2a2a8" stroke-width=".7"/><circle cx="16" cy="16" r="12" fill="url(#lens)" stroke="#3f78c8" stroke-width=".8"/><clipPath id="lc"><circle cx="16" cy="16" r="11.600"/></clipPath><g clip-path="url(#lc)"><path d="M5 4l20 21" stroke="#1b3a5a" stroke-width="4.500"/><path d="M6.500 4.500l4 4.200" stroke="#5a9ac8" stroke-width="2"/><path d="M14 13.500l4 4.200" stroke="#e01020" stroke-width="2.600"/><path d="M18 17.700l4 4.200" stroke="#f4d820" stroke-width="2.600"/></g></svg></i><b class="td" style="left:549px"></b>
<i class="IC" style="left:582px;top:992px"><svg width="32" height="33" viewBox="0 0 32 33"><path d="M2 26l17-6l11 3l-17 7z" fill="#b5cf7c" stroke="#6e8c3c" stroke-width=".8"/><path d="M2 26v2.500l11 4v-2.500z" fill="#8fae55"/><path d="M13 30v2.500l17-7v-2.500z" fill="#a3c068"/><path d="M3 9l6-4.500v18.500l-6 3z" fill="#22386a"/><path d="M9 4.500l3.500 1v18.500l-3.500-1z" fill="#7a8cc0"/><path d="M5 10v13" stroke="#b8c4e0" stroke-width="1.600"/><path d="M10 8h1.500v9h-1.500z" fill="#cfd6ea"/><path d="M19.500 12l2.500-1.500v13l-2.500 1z" fill="#c81848"/><path d="M22 10.500l1.500 .5v13l-1.500-.5z" fill="#f06488"/></svg></i>
<i class="IC" style="left:625px;top:992px"><svg width="32" height="32" viewBox="0 0 32 32"><defs><linearGradient id="fun" x1="0" y1="0" x2="1" y2="0"><stop offset="0" stop-color="#5a9098"/><stop offset=".45" stop-color="#e8f4f6"/><stop offset="1" stop-color="#78a8b0"/></linearGradient></defs><path d="M1.500 4.500h29l-12 13v10.500h-4.500v-10.500z" fill="url(#fun)" stroke="#7a9aa0" stroke-width=".8"/><path d="M1.500 4.500h29" stroke="#c8d8dc" stroke-width="1.500"/></svg></i>
<i class="IC" style="left:667px;top:992px"><svg width="32" height="32" viewBox="0 0 32 32"><rect x="3" y="3" width="11" height="12" fill="none" stroke="#1f7ad8" stroke-width="2.2"/><path d="M1.900 14.500h13.200" stroke="#2a2a8a" stroke-width="2"/><rect x="3" y="16" width="11" height="12" fill="none" stroke="#e0106a" stroke-width="2.2"/><path d="M19 6c5 3 5 15 0 18" stroke="#2a9a2a" stroke-width="1.300" fill="none"/><path d="M17 5.500l4.500-1.500l-1.500 4.500zM17 24.500l4.500 1.500l-1.500-4.500z" fill="#2a9a2a"/><circle cx="30" cy="9" r=".8" fill="#d04040"/><circle cx="30" cy="19" r=".8" fill="#d04040"/></svg></i>
<i class="IC" style="left:712px;top:992px"><svg width="32" height="32" viewBox="0 0 32 32"><path d="M5 10h11v11h-11z" fill="none" stroke="#e89090" stroke-width="1.800"/><path d="M16 10h11M16 21h11M27 10v19M16 21v8M5 21v8" stroke="#a8b0c0" stroke-width="1.700" fill="none"/><path d="M13 9c0-8 12-8 12 0" stroke="#e89898" stroke-width="2.600" fill="none"/><path d="M9.500 10l4.500 7l4-7z" fill="#d08080"/><circle cx="5" cy="10" r="2" fill="#f4d8d8" stroke="#e0a0a0" stroke-width=".8"/><circle cx="5" cy="21" r="2" fill="#f4d8d8" stroke="#e0a0a0" stroke-width=".8"/><circle cx="16" cy="21" r="2" fill="#f4d8d8" stroke="#e0a0a0" stroke-width=".8"/><circle cx="27" cy="10" r="2" fill="#d8e8c8" stroke="#a8c898" stroke-width=".8"/><circle cx="27" cy="21" r="2" fill="#d8e8c8" stroke="#a8c898" stroke-width=".8"/></svg></i>
<i class="IC" style="left:754px;top:992px"><svg width="32" height="32" viewBox="0 0 32 32"><path d="M14 2c0-2 4-2 4 0l1 15h-6z" fill="#2a9a3a" stroke="#1a6a2a" stroke-width=".7"/><path d="M15 3v12" stroke="#7ad88a" stroke-width="1"/><rect x="11" y="17" width="10" height="3" fill="#4a4a4a"/><path d="M11 20h10l1.500 9h-13z" fill="#e8ecd8" stroke="#b8c0a0" stroke-width=".5"/><path d="M12 21l-1 8M14 21l-.5 8M16 21v8M18 21l.5 8M20 21l1 8" stroke="#98a880" stroke-width=".8"/><path d="M2 29.500h10" stroke="#f4f4f4" stroke-width="1.200"/></svg></i>
<div class="tsep" style="left:783px"></div>
<i class="IC" style="left:810px;top:992px"><svg width="32" height="32" viewBox="0 0 32 32"><rect x="3" y="2" width="11" height="11" fill="none" stroke="#1a5a9a" stroke-width="2.2"/><path d="M1 1l15 13M16 1l-15 13" stroke="#2a8a3a" stroke-width="1.300"/><rect x="3" y="17" width="11" height="11" fill="none" stroke="#e0106a" stroke-width="2.2"/><path d="M12.500 17a8 8 0 0 1 13.500-5" stroke="#22384a" stroke-width="2.600" fill="none"/><path d="M23.500 6l5.500 7.500l-8.500 .5z" fill="#22384a"/><path d="M28.500 19a8 8 0 0 1-13.500 6" stroke="#22384a" stroke-width="2.600" fill="none"/><path d="M17.500 31l-5.500-7.500l8.500-.5z" fill="#22384a"/></svg></i>
<i class="IC" style="left:853px;top:992px"><svg width="32" height="32" viewBox="0 0 32 32"><rect x="10" y="2" width="12" height="11" fill="none" stroke="#1f7ad8" stroke-width="2.2"/><path d="M8.900 14h14.200" stroke="#2a2a8a" stroke-width="2"/><path d="M7 1l18 13M25 1l-18 13" stroke="#2a8a3a" stroke-width="1.300"/><rect x="10" y="16" width="12" height="12" fill="none" stroke="#e0106a" stroke-width="2.2"/></svg></i>
<i class="IC" style="left:898px;top:992px"><svg width="32" height="32" viewBox="0 0 32 32"><path d="M4 5v23h23" stroke="#a0a0a0" stroke-width="1.400" fill="none"/><path d="M1.500 8l2.500-5l2.500 5zM24 25.500l5 2.500l-5 2.500z" fill="#a0a0a0"/><rect x="15" y="3" width="9" height="8" fill="none" stroke="#7ab0e0" stroke-width="1.8"/><path d="M13 2l13 10M26 2l-13 10" stroke="#9ac8a0" stroke-width="1.300"/><rect x="15" y="14" width="9" height="9" fill="none" stroke="#e890b8" stroke-width="1.8"/></svg></i>
<i class="IC" style="left:942px;top:992px"><svg width="32" height="32" viewBox="0 0 32 32"><rect x="10" y="2" width="12" height="11" fill="none" stroke="#1f7ad8" stroke-width="2.2"/><path d="M8.900 14h14.200" stroke="#2a2a8a" stroke-width="2"/><rect x="10" y="16" width="12" height="12" fill="none" stroke="#e0106a" stroke-width="2.2"/><path d="M7 15l18 14M25 15l-18 14" stroke="#2a8a3a" stroke-width="1.300"/></svg></i>
<i class="IC" style="left:986px;top:992px"><svg width="32" height="32" viewBox="0 0 32 32"><path d="M7 17c0-9 10-11 14-6" stroke="#9a90c8" stroke-width="3" fill="none"/><path d="M2.500 16l5 7l4-7z" fill="#9a90c8"/><rect x="12" y="16" width="12" height="12" fill="none" stroke="#e070a8" stroke-width="2"/><rect x="12" y="3" width="11" height="10" fill="none" stroke="#a0c8e8" stroke-width="1.5"/></svg></i>
<i class="IC" style="left:1030px;top:992px"><svg width="32" height="32" viewBox="0 0 32 32"><path d="M4 29v-17l8-4h14v8M12 8v12M4 16h8M19 8v21M26 12v10M12 16h14" stroke="#2a3450" stroke-width="2" fill="none"/></svg></i>
<i class="IC" style="left:1073px;top:992px"><svg width="32" height="32" viewBox="0 0 32 32"><path d="M4 29v-19l7-3h16v19M11 7v19M27 22l-7 3.500h-16M20 25.500v4M20 10v10" stroke="#6a80a8" stroke-width="1.400" fill="none"/><path d="M4 17l7-3h16l-7 3.500z" fill="#e02020" opacity=".9"/><path d="M5 25l6-3h15l-6 3z" fill="#a8c8e0"/></svg></i>
<div class="tsep" style="left:1099px"></div>
<i class="IC" style="left:1127px;top:992px"><svg width="32" height="32" viewBox="0 0 32 32"><circle cx="12" cy="11" r="8.500" fill="#b8d4f0" stroke="#e8e8f0" stroke-width="2"/><path d="M18.500 17.500l9.500 9.500" stroke="#111" stroke-width="4" stroke-linecap="round"/><path d="M20 19l7 7" stroke="#888" stroke-width=".8" stroke-dasharray="1 1"/></svg></i>
<i class="IC" style="left:1170px;top:992px"><svg width="32" height="32" viewBox="0 0 32 32"><circle cx="12" cy="11" r="8.500" fill="#b8d4f0" stroke="#e8e8f0" stroke-width="2"/><path d="M18.500 17.500l9.500 9.500" stroke="#111" stroke-width="4" stroke-linecap="round"/><path d="M20 19l7 7" stroke="#888" stroke-width=".8" stroke-dasharray="1 1"/><path d="M15 12l6 3M21 9l4 3" stroke="#e01020" stroke-width="3"/></svg></i>
<div class="tsep" style="left:1196px"></div>
<i class="IC" style="left:1228px;top:992px"><svg width="32" height="32" viewBox="0 0 32 32"><defs><linearGradient id="cw" x1="0" y1="0" x2="1" y2="1"><stop offset="0" stop-color="#d02010"/><stop offset=".4" stop-color="#ff9a10"/><stop offset=".7" stop-color="#fff020"/><stop offset="1" stop-color="#ffe060"/></linearGradient></defs><path d="M3 8l10-6l8 2v25h-12l-6-12z" fill="url(#cw)"/><path d="M3 8l6 10" stroke="#8a4a3a" stroke-width="1.500"/></svg></i>
<i class="IC" style="left:1268px;top:992px"><svg width="32" height="32" viewBox="0 0 32 32"><path d="M3 19h24" stroke="#4a6ab0" stroke-width="1.300" stroke-dasharray="1.500 1.500"/><circle cx="4" cy="19" r="2.3" fill="#b8dc50" stroke="#3a8a2a" stroke-width=".6"/><circle cx="28" cy="19" r="2.3" fill="#b8dc50" stroke="#3a8a2a" stroke-width=".6"/><text x="16" y="15" text-anchor="middle" font-family="Liberation Serif" font-style="italic" font-weight="bold" font-size="15" fill="#1a1a3a">E</text></svg></i>
<i class="IC" style="left:1326px;top:992px"><svg width="32" height="32" viewBox="0 0 32 32"><circle cx="17" cy="6" r="1.500" fill="#444"/><path d="M5 26l2.500-7l14-15l4.500 4.500l-14 15z" fill="#f8b820" stroke="#b07a10" stroke-width=".7"/><path d="M9 20.500l13-14" stroke="#ffe070" stroke-width="1.500"/><path d="M5 26l2.500-7l4.500 4.500z" fill="#f0d8b0"/><path d="M5 26l1-3l2 2z" fill="#111"/></svg></i>
<i class="IC" style="left:1376px;top:992px"><svg width="32" height="32" viewBox="0 0 32 32"><path d="M10 12c6-4 16-3 18 4c-4 4-12 4-18 0z" fill="#e82020"/><path d="M8 6v22" stroke="#b8b8b8" stroke-width="1.200"/><path d="M7 26l2.500-7l14-15l4.500 4.500l-14 15z" fill="#f8b820" stroke="#b07a10" stroke-width=".7"/><path d="M9 20.500l13-14" stroke="#ffe070" stroke-width="1.500"/><path d="M7 26l2.500-7l4.500 4.500z" fill="#f0d8b0"/><path d="M7 26l1-3l2 2z" fill="#111"/></svg></i>
<div class="abs" style="left:1402px;top:968px;width:16px;height:47px;background:linear-gradient(#a9aeb9,#7d828e 55%,#555a66);border-radius:0 3px 3px 0"></div><svg style="left:1404px;top:998px" width="12" height="12" viewBox="0 0 12 12"><path d="M1 2h9" stroke="#fff" stroke-width="2"/><path d="M2 6h7l-3.5 4z" fill="#fff"/><path d="M2.5 6.5h6l-3 3.2z" fill="#333"/></svg>
<!-- view toolbar -->
<div class="tb" style="left:1421px;width:480px;border-radius:3px"></div>
<svg style="left:1425px;top:975px" width="4" height="32" viewBox="0 0 4 32"><path d="M2 0v32" stroke="#1a1a1a" stroke-width="2" stroke-dasharray="2 1.5"/><path d="M3 1v32" stroke="#fff" stroke-width="1" stroke-dasharray="2 1.5"/></svg>
<i class="IC" style="left:1453px;top:992px"><svg width="32" height="32" viewBox="0 0 32 32"><path d="M2 28L2 12" stroke="#e01020" stroke-width="2"/><path d="M2 28L24 28" stroke="#10a040" stroke-width="1.8"/><path d="M27.0 28.0L21.0 25.3L21.0 30.7z" fill="#10a040"/><path d="M2 28L20 10" stroke="#2a4a9a" stroke-width="2"/><path d="M22.0 8.0L15.8 10.3L19.7 14.2z" fill="#2a4a9a"/><path d="M9 14a9 9 0 0 1 15-7" stroke="#22384a" stroke-width="2" fill="none"/><path d="M21 2l5 6l-7 1z" fill="#22384a"/><path d="M27 16a9 9 0 0 1-10 8" stroke="#22384a" stroke-width="2" fill="none"/><path d="M19 27.500l-5-3.500l6-2.500z" fill="#22384a"/></svg></i>
<i class="IC" style="left:1496px;top:992px"><svg width="32" height="32" viewBox="0 0 32 32"><path d="M4 28L4 6" stroke="#e01020" stroke-width="1.6"/><path d="M4.0 1.5L1.3 7.5L6.7 7.5z" fill="#e01020"/><path d="M4 28L27 28" stroke="#10a040" stroke-width="1.6"/><path d="M32.0 28.0L26.0 25.3L26.0 30.7z" fill="#10a040"/><path d="M4 28L21 11" stroke="#3a2a9a" stroke-width="1.6"/><path d="M24.0 8.0L17.8 10.3L21.7 14.2z" fill="#3a2a9a"/></svg></i>
<div class="hl" style="left:1519px;top:970px;width:42px;height:43px"></div>
<i class="IC" style="left:1540px;top:992px"><svg width="32" height="32" viewBox="0 0 32 32"><path d="M16 26L16 7" stroke="#e01020" stroke-width="1.6"/><path d="M16.0 2.0L13.3 8.0L18.7 8.0z" fill="#e01020"/><path d="M16 26L26 21" stroke="#10a040" stroke-width="1.6"/><path d="M29.5 19.0L23.5 19.4L25.8 23.8z" fill="#10a040"/><path d="M16 26L7 21" stroke="#3a2a9a" stroke-width="1.6"/><path d="M3.5 19.0L7.2 23.8L9.5 19.4z" fill="#3a2a9a"/><text x="18" y="9" font-family="Liberation Sans" font-size="8" fill="#333">Z</text><text x="23" y="17" font-family="Liberation Sans" font-size="8" fill="#333">X</text><text x="3" y="17" font-family="Liberation Sans" font-size="8" fill="#333">Y</text></svg></i>
<i class="IC" style="left:1584px;top:992px"><svg width="32" height="32" viewBox="0 0 32 32"><path d="M4 27L4 7" stroke="#e01020" stroke-width="1.6"/><path d="M4.0 1.5L1.3 7.5L6.7 7.5z" fill="#e01020"/><path d="M4 27L20 27" stroke="#10a040" stroke-width="1.6"/><path d="M26.0 27.0L20.0 24.3L20.0 29.7z" fill="#10a040"/><circle cx="4" cy="27" r="1.800" fill="#2a2a8a"/><text x="8.500" y="19.500" font-family="Liberation Sans" font-size="11.200" fill="#333" stroke="#333" stroke-width=".3" letter-spacing="1.600">XZ</text></svg></i><b class="td" style="left:1617px"></b>
<i class="IC" style="left:1650px;top:992px"><svg width="32" height="32" viewBox="0 0 32 32"><path d="M4 27L4 7" stroke="#3a2a9a" stroke-width="1.6"/><path d="M4.0 1.5L1.3 7.5L6.7 7.5z" fill="#3a2a9a"/><path d="M4 27L20 27" stroke="#10a040" stroke-width="1.6"/><path d="M26.0 27.0L20.0 24.3L20.0 29.7z" fill="#10a040"/><circle cx="4" cy="27" r="1.800" fill="#e01020"/><text x="8.500" y="19.500" font-family="Liberation Sans" font-size="11.200" fill="#333" stroke="#333" stroke-width=".3" letter-spacing="1.600">XY</text></svg></i><b class="td" style="left:1684px"></b>
<i class="IC" style="left:1717px;top:992px"><svg width="32" height="32" viewBox="0 0 32 32"><path d="M4 27L4 7" stroke="#e01020" stroke-width="1.6"/><path d="M4.0 1.5L1.3 7.5L6.7 7.5z" fill="#e01020"/><path d="M4 27L20 27" stroke="#3a2a9a" stroke-width="1.6"/><path d="M26.0 27.0L20.0 24.3L20.0 29.7z" fill="#3a2a9a"/><circle cx="4" cy="27" r="1.800" fill="#10a040"/><text x="8.500" y="19.500" font-family="Liberation Sans" font-size="11.200" fill="#333" stroke="#333" stroke-width=".3" letter-spacing="1.600">YZ</text></svg></i><b class="td" style="left:1749px"></b>
<i class="IC" style="left:1781px;top:992px"><svg width="32" height="32" viewBox="0 0 32 32"><path d="M8 7h25l-7 18h-25z" fill="#d6e6f2"/><path d="M10 12.500h19M7 18.500h20M14.500 12.500l-5 12M22.500 12.500l-5 12M12 8l-1.800 4.500M33 7l-7 18" stroke="#1b3a5a" stroke-width="1.900" fill="none"/><path d="M10 12.500l-5 12" stroke="#1b3a5a" stroke-width="1.900"/></svg></i>
<i class="IC" style="left:1828px;top:992px"><svg width="32" height="32" viewBox="0 0 32 32"><path d="M18 4a12 12 0 1 1-13 10" stroke="#1f3a78" stroke-width="2.600" fill="none"/><path d="M1 16l4.500-8l5 8z" fill="#1f3a78"/></svg></i><b class="td" style="left:1860px"></b>
<div class="abs" style="left:1901px;top:968px;width:19px;height:47px;background:linear-gradient(#a9aeb9,#7d828e 55%,#555a66)"></div><svg style="left:1903px;top:975px" width="14" height="40" viewBox="0 0 14 40"><path d="M1 2l3 3l-3 3M7 2l3 3l-3 3" stroke="#fff" stroke-width="1.6" fill="none"/><path d="M1 25h10" stroke="#fff" stroke-width="2"/><path d="M2 29h8l-4 4z" fill="#fff"/></svg>
<!-- ================= STATUS BAR ================= -->
<style>
.sb{position:absolute;top:1017px;height:23px;background:linear-gradient(#d2d2d2 0,#c9c9c9 6px,#a2a2a2 7px,#8e9090 23px)}
.sbb{position:absolute;top:1020px;height:18px;background:#d6d6d6;border:1px solid #cfcfcf}
.scb{position:absolute;top:1020px;height:18px;background:#f0f0f0;border:1px solid #dcdcdc;font-size:11.5px;line-height:16px;padding-left:3px;white-space:nowrap;overflow:hidden}
.sdd{position:absolute;top:1027px;width:0;height:0;border-left:3px solid transparent;border-right:3px solid transparent;border-top:3.5px solid #555}
.ssep{position:absolute;top:1019px;width:1px;height:20px;background:#555;box-shadow:1px 0 0 #e8e8e8}
.sic{position:absolute;display:block;width:20px;height:16px;margin:-8px 0 0 -10px}
.sic svg{left:0;top:0}
</style>
<div class="abs" style="left:782px;top:1016px;width:1px;height:24px;background:#0c0c0c"></div><div class="sb" style="left:783px;width:1137px;border-left:2px solid #e0e0e0"></div>
<div class="hl" style="left:791px;top:1020px;width:22px;height:18px;border-radius:1px;border-color:#f0c070"></div>
<div class="sbb" style="left:814px;width:23px"></div><div class="sbb" style="left:838px;width:23px"></div><div class="sbb" style="left:862px;width:23px"></div>
<i class="sic" style="left:802px;top:1029px"><svg width="20" height="16" viewBox="0 0 20 16"><path d="M15.500 13.500c1.500-5-1.500-9-8-8.800" stroke="#2f8f2a" stroke-width="2.800" fill="none"/><path d="M1.800 4.700l6-4v8z" fill="#2f8f2a"/><path d="M15 13c1.200-4.500-1.500-7.800-7.500-7.600" stroke="#7fd070" stroke-width=".8" fill="none"/><path d="M2.500 15.500l1-3.500l9.500-9.500l2.500 2.500l-9.500 9.500z" fill="#f8c820" stroke="#a87a10" stroke-width=".6"/><path d="M13 2.500l1-1l2.500 2.500l-1 1z" fill="#f08a8a"/><path d="M12.300 3.200l.7-.7l2.500 2.500l-.7 .7z" fill="#d8d8d8"/><path d="M2.500 15.500l1-3.500l2.500 2.500z" fill="#f4d8b0"/><path d="M2.500 15.500l.4-1.400l1 1z" fill="#222"/><path d="M5 12.500l8.500-8.500" stroke="#fff0a0" stroke-width=".8"/></svg></i>
<i class="sic" style="left:825px;top:1029px"><svg width="20" height="16" viewBox="0 0 20 16"><path d="M16 14c2-6-2-10-8-9.500v-3l-6 5l6 5v-3c4-.5 6 2 4 6z" fill="#a4a4a4" stroke="#9a9a9a" stroke-width=".6"/><circle cx="12" cy="10" r="2" fill="#c8c8c8"/></svg></i>
<i class="sic" style="left:849px;top:1029px"><svg width="20" height="16" viewBox="0 0 20 16"><path d="M16 14c2-6-2-10-8-9.500v-3l-6 5l6 5v-3c4-.5 6 2 4 6z" fill="#a4a4a4" stroke="#9a9a9a" stroke-width=".6"/><path d="M9 9h5l-2.500 4z" fill="#c8c8c8"/></svg></i>
<i class="sic" style="left:873px;top:1029px"><svg width="20" height="16" viewBox="0 0 20 16"><path d="M16 14c2-6-2-10-8-9.500v-3l-6 5l6 5v-3c4-.5 6 2 4 6z" fill="#a4a4a4" stroke="#9a9a9a" stroke-width=".6"/><path d="M9 12h6" stroke="#c8c8c8" stroke-width="1.500"/></svg></i>
<div class="scb" style="left:886px;width:114px"></div><b class="sdd" style="left:990px"></b>
<div class="ssep" style="left:1003px"></div>
<div class="sbb" style="left:1006px;width:23px"></div><div class="sbb" style="left:1030px;width:23px"></div>
<svg style="left:1009px;top:1023px" width="42" height="12" viewBox="0 0 42 12"><path d="M1 11c0-4 1.500-9 4-10h6c2.500 1 4 6 4 10z" fill="#a0a0a0"/><path d="M25 1c0 4 1.500 9 4 10h6c2.500-1 4-6 4-10z" fill="#a0a0a0"/></svg>
<div class="scb" style="left:1055px;width:133px">1. Загружение 1</div><b class="sdd" style="left:1178px"></b>
<div class="ssep" style="left:1191px"></div>
<div class="sbb" style="left:1194px;width:23px"></div><div class="sbb" style="left:1218px;width:23px"></div><div class="sbb" style="left:1242px;width:23px"></div><div class="sbb" style="left:1266px;width:23px"></div><div class="sbb" style="left:1290px;width:23px"></div>
<i class="sic" style="left:1206px;top:1029px"><svg width="20" height="16" viewBox="0 0 20 16"><path d="M2 4v9M2 8.500c2-3 4-3 5.500 0s3.500 3 5.500 0" stroke="#222" stroke-width="1.400" fill="none"/><path d="M14.500 1v6" stroke="#2a3ab0" stroke-width="1.600"/><path d="M12 5.500l2.500 4l2.500-4z" fill="#2a3ab0"/></svg></i>
<i class="sic" style="left:1229px;top:1029px"><svg width="20" height="16" viewBox="0 0 20 16"><path d="M3 12c0-6 4-9 8-9c4 0 5 4 2 6s-6 2-8 4c4 1.500 9 1 12-3" stroke="#a8a8a8" stroke-width="1.500" fill="none"/></svg></i>
<i class="sic" style="left:1254px;top:1029px"><svg width="20" height="16" viewBox="0 0 20 16"><path d="M10 2v9M6 6l4-2l4 2M5 14c2-3 8-3 10 0M10 11l-3 3M10 11l3 3" stroke="#a8a8a8" stroke-width="1.400" fill="none"/><path d="M8 1l2 2.500l2-2.500z" fill="#a8a8a8"/></svg></i>
<svg style="left:1269px;top:1023px" width="42" height="12" viewBox="0 0 42 12"><path d="M1 11c0-4 1.500-9 4-10h6c2.500 1 4 6 4 10z" fill="#a0a0a0"/><path d="M25 1c0 4 1.500 9 4 10h6c2.500-1 4-6 4-10z" fill="#a0a0a0"/></svg>
<div class="scb" style="left:1317px;width:51px"></div><b class="sdd" style="left:1360px"></b>
<div class="scb" style="left:1372px;width:54px"><span style="display:inline-block;width:37px;overflow:hidden">Середні</span></div><b class="sdd" style="left:1416px"></b>

<div class="sbb" style="left:1434px;width:23px"></div>
<div class="hl" style="left:1459px;top:1020px;width:22px;height:18px;border-radius:1px"></div>
<i class="sic" style="left:1446px;top:1029px"><svg width="20" height="16" viewBox="0 0 20 16"><path d="M4 9l4 4.500l8-11" stroke="#a4a4a4" stroke-width="2" fill="none"/><path d="M2 15h5" stroke="#a4a4a4" stroke-width=".8" stroke-dasharray="1 1"/></svg></i>
<i class="sic" style="left:1470px;top:1029px"><svg width="20" height="16" viewBox="0 0 20 16"><text x="1" y="10" font-family="Liberation Sans" font-weight="bold" font-size="10" fill="#5a5a2a">№</text><path d="M6 8l3.500 5.500l8-11" stroke="#3a8a1a" stroke-width="2" fill="none"/><path d="M9 5l2 4l5-7" stroke="#8ac85a" stroke-width=".8" fill="none"/></svg></i>
<div class="ssep" style="left:1485px"></div>
<div class="sbb" style="left:1488px;width:23px"></div>
<i class="sic" style="left:1499px;top:1029px"><svg width="20" height="16" viewBox="0 0 20 16"><path d="M4 3h11l-9 10h10" stroke="#a4a4a4" stroke-width="2.200" fill="none"/><path d="M2 15l3-6l9-8" stroke="#bcbcbc" stroke-width="1.200" fill="none"/></svg></i>
<div class="scb" style="left:1512px;width:54px">1.</div><b class="sdd" style="left:1556px"></b>
<div class="ssep" style="left:1569px"></div><div class="ssep" style="left:1704px"></div><div class="ssep" style="left:1837px"></div>
<div class="t" style="left:1575px;top:1024px;font-size:11px;color:#1c1c1c">Вуз.: 0 / 1271</div>
<div class="t" style="left:1708px;top:1024px;font-size:11px;color:#1c1c1c">Ел.: 0 / 1200</div>
<div class="t" style="left:1841px;top:1024px;font-size:11px;color:#1c1c1c">Зав.: 1 / 1</div>
<!-- ================= LEFT TOOLTIP ================= -->
<div class="tip" style="left:89px;top:383px;width:210px;height:54px"></div>
<i class="ic" style="left:102px;top:394px"><svg width="16" height="16" viewBox="0 0 16 16"><text x="-.3" y="12.600" font-family="Liberation Serif" font-size="15.500" fill="#c8181c" stroke="#c8181c" stroke-width=".35">Q</text><path d="M11.300 .7l3.200 2.800l-1.500 2v3" stroke="#6a3aa8" stroke-width="1.200" fill="none"/><path d="M10.700 8l2.300 3.200l2.300-3.200z" fill="#6a3aa8"/><circle cx="13" cy="13.800" r="2" fill="#1a2a1a"/><path d="M12.200 14.300l1.600-1.200" stroke="#9ad890" stroke-width=".9"/></svg></i>
<div class="t" style="left:117px;top:389px;font-size:11px;font-weight:bold;color:#4c4c4c;letter-spacing:-.15px">Тепловий потік в вузлах</div>
<div class="t" style="left:117px;top:407px;font-size:11.5px;color:#4c4c4c;line-height:13px;white-space:normal;width:180px">Розрахувати тепловий потік в вузлах</div>

<!-- ================= LEFT DIALOG ================= -->
<div class="dlg" style="left:47px;top:439px;width:272px;height:458px">
 <div class="cap" style="height:30px"></div>
</div>
<div class="t" style="left:56px;top:449px;font-size:12px;color:#fff">Розрахувати тепловий потік</div>
<svg style="left:298px;top:449px" width="11" height="11" viewBox="0 0 11 11"><path d="M.5 .5l10 10M10.5 .5l-10 10" stroke="#fff" stroke-width="1.1"/></svg>
<div class="t s11" style="left:62px;top:488px">Список елементів</div>
<div class="btn" style="left:174px;top:482px;width:58px;height:18px;border:2px solid #0078d7;line-height:14px">Оновити</div>
<div class="btn" style="left:244px;top:482px;width:58px;height:18px;line-height:16px">Виділити</div>
<div class="edit" style="left:65px;top:506px;width:240px;height:78px"></div>
<div class="t s11" style="left:71px;top:511px">376-500 1001-1125</div>
<div class="gb" style="left:58px;top:601px;width:254px;height:221px"><i style="left:6px">Вузли примикання фрагменту</i></div>
<div class="t s11" style="left:83px;top:617px">Номер групи вузлів</div>
<div class="edit" style="left:242px;top:610px;width:30px;height:23px"></div>
<div class="t s11" style="left:246px;top:615px">1</div>
<div class="abs" style="left:274px;top:611px;width:14px;height:10px;border:1px solid #dadada;background:#f0f0f0"></div>
<div class="abs" style="left:274px;top:622px;width:14px;height:10px;border:1px solid #dadada;background:#f0f0f0"></div>
<svg style="left:278px;top:614px" width="7" height="16" viewBox="0 0 7 16"><path d="M0 4l3.5-3.5l3.5 3.5zM0 11.5l3.5 3.5l3.5-3.5z" fill="#606060"/></svg>
<div class="btn" style="left:72px;top:640px;width:58px;height:18px;line-height:16px">Створити</div>
<div class="btn" style="left:141px;top:640px;width:58px;height:18px;line-height:16px">Видалити</div>
<div class="t s11" style="left:63px;top:684px;color:#a0a0a0">Кут повороту навколо осіZ</div>
<div class="abs" style="left:234px;top:676px;width:35px;height:23px;border:1px solid #d4d4d4;background:#f3f3f3"></div>
<div class="t s11" style="left:274px;top:684px;color:#a0a0a0">, град</div>
<div class="t s11" style="left:62px;top:719px">Список вузлів</div>
<div class="btn" style="left:174px;top:713px;width:58px;height:18px;line-height:16px">Оновити</div>
<div class="btn" style="left:244px;top:713px;width:58px;height:18px;line-height:16px">Виділити</div>
<div class="edit" style="left:65px;top:738px;width:240px;height:78px"></div>
<div class="t s11" style="left:71px;top:743px">379-504 808-908</div>
<div class="btn" style="left:82px;top:835px;width:204px;height:21px;font-size:12px;line-height:21px">Виконати розрахунок</div>
<div class="btn" style="left:214px;top:868px;width:31px;height:21px"></div>
<div class="btn" style="left:247px;top:868px;width:31px;height:21px"></div>
<div class="btn" style="left:280px;top:868px;width:31px;height:21px"></div>
<i class="ic" style="left:229px;top:878px"><svg width="16" height="16" viewBox="0 0 16 16"><path d="M3 9l3.500 4.500l7-11" stroke="#4a9a2a" stroke-width="2.200" fill="none" stroke-linecap="round"/><path d="M3.200 8.800l3.300 3.700l6.500-10" stroke="#9ad85a" stroke-width=".8" fill="none"/><path d="M2 14.500h3" stroke="#8a8a8a" stroke-width=".8" stroke-dasharray="1 1"/></svg></i>
<i class="ic" style="left:262px;top:878px"><svg width="16" height="16" viewBox="0 0 16 16"><path d="M2.500 2l11 12M13.500 2l-11 12" stroke="#c01818" stroke-width="2.600" stroke-linecap="round"/><path d="M3 2.300l10.500 11.500" stroke="#f06060" stroke-width=".7"/></svg></i>
<i class="ic" style="left:295px;top:878px"><svg width="16" height="16" viewBox="0 0 16 16"><text x="8" y="14" text-anchor="middle" font-family="Liberation Serif" font-weight="bold" font-size="16" fill="#3a6a1a">?</text><text x="7.600" y="13.600" text-anchor="middle" font-family="Liberation Serif" font-weight="bold" font-size="16" fill="#5a9a2a">?</text></svg></i>

<!-- ================= RIGHT DIALOG ================= -->
<div class="dlg" style="left:990px;top:406px;width:454px;height:585px">
 <div class="cap" style="height:31px"></div>
</div>
<div class="t" style="left:999px;top:416px;font-size:12px;color:#fff">Сумування навантажень</div>
<svg style="left:1422px;top:415px" width="11" height="11" viewBox="0 0 11 11"><path d="M.5 .5l10 10M10.5 .5l-10 10" stroke="#fff" stroke-width="1.1"/></svg>
<style>
.rd{position:absolute;width:13px;height:13px;border-radius:50%;border:1px solid #333;background:#fff;margin:-6.5px 0 0 -6.5px}
.rd.dis{border-color:#bcbcbc}
.rd.on:after{content:"";position:absolute;left:2px;top:2px;width:7px;height:7px;border-radius:50%;background:#222}
.grid{position:absolute;background:#fff;border:1px solid #646464}
.gl{position:absolute;background:#d8d8d8}
</style>
<div class="gb" style="left:1000px;top:445px;width:354px;height:22px"></div>
<div class="rd dis" style="left:1011px;top:455px"></div><div class="t s11" style="left:1020px;top:450px;color:#838383">Навантаже</div>
<div class="rd dis" style="left:1093px;top:455px"></div><div class="t s11" style="left:1102px;top:450px;color:#838383">Інерційні сили</div>
<div class="rd on" style="left:1221px;top:455px"></div><div class="t s11" style="left:1230px;top:450px">Тепловий потік</div>
<div class="btn" style="left:1361px;top:445px;width:31px;height:21px"></div><i class="ic" style="left:1376px;top:455px"><svg width="16" height="16" viewBox="0 0 16 16"><path d="M3 9l3.500 4.500l7-11" stroke="#4a9a2a" stroke-width="2.200" fill="none" stroke-linecap="round"/><path d="M3.200 8.800l3.300 3.700l6.500-10" stroke="#9ad85a" stroke-width=".8" fill="none"/><path d="M2 14.500h3" stroke="#8a8a8a" stroke-width=".8" stroke-dasharray="1 1"/></svg></i>
<div class="btn" style="left:1361px;top:467px;width:31px;height:21px"></div><i class="ic" style="left:1376px;top:477px"><svg width="16" height="16" viewBox="0 0 16 16"><text x="8" y="14" text-anchor="middle" font-family="Liberation Serif" font-weight="bold" font-size="16" fill="#3a6a1a">?</text><text x="7.600" y="13.600" text-anchor="middle" font-family="Liberation Serif" font-weight="bold" font-size="16" fill="#5a9a2a">?</text></svg></i>
<div class="gb" style="left:1000px;top:475px;width:171px;height:59px"><i style="left:6px">Список вузлів</i></div>
<div class="edit" style="left:1005px;top:484px;width:161px;height:47px;border-color:#646464"></div>
<div class="abs" style="left:1147px;top:485px;width:18px;height:45px;background:#f0f0f0"></div>
<svg style="left:1151px;top:489px" width="10" height="38" viewBox="0 0 10 38"><path d="M1.5 6.5l3.5-3.5l3.5 3.5M1.5 31l3.5 3.5l3.5-3.5" stroke="#b8b8b8" stroke-width="1.2" fill="none"/></svg>
<div class="t s11" style="left:1014px;top:489px">379-504 808-908</div>
<div class="gb" style="left:1180px;top:475px;width:174px;height:59px"><i style="left:6px">Список елементів</i></div>
<div class="edit" style="left:1180px;top:484px;width:161px;height:47px;border-color:#646464"></div>
<div class="abs" style="left:1322px;top:485px;width:18px;height:45px;background:#f0f0f0"></div>
<svg style="left:1326px;top:489px" width="10" height="38" viewBox="0 0 10 38"><path d="M1.5 6.5l3.5-3.5l3.5 3.5M1.5 31l3.5 3.5l3.5-3.5" stroke="#b8b8b8" stroke-width="1.2" fill="none"/></svg>
<div class="t s11" style="left:1186px;top:489px">Усі</div>
<div class="gb" style="left:1000px;top:543px;width:287px;height:65px"><i style="left:6px">Вибір завантаження</i></div>
<div class="gb" style="left:1003px;top:549px;width:275px;height:56px"></div>
<div class="rd on" style="left:1020px;top:564px"></div><div class="t s11" style="left:1029px;top:559px;width:67px;overflow:hidden">Завантаження</div>
<div class="t s11" style="left:1123px;top:559px">№</div>
<div class="edit" style="left:1185px;top:552px;width:39px;height:23px"></div><div class="t s11" style="left:1192px;top:557px">1</div>
<div class="abs" style="left:1227px;top:553px;width:14px;height:10px;border:1px solid #dadada;background:#f0f0f0"></div>
<div class="abs" style="left:1227px;top:564px;width:14px;height:10px;border:1px solid #dadada;background:#f0f0f0"></div>
<svg style="left:1231px;top:556px" width="7" height="16" viewBox="0 0 7 16"><path d="M0 4l3.5-3.5l3.5 3.5zM0 11.5l3.5 3.5l3.5-3.5z" fill="#606060"/></svg>
<div class="rd dis" style="left:1020px;top:588px"></div><div class="t s11" style="left:1029px;top:583px;color:#838383">РСН</div>
<div class="gb" style="left:1291px;top:558px;width:93px;height:25px"><i style="left:6px">Одиниці</i></div>
<div class="abs" style="left:1296px;top:566px;width:73px;height:14px;border:1px solid #fff;border-top:2px solid #696969;border-left:2px solid #696969"></div>
<div class="t s11" style="left:1296px;top:568px;width:73px;text-align:center">Дж/с</div>
<div class="gb" style="left:1004px;top:620px;width:422px;height:140px"><i style="left:6px">Сумарні навантаження</i></div>
<div class="grid" style="left:1006px;top:629px;width:413px;height:125px"></div>
<div class="abs" style="left:1007px;top:630px;width:411px;height:17px;background:#c0c0c0;border-bottom:1px solid #8a8a8a"></div>
<div class="abs" style="left:1255px;top:647px;width:163px;height:16px;background:#ffb4b4"></div>
<div class="gl" style="left:1059px;top:630px;width:1px;height:123px"></div><div class="abs" style="left:1059px;top:630px;width:1px;height:17px;background:#f4f4f4"></div><div class="abs" style="left:1058px;top:630px;width:1px;height:17px;background:#8a8a8a"></div><div class="gl" style="left:1124px;top:630px;width:1px;height:123px"></div><div class="abs" style="left:1124px;top:630px;width:1px;height:17px;background:#f4f4f4"></div><div class="abs" style="left:1123px;top:630px;width:1px;height:17px;background:#8a8a8a"></div><div class="gl" style="left:1189px;top:630px;width:1px;height:123px"></div><div class="abs" style="left:1189px;top:630px;width:1px;height:17px;background:#f4f4f4"></div><div class="abs" style="left:1188px;top:630px;width:1px;height:17px;background:#8a8a8a"></div><div class="gl" style="left:1254px;top:630px;width:1px;height:123px"></div><div class="abs" style="left:1254px;top:630px;width:1px;height:17px;background:#f4f4f4"></div><div class="abs" style="left:1253px;top:630px;width:1px;height:17px;background:#8a8a8a"></div><div class="gl" style="left:1337px;top:630px;width:1px;height:123px"></div><div class="abs" style="left:1337px;top:630px;width:1px;height:17px;background:#f4f4f4"></div><div class="abs" style="left:1336px;top:630px;width:1px;height:17px;background:#8a8a8a"></div><div class="gl" style="left:1007px;top:663px;width:411px;height:1px"></div><div class="gl" style="left:1007px;top:680px;width:411px;height:1px"></div><div class="gl" style="left:1007px;top:697px;width:411px;height:1px"></div><div class="gl" style="left:1007px;top:714px;width:411px;height:1px"></div><div class="gl" style="left:1007px;top:731px;width:411px;height:1px"></div><div class="gl" style="left:1007px;top:747px;width:411px;height:1px"></div>
<div class="t s11" style="left:1060px;top:634px;width:65px;text-align:center">Об'ємні</div>
<div class="t s11" style="left:1125px;top:634px;width:65px;text-align:center">Пластини</div>
<div class="t s11" style="left:1190px;top:634px;width:65px;text-align:center">Стержні</div>
<div class="t s11" style="left:1255px;top:634px;width:83px;text-align:center">Вузли</div>
<div class="t s11" style="left:1338px;top:634px;width:80px;text-align:center">Усього</div>
<div class="t" style="left:1011px;top:650px;font-family:'Liberation Serif',serif;font-size:12.5px">Σ T</div>
<div class="t" style="left:1259px;top:649px;font-size:13px;color:#6a1a1a;-webkit-text-stroke:0">7511.4282</div>
<div class="t" style="left:1338px;top:648px;width:79px;text-align:right;font-size:13px;color:#6a1a1a">7511.4282</div>
<div class="gb" style="left:1004px;top:774px;width:422px;height:68px"><i style="left:6px">Координати центрів сил</i></div>
<div class="grid" style="left:1006px;top:783px;width:413px;height:54px"></div>
<div class="gl" style="left:1081px;top:784px;width:1px;height:52px"></div><div class="gl" style="left:1156px;top:784px;width:1px;height:52px"></div><div class="gl" style="left:1231px;top:784px;width:1px;height:52px"></div><div class="gl" style="left:1306px;top:784px;width:1px;height:52px"></div><div class="gl" style="left:1381px;top:784px;width:1px;height:52px"></div><div class="gl" style="left:1007px;top:800px;width:411px;height:1px"></div><div class="gl" style="left:1007px;top:817px;width:411px;height:1px"></div>
<div class="gb" style="left:1002px;top:849px;width:423px;height:129px"><i style="left:7px">Перекидаючий момент</i></div>
<div class="gb" style="left:1004px;top:873px;width:188px;height:67px"><i style="left:6px">Контрольна точка A</i></div>
<div class="grid" style="left:1009px;top:882px;width:173px;height:56px"></div>
<div class="gb" style="left:1206px;top:873px;width:189px;height:67px"><i style="left:6px">Момент відносно A</i></div>
<div class="grid" style="left:1213px;top:882px;width:173px;height:56px"></div>
<div class="gl" style="left:1084px;top:883px;width:1px;height:51px"></div><div class="gl" style="left:1159px;top:883px;width:1px;height:51px"></div><div class="gl" style="left:1010px;top:899px;width:150px;height:1px"></div><div class="gl" style="left:1010px;top:916px;width:150px;height:1px"></div><div class="gl" style="left:1010px;top:933px;width:150px;height:1px"></div><div class="gl" style="left:1288px;top:883px;width:1px;height:51px"></div><div class="gl" style="left:1363px;top:883px;width:1px;height:51px"></div><div class="gl" style="left:1214px;top:899px;width:150px;height:1px"></div><div class="gl" style="left:1214px;top:916px;width:150px;height:1px"></div><div class="gl" style="left:1214px;top:933px;width:150px;height:1px"></div>
<div class="abs" style="left:1035px;top:950px;width:13px;height:13px;border:1px solid #cfcfcf;background:#fff"></div>
<div class="t s11" style="left:1051px;top:952px;color:#838383">Вказати курсором</div>
<div class="abs" style="left:1246px;top:948px;width:114px;height:19px;background:#ccc;border:1px solid #bfbfbf"></div>
<div class="t s11" style="left:1246px;top:953px;width:114px;text-align:center;color:#838383">Обчислити</div>

<!-- ================= RIGHT TOOLTIP ================= -->
<div class="tip" style="left:1189px;top:382px;width:211px;height:55px"></div>
<i class="ic" style="left:1203px;top:394px"><svg width="16" height="16" viewBox="0 0 16 16"><text x="-.3" y="12.800" font-family="Liberation Serif" font-weight="bold" font-size="16" fill="#1a1a3a">Σ</text><path d="M11.300 .5l3.200 2.800l-1.500 2v3" stroke="#6a3aa8" stroke-width="1.200" fill="none"/><path d="M10.700 7.800l2.300 3.200l2.300-3.200z" fill="#6a3aa8"/><circle cx="13" cy="13.800" r="1.900" fill="#2a4a1a"/><path d="M12.300 14.300l1.500-1.100" stroke="#a8e090" stroke-width=".9"/></svg></i>
<div class="t" style="left:1217px;top:388px;font-size:11px;font-weight:bold;color:#4c4c4c;letter-spacing:-.15px">Підсумувати тепловий потік</div>
<div class="t" style="left:1217px;top:406px;font-size:11.5px;color:#4c4c4c;line-height:13px;white-space:normal;width:185px">Розрахувати сумарний тепловий потік в обраному завантаженні</div>
</body>
</html>
